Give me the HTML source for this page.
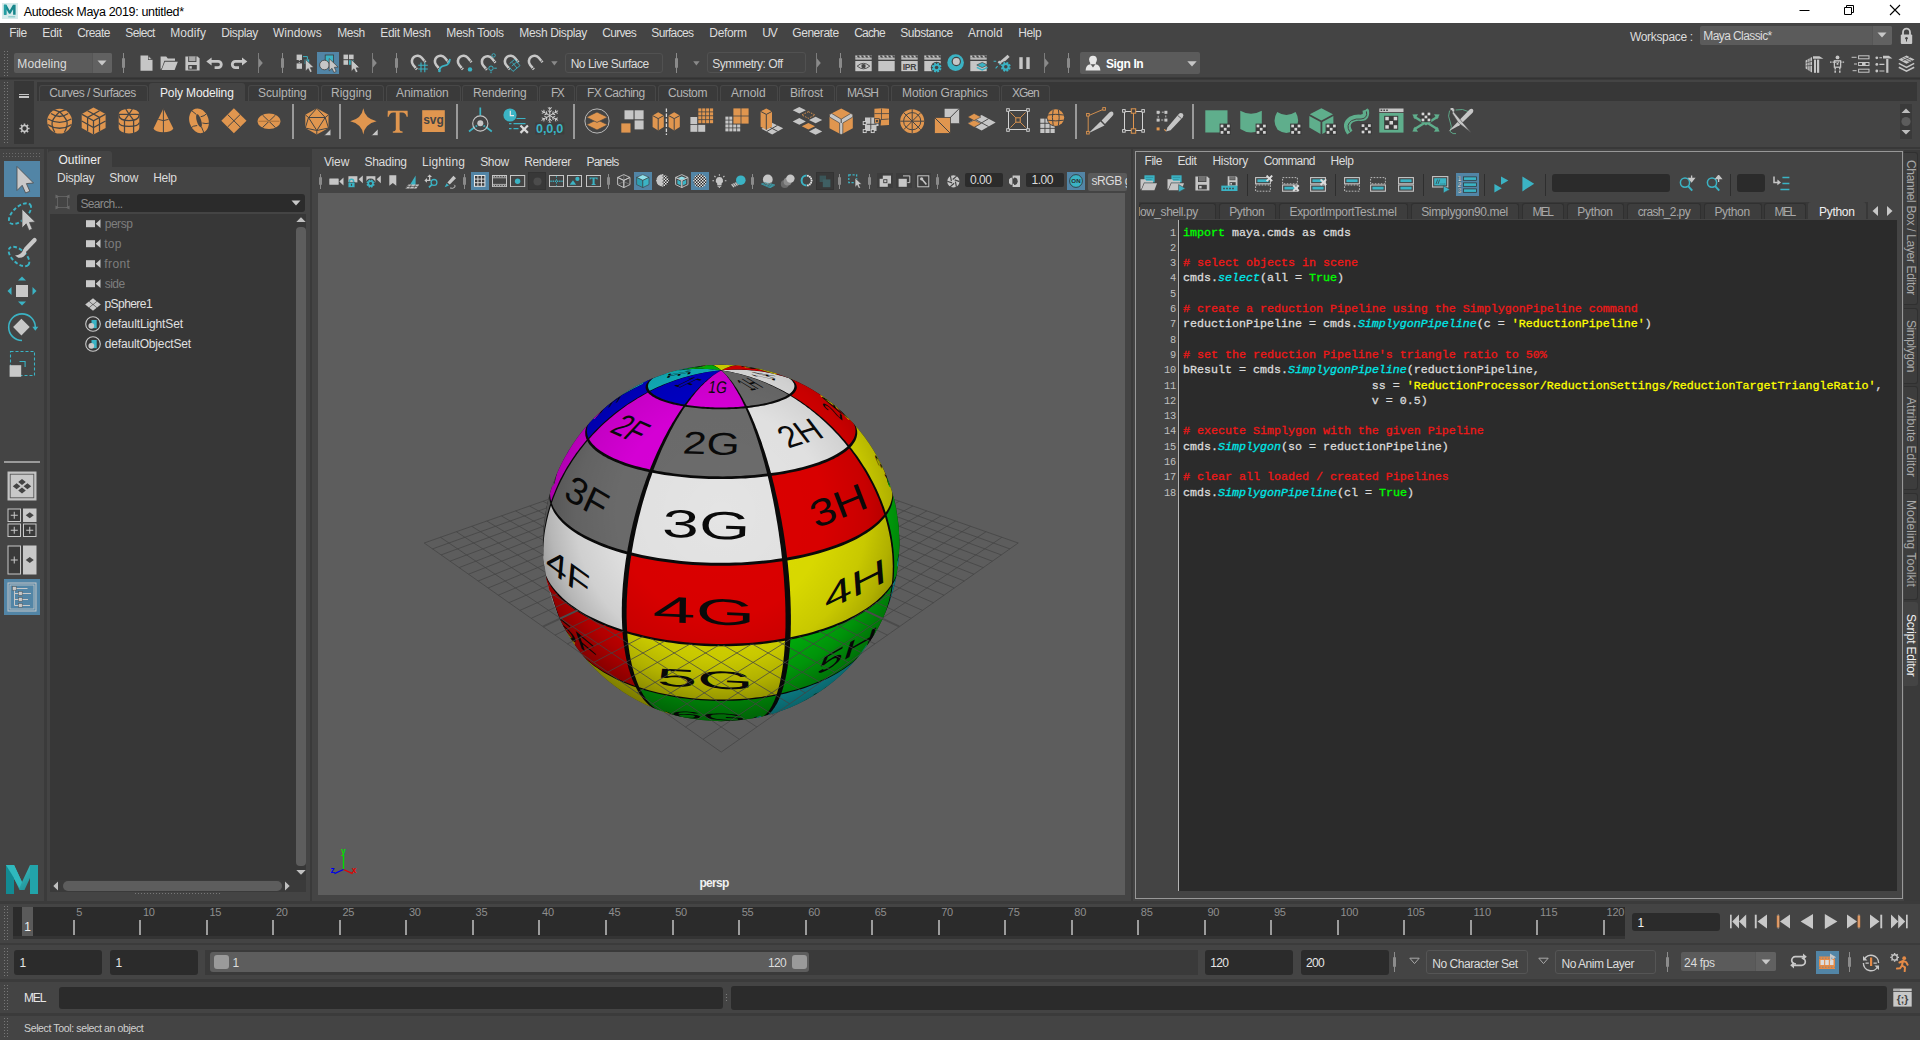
<!DOCTYPE html>
<html><head><meta charset="utf-8"><title>Autodesk Maya 2019: untitled*</title>
<style>
html,body{margin:0;padding:0;}
body{width:1920px;height:1040px;position:relative;overflow:hidden;background:#444444;font-family:"Liberation Sans",sans-serif;font-size:11px;color:#ccc;}
body div,body svg{position:absolute;box-sizing:border-box;}
.t{white-space:pre;}
</style></head><body>
<div style="left:0px;top:0px;width:1920px;height:23px;background:#ffffff;"></div>
<svg style="left:2px;top:3px;" width="16" height="16" viewBox="0 0 16 16"><rect width="16" height="16" fill="#d6ebeb"/><path d="M1.9 11.7V1.7h2.5L7.7 7.4l3.3-5.7h2.6V11.7h-2.5V6.2L8.4 10.8H7L4.4 6.2V11.7z" fill="#17868c"/><path d="M1.9 11.7V1.7h2.5V11.7z" fill="#249ea2"/><rect x="6.2" y="13.2" width="7" height="1.2" fill="#86caca"/></svg>
<div class="t" style="left:23.7px;top:2.6999999999999993px;font-size:12.5px;line-height:18px;color:#000;letter-spacing:-0.330px;">Autodesk Maya 2019: untitled*</div>
<svg style="left:1798px;top:4px;" width="16" height="16" viewBox="0 0 16 16"><path d="M1.5 6.5H11.5" stroke="#000" stroke-width="1" fill="none"/></svg>
<svg style="left:1843px;top:4px;" width="16" height="16" viewBox="0 0 16 16"><path d="M1.5 3.5h7v7h-7zM3.5 3.5v-2h7v7h-2" stroke="#000" stroke-width="1" fill="none"/></svg>
<svg style="left:1889px;top:4px;" width="16" height="16" viewBox="0 0 16 16"><path d="M1 1l10 10M11 1L1 11" stroke="#000" stroke-width="1.1" fill="none"/></svg>
<div class="t" style="left:9.3px;top:24.5px;font-size:12px;line-height:17px;color:#dcdcdc;letter-spacing:-0.484px;">File</div>
<div class="t" style="left:42.3px;top:24.5px;font-size:12px;line-height:17px;color:#dcdcdc;letter-spacing:-0.320px;">Edit</div>
<div class="t" style="left:77.3px;top:24.5px;font-size:12px;line-height:17px;color:#dcdcdc;letter-spacing:-0.603px;">Create</div>
<div class="t" style="left:125.3px;top:24.5px;font-size:12px;line-height:17px;color:#dcdcdc;letter-spacing:-0.659px;">Select</div>
<div class="t" style="left:170.3px;top:24.5px;font-size:12px;line-height:17px;color:#dcdcdc;letter-spacing:0.059px;">Modify</div>
<div class="t" style="left:221.3px;top:24.5px;font-size:12px;line-height:17px;color:#dcdcdc;letter-spacing:-0.378px;">Display</div>
<div class="t" style="left:273px;top:24.5px;font-size:12px;line-height:17px;color:#dcdcdc;letter-spacing:0.003px;">Windows</div>
<div class="t" style="left:337.3px;top:24.5px;font-size:12px;line-height:17px;color:#dcdcdc;letter-spacing:-0.486px;">Mesh</div>
<div class="t" style="left:380.3px;top:24.5px;font-size:12px;line-height:17px;color:#dcdcdc;letter-spacing:-0.329px;">Edit Mesh</div>
<div class="t" style="left:446.3px;top:24.5px;font-size:12px;line-height:17px;color:#dcdcdc;letter-spacing:-0.308px;">Mesh Tools</div>
<div class="t" style="left:519.3px;top:24.5px;font-size:12px;line-height:17px;color:#dcdcdc;letter-spacing:-0.360px;">Mesh Display</div>
<div class="t" style="left:602.3px;top:24.5px;font-size:12px;line-height:17px;color:#dcdcdc;letter-spacing:-0.718px;">Curves</div>
<div class="t" style="left:651.3px;top:24.5px;font-size:12px;line-height:17px;color:#dcdcdc;letter-spacing:-0.670px;">Surfaces</div>
<div class="t" style="left:709.3px;top:24.5px;font-size:12px;line-height:17px;color:#dcdcdc;letter-spacing:-0.324px;">Deform</div>
<div class="t" style="left:762.3px;top:24.5px;font-size:12px;line-height:17px;color:#dcdcdc;letter-spacing:-1.135px;">UV</div>
<div class="t" style="left:792.3px;top:24.5px;font-size:12px;line-height:17px;color:#dcdcdc;letter-spacing:-0.454px;">Generate</div>
<div class="t" style="left:854.3px;top:24.5px;font-size:12px;line-height:17px;color:#dcdcdc;letter-spacing:-0.858px;">Cache</div>
<div class="t" style="left:900.3px;top:24.5px;font-size:12px;line-height:17px;color:#dcdcdc;letter-spacing:-0.479px;">Substance</div>
<div class="t" style="left:968px;top:24.5px;font-size:12px;line-height:17px;color:#dcdcdc;letter-spacing:0.002px;">Arnold</div>
<div class="t" style="left:1018.3px;top:24.5px;font-size:12px;line-height:17px;color:#dcdcdc;letter-spacing:-0.420px;">Help</div>
<div class="t" style="left:1630px;top:28.5px;font-size:12px;line-height:17px;color:#dcdcdc;letter-spacing:-0.343px;">Workspace :</div>
<div style="left:1700px;top:26px;width:192px;height:19px;background:#5b5b5b;border-radius:2px;"></div>
<div style="left:1871.5px;top:26px;width:20.5px;height:19px;background:#616161;border-radius:0 2px 2px 0;border-left:1px solid #565656;"></div>
<div class="t" style="left:1703.3px;top:28.0px;font-size:12px;line-height:17px;color:#dcdcdc;letter-spacing:-0.586px;">Maya Classic*</div>
<svg style="left:1877px;top:32px;" width="10" height="6" viewBox="0 0 10 6"><path d="M0.5 0.5h9L5 5.5z" fill="#c8c8c8"/></svg>
<svg style="left:1900px;top:27px;" width="13" height="18" viewBox="0 0 13 18"><path d="M3 8V5.2a3.5 3.5 0 0 1 7 0V8" stroke="#c8c8c8" stroke-width="1.8" fill="none"/><rect x="0.8" y="7.5" width="11.4" height="9.5" rx="1" fill="#c8c8c8"/><circle cx="6.5" cy="11.2" r="1.3" fill="#444"/><rect x="6" y="11.5" width="1" height="3" fill="#444"/></svg>
<div style="left:2.5px;top:50px;width:5px;height:28px;background-image:radial-gradient(circle,#787878 0.6px,transparent 0.95px);background-size:3px 3px;"></div>
<div style="left:14px;top:53px;width:98px;height:20px;background:#5b5b5b;border-radius:2px;"></div>
<div style="left:92px;top:53px;width:20px;height:20px;background:#616161;border-radius:0 2px 2px 0;border-left:1px solid #565656;"></div>
<div class="t" style="left:17.3px;top:56.099999999999994px;font-size:12px;line-height:17px;color:#dcdcdc;letter-spacing:0.100px;">Modeling</div>
<svg style="left:97px;top:60px;" width="10" height="6" viewBox="0 0 10 6"><path d="M0.5 0.5h9L5 5.5z" fill="#c8c8c8"/></svg>
<div style="left:0px;top:77px;width:1920px;height:3px;background:#3a3a3a;"></div>
<div style="left:0px;top:78px;width:1920px;height:1px;background:#333333;"></div>
<div style="left:2.5px;top:81px;width:5px;height:62px;background-image:radial-gradient(circle,#787878 0.6px,transparent 0.95px);background-size:3px 3px;"></div>
<div style="left:14px;top:81px;width:20px;height:63px;background:#373737;"></div>
<div style="left:37px;top:82px;width:1880px;height:18.5px;background:#373737;"></div>
<div style="left:19px;top:93.7px;width:10.3px;height:1.6px;background:#c4c4c4;"></div>
<div style="left:19px;top:96.3px;width:10.3px;height:1.6px;background:#c4c4c4;"></div>
<svg style="left:19.1px;top:122.8px;" width="11" height="11" viewBox="0 0 11 11"><circle cx="5.5" cy="5.5" r="2.9" stroke="#c4c4c4" stroke-width="1.5" fill="none"/><g stroke="#c4c4c4" stroke-width="1.6"><path d="M5.5 0.4v1.8M5.5 8.8v1.8M0.4 5.5h1.8M8.8 5.5h1.8M1.9 1.9l1.3 1.3M7.8 7.8l1.3 1.3M1.9 9.1l1.3-1.3M7.8 3.2l1.3-1.3"/></g></svg>
<div style="left:39px;top:85px;width:108.5px;height:15.5px;background:#3a3a3a;border:1px solid #474747;border-bottom:none;border-radius:3px 3px 0 0;"></div>
<div class="t" style="left:49.3px;top:84.5px;font-size:12px;line-height:17px;color:#b4b4b4;letter-spacing:-0.528px;">Curves / Surfaces</div>
<div style="left:149px;top:83px;width:96px;height:18px;background:#444444;border-radius:3px 3px 0 0;"></div>
<div class="t" style="left:160px;top:84.5px;font-size:12px;line-height:17px;color:#f0f0f0;letter-spacing:-0.129px;">Poly Modeling</div>
<div style="left:247.5px;top:85px;width:71.5px;height:15.5px;background:#3a3a3a;border:1px solid #474747;border-bottom:none;border-radius:3px 3px 0 0;"></div>
<div class="t" style="left:258px;top:84.5px;font-size:12px;line-height:17px;color:#b4b4b4;letter-spacing:-0.074px;">Sculpting</div>
<div style="left:320.5px;top:85px;width:63.5px;height:15.5px;background:#3a3a3a;border:1px solid #474747;border-bottom:none;border-radius:3px 3px 0 0;"></div>
<div class="t" style="left:331px;top:84.5px;font-size:12px;line-height:17px;color:#b4b4b4;letter-spacing:0.001px;">Rigging</div>
<div style="left:385.5px;top:85px;width:75.0px;height:15.5px;background:#3a3a3a;border:1px solid #474747;border-bottom:none;border-radius:3px 3px 0 0;"></div>
<div class="t" style="left:396px;top:84.5px;font-size:12px;line-height:17px;color:#b4b4b4;letter-spacing:-0.074px;">Animation</div>
<div style="left:462px;top:85px;width:75.5px;height:15.5px;background:#3a3a3a;border:1px solid #474747;border-bottom:none;border-radius:3px 3px 0 0;"></div>
<div class="t" style="left:473px;top:84.5px;font-size:12px;line-height:17px;color:#b4b4b4;letter-spacing:-0.208px;">Rendering</div>
<div style="left:539px;top:85px;width:35.5px;height:15.5px;background:#3a3a3a;border:1px solid #474747;border-bottom:none;border-radius:3px 3px 0 0;"></div>
<div class="t" style="left:551px;top:84.5px;font-size:12px;line-height:17px;color:#b4b4b4;letter-spacing:-1.667px;">FX</div>
<div style="left:576px;top:85px;width:80px;height:15.5px;background:#3a3a3a;border:1px solid #474747;border-bottom:none;border-radius:3px 3px 0 0;"></div>
<div class="t" style="left:587px;top:84.5px;font-size:12px;line-height:17px;color:#b4b4b4;letter-spacing:-0.500px;">FX Caching</div>
<div style="left:657.5px;top:85px;width:60.5px;height:15.5px;background:#3a3a3a;border:1px solid #474747;border-bottom:none;border-radius:3px 3px 0 0;"></div>
<div class="t" style="left:668px;top:84.5px;font-size:12px;line-height:17px;color:#b4b4b4;letter-spacing:-0.391px;">Custom</div>
<div style="left:720px;top:85px;width:57.5px;height:15.5px;background:#3a3a3a;border:1px solid #474747;border-bottom:none;border-radius:3px 3px 0 0;"></div>
<div class="t" style="left:731px;top:84.5px;font-size:12px;line-height:17px;color:#b4b4b4;letter-spacing:0.002px;">Arnold</div>
<div style="left:779px;top:85px;width:55.5px;height:15.5px;background:#3a3a3a;border:1px solid #474747;border-bottom:none;border-radius:3px 3px 0 0;"></div>
<div class="t" style="left:790px;top:84.5px;font-size:12px;line-height:17px;color:#b4b4b4;letter-spacing:-0.144px;">Bifrost</div>
<div style="left:836px;top:85px;width:53px;height:15.5px;background:#3a3a3a;border:1px solid #474747;border-bottom:none;border-radius:3px 3px 0 0;"></div>
<div class="t" style="left:847px;top:84.5px;font-size:12px;line-height:17px;color:#b4b4b4;letter-spacing:-0.918px;">MASH</div>
<div style="left:891px;top:85px;width:108.5px;height:15.5px;background:#3a3a3a;border:1px solid #474747;border-bottom:none;border-radius:3px 3px 0 0;"></div>
<div class="t" style="left:902px;top:84.5px;font-size:12px;line-height:17px;color:#b4b4b4;letter-spacing:-0.111px;">Motion Graphics</div>
<div style="left:1001px;top:85px;width:48.5px;height:15.5px;background:#3a3a3a;border:1px solid #474747;border-bottom:none;border-radius:3px 3px 0 0;"></div>
<div class="t" style="left:1012px;top:84.5px;font-size:12px;line-height:17px;color:#b4b4b4;letter-spacing:-0.997px;">XGen</div>
<div style="left:1900px;top:104px;width:12px;height:35px;background:#3a3a3a;"></div>
<svg style="left:1901px;top:106px;" width="10" height="31" viewBox="0 0 10 31"><path d="M0.5 7L5 2.5L9.5 7z" fill="#bdbdbd"/><circle cx="5" cy="15.5" r="4.6" fill="#5d5d5d"/><path d="M0.5 24L5 28.5L9.5 24z" fill="#bdbdbd"/></svg>
<div style="left:0px;top:146.6px;width:1920px;height:2.4px;background:#383838;"></div>
<div style="left:122.5px;top:53px;width:1px;height:20px;background:#8a8a8a;"></div>
<div style="left:121.5px;top:58px;width:3px;height:10px;background:#8a8a8a;border-radius:1px;"></div>
<svg style="left:139.5px;top:55px;" width="13" height="16" viewBox="0 0 13 16"><path d="M0.5 0.4H8L12.5 4.9V15.8H0.5z" fill="#c6c6c6"/><path d="M8 0.4V4.9H12.5z" fill="#444444"/><path d="M8.6 1.6V4.3H11.3z" fill="#c6c6c6"/></svg>
<svg style="left:160.3px;top:56px;" width="18" height="14.5" viewBox="0 0 18 14.5"><path d="M0.6 13.6V0.6H6.2L7.8 2.4H15V4.8H4.4L1.8 12z" fill="#c6c6c6"/><path d="M4.9 5.8H17.8L14.6 13.9H1.6z" fill="#c6c6c6"/></svg>
<svg style="left:184.5px;top:55.5px;" width="15" height="15" viewBox="0 0 15 15"><path d="M0.4 0.4H12.6L14.6 2.4V14.6H0.4z" fill="#c6c6c6"/><rect x="3.2" y="0.4" width="8.2" height="5.6" fill="#444444"/><rect x="4.1" y="0.4" width="6.4" height="4.7" fill="#a8a8a8"/><rect x="3.2" y="9" width="8.6" height="4.6" fill="#444444"/><rect x="4.4" y="10.2" width="2.4" height="2.4" fill="#c6c6c6"/></svg>
<svg style="left:205.8px;top:57px;" width="18" height="13" viewBox="0 0 18 13"><path d="M5.6 0.4L0.3 4.4L5.6 8.4V5.8H12.2A1.7 1.7 0 0 1 12.2 9.2H8.6V12H12.2A4.5 4.5 0 0 0 12.2 3H5.6z" fill="#c6c6c6"/></svg>
<svg style="left:229.6px;top:57px;" width="18" height="13" viewBox="0 0 18 13"><g transform="translate(17.6,0) scale(-1,1)"><path d="M5.6 0.4L0.3 4.4L5.6 8.4V5.8H12.2A1.7 1.7 0 0 1 12.2 9.2H8.6V12H12.2A4.5 4.5 0 0 0 12.2 3H5.6z" fill="#c6c6c6"/></g></svg>
<div style="left:258.1px;top:53px;width:1px;height:20px;background:#7c7c7c;"></div>
<svg style="left:258.90000000000003px;top:58.0px;" width="5" height="10" viewBox="0 0 5 10"><path d="M0 0.5L3.8 5L0 9.5z" fill="#8a8a8a"/></svg>
<div style="left:281.8px;top:53px;width:1px;height:20px;background:#8a8a8a;"></div>
<div style="left:280.8px;top:58px;width:3px;height:10px;background:#8a8a8a;border-radius:1px;"></div>
<svg style="left:296.3px;top:53.5px;" width="18" height="19" viewBox="0 0 18 19"><rect x="0.6" y="0.6" width="5.4" height="5.4" fill="#c6c6c6"/><rect x="0.6" y="9.4" width="5.4" height="5.4" fill="#c6c6c6"/><path d="M3.3 6v3.4" stroke="#c6c6c6" stroke-width="0.9" stroke-dasharray="1 1"/><path d="M7 2.6h4.4v2.6" fill="none" stroke="#3bb3c4" stroke-width="1"/><rect x="8.6" y="5.4" width="4.6" height="4.6" fill="#3bb3c4"/><path d="M9.4 5.2L9.4 17.2L12.2 14.6L14.0 18.6L16.2 17.6L14.4 13.7L18.0 13.5z" fill="#c6c6c6" stroke="#3d3d3d" stroke-width="0.7" stroke-linejoin="round"/></svg>
<div style="left:317px;top:52px;width:22.2px;height:22px;background:#5285a6;"></div>
<svg style="left:318.5px;top:53.5px;" width="20" height="19" viewBox="0 0 20 19"><rect x="6.2" y="1" width="8.4" height="8.4" fill="#3bb3c4" stroke="#3d3d3d" stroke-width="0.8"/><circle cx="5.4" cy="11" r="4.8" fill="#c6c6c6" stroke="#3d3d3d" stroke-width="0.8"/><path d="M10.2 4.6L10.2 16.9L13.0 14.3L14.9 18.5L17.2 17.4L15.3 13.3L19.1 13.1z" fill="#c6c6c6" stroke="#3d3d3d" stroke-width="0.7" stroke-linejoin="round"/></svg>
<svg style="left:343.2px;top:53.5px;" width="18" height="19" viewBox="0 0 18 19"><rect x="0.5" y="0.6" width="4.6" height="4.6" fill="#c6c6c6"/><rect x="6" y="0.6" width="4.6" height="4.6" fill="#c6c6c6"/><rect x="0.5" y="6.2" width="4.6" height="4.6" fill="#c6c6c6"/><rect x="6" y="6.2" width="4.6" height="4.6" fill="#3bb3c4"/><path d="M8.2 5.4L8.2 17.4L11.0 14.8L12.8 18.8L15.0 17.8L13.2 13.9L16.8 13.7z" fill="#c6c6c6" stroke="#3d3d3d" stroke-width="0.7" stroke-linejoin="round"/></svg>
<div style="left:371.8px;top:53px;width:1px;height:20px;background:#7c7c7c;"></div>
<svg style="left:372.6px;top:58.0px;" width="5" height="10" viewBox="0 0 5 10"><path d="M0 0.5L3.8 5L0 9.5z" fill="#8a8a8a"/></svg>
<div style="left:395.8px;top:53px;width:1px;height:20px;background:#8a8a8a;"></div>
<div style="left:394.8px;top:58px;width:3px;height:10px;background:#8a8a8a;border-radius:1px;"></div>
<svg style="left:410px;top:54px;" width="19" height="19" viewBox="0 0 19 19"><g transform="rotate(-40 8 8)"><path d="M2.4 13V7.2a5.6 5.6 0 0 1 11.2 0V13" fill="none" stroke="#c6c6c6" stroke-width="2.6"/><path d="M1.1 11.4h2.6M12.3 11.4h2.6" stroke="#444444" stroke-width="0.8"/></g><path d="M8.2 11.2h9.6M8.2 15h9.6M11 8.6v9.6M14.8 8.6v9.6" stroke="#3bb3c4" stroke-width="1.1"/></svg>
<svg style="left:433.3px;top:54px;" width="19" height="19" viewBox="0 0 19 19"><g transform="rotate(-40 8 8)"><path d="M2.4 13V7.2a5.6 5.6 0 0 1 11.2 0V13" fill="none" stroke="#c6c6c6" stroke-width="2.6"/><path d="M1.1 11.4h2.6M12.3 11.4h2.6" stroke="#444444" stroke-width="0.8"/></g><path d="M6.4 17.4Q6.6 12.4 11.6 11.6Q16.4 11 17 4.8" fill="none" stroke="#3bb3c4" stroke-width="1.7"/><circle cx="6.4" cy="17" r="1.3" fill="#3bb3c4"/></svg>
<svg style="left:456.3px;top:54px;" width="19" height="19" viewBox="0 0 19 19"><g transform="rotate(-40 8 8)"><path d="M2.4 13V7.2a5.6 5.6 0 0 1 11.2 0V13" fill="none" stroke="#c6c6c6" stroke-width="2.6"/><path d="M1.1 11.4h2.6M12.3 11.4h2.6" stroke="#444444" stroke-width="0.8"/></g><circle cx="14" cy="15.4" r="2.2" fill="#3bb3c4"/></svg>
<svg style="left:479.6px;top:52.5px;" width="19" height="21" viewBox="0 0 19 21"><g transform="translate(0,1.5)"><g transform="rotate(-40 8 8)"><path d="M2.4 13V7.2a5.6 5.6 0 0 1 11.2 0V13" fill="none" stroke="#c6c6c6" stroke-width="2.6"/><path d="M1.1 11.4h2.6M12.3 11.4h2.6" stroke="#444444" stroke-width="0.8"/></g></g><circle cx="13.6" cy="2.4" r="1.7" fill="none" stroke="#3bb3c4" stroke-width="0.9"/><circle cx="11" cy="15.2" r="2.2" fill="none" stroke="#3bb3c4" stroke-width="1"/><path d="M14.2 15.2h2.6M11 18.4v1.8" stroke="#3bb3c4" stroke-width="1"/></svg>
<svg style="left:502.5px;top:54px;" width="19" height="19" viewBox="0 0 19 19"><g transform="rotate(-40 8 8)"><path d="M2.4 13V7.2a5.6 5.6 0 0 1 11.2 0V13" fill="none" stroke="#c6c6c6" stroke-width="2.6"/><path d="M1.1 11.4h2.6M12.3 11.4h2.6" stroke="#444444" stroke-width="0.8"/></g><path d="M6.6 9.6L11.6 5.4L17 11.6L10 17.4L6.6 13.6M9.4 8.6l4.6 5.4M8.8 12l5-4" fill="none" stroke="#3bb3c4" stroke-width="0.9"/></svg>
<svg style="left:526.5px;top:54px;" width="19" height="19" viewBox="0 0 19 19"><g transform="rotate(-40 8 8)"><path d="M2.4 13V7.2a5.6 5.6 0 0 1 11.2 0V13" fill="none" stroke="#c6c6c6" stroke-width="2.6"/><path d="M1.1 11.4h2.6M12.3 11.4h2.6" stroke="#444444" stroke-width="0.8"/></g></svg>
<svg style="left:551px;top:61px;" width="7" height="5" viewBox="0 0 7 5"><path d="M0.2 0.3h6.4L3.4 4.4z" fill="#8a8a8a"/></svg>
<div style="left:565px;top:52.6px;width:98.3px;height:20.8px;background:#444444;border:1px solid #515151;border-radius:3px;"></div>
<div class="t" style="left:570.7px;top:55.900000000000006px;font-size:12px;line-height:17px;color:#dcdcdc;letter-spacing:-0.492px;">No Live Surface</div>
<div style="left:675.5px;top:53px;width:1px;height:20px;background:#8a8a8a;"></div>
<div style="left:674.5px;top:58px;width:3px;height:10px;background:#8a8a8a;border-radius:1px;"></div>
<svg style="left:693px;top:60.5px;" width="7" height="5" viewBox="0 0 7 5"><path d="M0.2 0.3h6.4L3.4 4.4z" fill="#8a8a8a"/></svg>
<div style="left:706.7px;top:52px;width:99px;height:21.3px;background:#444444;border:1px solid #515151;border-radius:3px;"></div>
<div class="t" style="left:712.3px;top:55.900000000000006px;font-size:12px;line-height:17px;color:#dcdcdc;letter-spacing:-0.466px;">Symmetry: Off</div>
<div style="left:816.2px;top:53px;width:1px;height:20px;background:#7c7c7c;"></div>
<svg style="left:817.0px;top:58.0px;" width="5" height="10" viewBox="0 0 5 10"><path d="M0 0.5L3.8 5L0 9.5z" fill="#8a8a8a"/></svg>
<div style="left:839.9px;top:53px;width:1px;height:20px;background:#8a8a8a;"></div>
<div style="left:838.9px;top:58px;width:3px;height:10px;background:#8a8a8a;border-radius:1px;"></div>
<svg style="left:854.5px;top:54.7px;" width="17" height="17" viewBox="0 0 17 17"><rect x="0.3" y="0.4" width="16.4" height="4.2" fill="#c6c6c6"/><path d="M1.6 0.4h2.2l1.4 2.1h-2.2z" fill="#444444"/><path d="M2.2 2.5h2.2l-1.2 2.1h-2.2z" fill="#444444" opacity="0"/><path d="M5.699999999999999 0.4h2.2l1.4 2.1h-2.2z" fill="#444444"/><path d="M6.299999999999999 2.5h2.2l-1.2 2.1h-2.2z" fill="#444444" opacity="0"/><path d="M9.799999999999999 0.4h2.2l1.4 2.1h-2.2z" fill="#444444"/><path d="M10.399999999999999 2.5h2.2l-1.2 2.1h-2.2z" fill="#444444" opacity="0"/><path d="M13.899999999999999 0.4h2.2l1.4 2.1h-2.2z" fill="#444444"/><path d="M14.499999999999998 2.5h2.2l-1.2 2.1h-2.2z" fill="#444444" opacity="0"/><rect x="0.3" y="2.5" width="16.4" height="0.7" fill="#444444" opacity="0.55"/><rect x="0.3" y="6" width="16.4" height="10.2" fill="#c6c6c6"/><path d="M2.2 11.1Q8.5 5.6 14.8 11.1Q8.5 16.6 2.2 11.1z" fill="none" stroke="#444444" stroke-width="0.9"/><circle cx="8.5" cy="11.1" r="2.2" fill="#444444"/></svg>
<svg style="left:877.5px;top:54.7px;" width="17" height="17" viewBox="0 0 17 17"><rect x="0.3" y="0.4" width="16.4" height="4.2" fill="#c6c6c6"/><path d="M1.6 0.4h2.2l1.4 2.1h-2.2z" fill="#444444"/><path d="M2.2 2.5h2.2l-1.2 2.1h-2.2z" fill="#444444" opacity="0"/><path d="M5.699999999999999 0.4h2.2l1.4 2.1h-2.2z" fill="#444444"/><path d="M6.299999999999999 2.5h2.2l-1.2 2.1h-2.2z" fill="#444444" opacity="0"/><path d="M9.799999999999999 0.4h2.2l1.4 2.1h-2.2z" fill="#444444"/><path d="M10.399999999999999 2.5h2.2l-1.2 2.1h-2.2z" fill="#444444" opacity="0"/><path d="M13.899999999999999 0.4h2.2l1.4 2.1h-2.2z" fill="#444444"/><path d="M14.499999999999998 2.5h2.2l-1.2 2.1h-2.2z" fill="#444444" opacity="0"/><rect x="0.3" y="2.5" width="16.4" height="0.7" fill="#444444" opacity="0.55"/><rect x="0.3" y="6" width="16.4" height="10.2" fill="#c6c6c6"/></svg>
<svg style="left:900.6px;top:54.7px;" width="17" height="17" viewBox="0 0 17 17"><rect x="0.3" y="0.4" width="16.4" height="4.2" fill="#c6c6c6"/><path d="M1.6 0.4h2.2l1.4 2.1h-2.2z" fill="#444444"/><path d="M2.2 2.5h2.2l-1.2 2.1h-2.2z" fill="#444444" opacity="0"/><path d="M5.699999999999999 0.4h2.2l1.4 2.1h-2.2z" fill="#444444"/><path d="M6.299999999999999 2.5h2.2l-1.2 2.1h-2.2z" fill="#444444" opacity="0"/><path d="M9.799999999999999 0.4h2.2l1.4 2.1h-2.2z" fill="#444444"/><path d="M10.399999999999999 2.5h2.2l-1.2 2.1h-2.2z" fill="#444444" opacity="0"/><path d="M13.899999999999999 0.4h2.2l1.4 2.1h-2.2z" fill="#444444"/><path d="M14.499999999999998 2.5h2.2l-1.2 2.1h-2.2z" fill="#444444" opacity="0"/><rect x="0.3" y="2.5" width="16.4" height="0.7" fill="#444444" opacity="0.55"/><rect x="0.3" y="6" width="16.4" height="10.2" fill="#c6c6c6"/><text x="8.5" y="14.6" text-anchor="middle" font-family="Liberation Sans" font-size="8.6" fill="#444444" font-weight="700" letter-spacing="-0.2">IPR</text></svg>
<svg style="left:923.7px;top:54.7px;" width="19" height="19" viewBox="0 0 19 19"><rect x="0.3" y="0.4" width="16.4" height="4.2" fill="#c6c6c6"/><path d="M1.6 0.4h2.2l1.4 2.1h-2.2z" fill="#444444"/><path d="M2.2 2.5h2.2l-1.2 2.1h-2.2z" fill="#444444" opacity="0"/><path d="M5.699999999999999 0.4h2.2l1.4 2.1h-2.2z" fill="#444444"/><path d="M6.299999999999999 2.5h2.2l-1.2 2.1h-2.2z" fill="#444444" opacity="0"/><path d="M9.799999999999999 0.4h2.2l1.4 2.1h-2.2z" fill="#444444"/><path d="M10.399999999999999 2.5h2.2l-1.2 2.1h-2.2z" fill="#444444" opacity="0"/><path d="M13.899999999999999 0.4h2.2l1.4 2.1h-2.2z" fill="#444444"/><path d="M14.499999999999998 2.5h2.2l-1.2 2.1h-2.2z" fill="#444444" opacity="0"/><rect x="0.3" y="2.5" width="16.4" height="0.7" fill="#444444" opacity="0.55"/><rect x="0.3" y="6" width="16.4" height="10.2" fill="#c6c6c6"/><circle cx="12.6" cy="12.6" r="5.80" fill="#444"/><path d="M15.09 13.63L17.13 14.48M13.63 15.09L14.48 17.13M11.57 15.09L10.72 17.13M10.11 13.63L8.07 14.48M10.11 11.57L8.07 10.72M11.57 10.11L10.72 8.07M13.63 10.11L14.48 8.07M15.09 11.57L17.13 10.72" stroke="#3bb3c4" stroke-width="2.06"/><circle cx="12.6" cy="12.6" r="3.63" fill="#3bb3c4"/><circle cx="12.6" cy="12.6" r="1.76" fill="#444"/></svg>
<svg style="left:946.5px;top:54.3px;" width="17.4" height="17.4" viewBox="0 0 17.4 17.4"><circle cx="8.6" cy="8.6" r="8.3" fill="#3bb3c4"/><circle cx="9.3" cy="7.5" r="4.7" fill="#444444"/><circle cx="9.3" cy="7.5" r="3.5" fill="#c6c6c6"/></svg>
<svg style="left:969.5px;top:54.7px;" width="19" height="19" viewBox="0 0 19 19"><rect x="0.3" y="0.4" width="16.4" height="4.2" fill="#c6c6c6"/><path d="M1.6 0.4h2.2l1.4 2.1h-2.2z" fill="#444444"/><path d="M2.2 2.5h2.2l-1.2 2.1h-2.2z" fill="#444444" opacity="0"/><path d="M5.699999999999999 0.4h2.2l1.4 2.1h-2.2z" fill="#444444"/><path d="M6.299999999999999 2.5h2.2l-1.2 2.1h-2.2z" fill="#444444" opacity="0"/><path d="M9.799999999999999 0.4h2.2l1.4 2.1h-2.2z" fill="#444444"/><path d="M10.399999999999999 2.5h2.2l-1.2 2.1h-2.2z" fill="#444444" opacity="0"/><path d="M13.899999999999999 0.4h2.2l1.4 2.1h-2.2z" fill="#444444"/><path d="M14.499999999999998 2.5h2.2l-1.2 2.1h-2.2z" fill="#444444" opacity="0"/><rect x="0.3" y="2.5" width="16.4" height="0.7" fill="#444444" opacity="0.55"/><rect x="0.3" y="6" width="16.4" height="10.2" fill="#c6c6c6"/><path d="M12.2 7.4L17.6 10L12.2 12.6L6.8 10z" fill="#3bb3c4" stroke="#444444" stroke-width="0.7"/><path d="M6.8 12.4L12.2 15L17.6 12.4" fill="none" stroke="#3bb3c4" stroke-width="1.5"/><path d="M6.8 12.2L12.2 14.8L17.6 12.2" fill="none" stroke="#444444" stroke-width="0" /></svg>
<svg style="left:992.5px;top:54.3px;" width="19" height="19" viewBox="0 0 19 19"><path d="M6.8 7.4L14.6 0.8L16.6 3L9.4 9.8z" fill="#c6c6c6"/><path d="M5.4 7.4L9.6 11.6" stroke="#c6c6c6" stroke-width="2.2"/><path d="M0.6 7.2h2.6M2.6 14.4l2-2.2M6.2 9.4l1.6 1.6" stroke="#3bb3c4" stroke-width="1.1"/><circle cx="12.8" cy="12.8" r="5.80" fill="#444"/><path d="M15.29 13.83L17.33 14.68M13.83 15.29L14.68 17.33M11.77 15.29L10.92 17.33M10.31 13.83L8.27 14.68M10.31 11.77L8.27 10.92M11.77 10.31L10.92 8.27M13.83 10.31L14.68 8.27M15.29 11.77L17.33 10.92" stroke="#3bb3c4" stroke-width="2.06"/><circle cx="12.8" cy="12.8" r="3.63" fill="#3bb3c4"/><circle cx="12.8" cy="12.8" r="1.76" fill="#444"/></svg>
<svg style="left:1018.6px;top:56.8px;" width="11" height="12.2" viewBox="0 0 11 12.2"><rect x="0.3" y="0.2" width="3.4" height="11.8" fill="#c6c6c6"/><rect x="7.3" y="0.2" width="3.4" height="11.8" fill="#c6c6c6"/></svg>
<div style="left:1043.8px;top:53px;width:1px;height:20px;background:#7c7c7c;"></div>
<svg style="left:1044.6px;top:58.0px;" width="5" height="10" viewBox="0 0 5 10"><path d="M0 0.5L3.8 5L0 9.5z" fill="#8a8a8a"/></svg>
<div style="left:1067.8px;top:53px;width:1px;height:20px;background:#8a8a8a;"></div>
<div style="left:1066.8px;top:58px;width:3px;height:10px;background:#8a8a8a;border-radius:1px;"></div>
<div style="left:1080px;top:52.3px;width:120px;height:21.7px;background:#5b5b5b;border-radius:2px;"></div>
<svg style="left:1085px;top:55px;" width="16" height="16" viewBox="0 0 16 16"><circle cx="8" cy="4.6" r="3.9" fill="#e6e6e6"/><path d="M0.6 15.6Q0.8 9.6 5.6 9.2L8 12.4L10.4 9.2Q15.2 9.6 15.4 15.6z" fill="#e6e6e6"/><path d="M5.2 6.6Q8 9.6 10.8 6.6V9.2H5.2z" fill="#e6e6e6"/></svg>
<div class="t" style="left:1106px;top:55.7px;font-size:12px;line-height:17px;color:#ffffff;letter-spacing:-0.385px;font-weight:700;">Sign In</div>
<svg style="left:1186.5px;top:60.5px;" width="10" height="6" viewBox="0 0 10 6"><path d="M0.3 0.3h9.4l-4.7 5.2z" fill="#c6c6c6"/></svg>
<svg style="left:1804.5px;top:54.5px;" width="19" height="19" viewBox="0 0 19 19"><path d="M0.6 5.4L7 2V17.6L0.6 13.4z" fill="#c6c6c6"/><path d="M0.6 8.2L7 6.2M0.6 11L7 10.4M2.8 4.2V15M5 3V16.4" stroke="#444444" stroke-width="0.7"/><path d="M8 1.2H14.4L18.4 3.8H8z" fill="#c6c6c6"/><rect x="9" y="4.6" width="2" height="13.2" fill="#c6c6c6"/><rect x="12" y="4.6" width="2.2" height="13.2" fill="#c6c6c6"/></svg>
<svg style="left:1828.5px;top:54.5px;" width="17" height="19" viewBox="0 0 17 19"><circle cx="8.5" cy="2.4" r="1.9" fill="#c6c6c6"/><path d="M1 7.2h15" stroke="#c6c6c6" stroke-width="1.3" stroke-dasharray="1.6 0.9"/><rect x="5.4" y="5.8" width="6.2" height="6.4" fill="none" stroke="#c6c6c6" stroke-width="1.3"/><rect x="7.6" y="8" width="1.8" height="1.8" fill="#c6c6c6"/><path d="M6.2 12.4v6M10.8 12.4v6" stroke="#c6c6c6" stroke-width="1.5" stroke-dasharray="2.2 0.9"/></svg>
<svg style="left:1851px;top:55px;" width="19" height="18" viewBox="0 0 19 18"><g fill="none" stroke="#c6c6c6" stroke-width="1"><rect x="7.6" y="0.8" width="10.4" height="3"/><rect x="7.6" y="14.2" width="10.4" height="3"/><rect x="7.6" y="7.5" width="10.4" height="3"/><path d="M0.6 2.3h5M3 9h3M1.6 15.7h4"/></g><rect x="11" y="7.5" width="3.6" height="3" fill="#c6c6c6"/></svg>
<svg style="left:1874.5px;top:54.5px;" width="18" height="19" viewBox="0 0 18 19"><g fill="#c6c6c6"><circle cx="1.8" cy="2.8" r="1.4"/><circle cx="1.8" cy="9.4" r="1.4"/><circle cx="1.8" cy="16" r="1.4"/><path d="M8 0.8H13.8L17.4 3.4H8z"/><rect x="11.2" y="4" width="2.2" height="13.8"/></g><path d="M4.4 2.8h2.6M4.4 9.4h5M4.4 16h5" stroke="#c6c6c6" stroke-width="1.1"/></svg>
<svg style="left:1897.5px;top:55px;" width="17" height="18" viewBox="0 0 17 18"><path d="M8.5 0.5L16.5 4.6L8.5 8.7L0.5 4.6z" fill="#c6c6c6"/><path d="M4.4 3.4L12 7M6.4 2.2L14 5.8M4.6 5.8L12.2 2.2" stroke="#444444" stroke-width="0.7"/><path d="M0.8 8.4L8.5 12.4L16.2 8.4M0.8 12.2L8.5 16.2L16.2 12.2" fill="none" stroke="#c6c6c6" stroke-width="1.6"/></svg>
<div style="left:2px;top:152px;width:38px;height:5px;background-image:radial-gradient(circle,#6a6a6a 0.6px,transparent 0.9px);background-size:3px 3px;"></div>
<div style="left:44px;top:149px;width:3px;height:752px;background:#3b3b3b;"></div>
<div style="left:4px;top:161px;width:36px;height:36px;background:#5285a6;"></div>
<svg style="left:4px;top:161px;" width="36" height="36" viewBox="0 0 36 36"><path d="M13 5.5L13 29.5L18.2 24.3L21.6 32L25.8 30.2L22.4 22.6L29.5 22z" fill="#c9c9c9" stroke="#4a4a4a" stroke-width="0.8" stroke-linejoin="round"/></svg>
<svg style="left:4px;top:199px;" width="36" height="36" viewBox="0 0 36 36"><ellipse cx="16" cy="14.6" rx="13.6" ry="6.8" transform="rotate(-42 16 14.6)" fill="none" stroke="#3bb3c4" stroke-width="1.9" stroke-dasharray="3.6 2.2"/><path d="M18 10L18 29L22.2 24.8L25 31.5L28.3 30L25.5 23.5L31.3 23z" fill="#c8c8c8" stroke="#444" stroke-width="0.7"/></svg>
<svg style="left:4px;top:236px;" width="36" height="36" viewBox="0 0 36 36"><ellipse cx="15" cy="20.5" rx="12.6" ry="6.6" transform="rotate(42 15 20.5)" fill="none" stroke="#3bb3c4" stroke-width="1.9" stroke-dasharray="3.6 2.2"/><path d="M21.8 13.2L30.6 4" stroke="#c8c8c8" stroke-width="4.2" stroke-linecap="round"/><path d="M11 19.5c5.5-0.5 7.5-3.5 8.5-6.5l2.8 2.2c0.2 4-3.5 7.5-8 6.5z" fill="#c8c8c8"/></svg>
<svg style="left:4px;top:273px;" width="36" height="36" viewBox="0 0 36 36"><rect x="12" y="12" width="12" height="12" fill="#c8c8c8"/><path d="M18 3.5l4 4h-8zM18 32.5l4-4h-8zM3.5 18l4-4v8zM32.5 18l-4-4v8z" fill="#3bb3c4"/></svg>
<svg style="left:2px;top:308px;" width="40" height="40" viewBox="0 0 40 40"><path d="M20 32.5A13.3 13.3 0 1 1 33.3 19.2" fill="none" stroke="#3bb3c4" stroke-width="1.6"/><path d="M30.3 18.8h6l-3 4z" fill="#3bb3c4"/><path d="M19.4 10.8l8.3 8.3l-8.3 8.3l-8.3-8.3z" fill="#c8c8c8"/></svg>
<svg style="left:4px;top:346px;" width="36" height="36" viewBox="0 0 36 36"><rect x="6.5" y="5.5" width="24" height="24" fill="none" stroke="#3bb3c4" stroke-width="1.1" stroke-dasharray="3 2"/><rect x="5.6" y="19.2" width="11.6" height="11.6" fill="#c8c8c8"/><path d="M15.5 15.5h5.6v5.6" fill="none" stroke="#3bb3c4" stroke-width="1.1"/></svg>
<div style="left:4px;top:461px;width:36px;height:2px;background:#9a9a9a;"></div>
<svg style="left:7px;top:471px;" width="30" height="30" viewBox="0 0 30 30"><rect x="1" y="1" width="28" height="28" fill="#c8c8c8" stroke="#bdbdbd"/><rect x="3.2" y="3.2" width="23.6" height="23.6" fill="none" stroke="#555" stroke-width="0.9"/><path d="M15 8l3.8 3l-3.8 3l-3.8-3zM9.6 12.2l3.8 3l-3.8 3l-3.8-3zM20.4 12.2l3.8 3l-3.8 3l-3.8-3zM15 16.4l3.8 3l-3.8 3l-3.8-3z" fill="#444"/></svg>
<svg style="left:7px;top:508px;" width="30" height="30" viewBox="0 0 30 30"><rect x="1.0" y="1.0" width="12.5" height="12.5" fill="#3a3a3a" stroke="#c8c8c8" stroke-width="1"/><path d="M7.25 3.75v7M3.75 7.25h7" stroke="#c8c8c8" stroke-width="1"/><rect x="16" y="0.5" width="13.5" height="13.5" fill="#c8c8c8"/><path d="M22.75 4.25l4 3l-4 3l-4-3z" fill="#444"/><rect x="1.0" y="16.0" width="12.5" height="12.5" fill="#3a3a3a" stroke="#c8c8c8" stroke-width="1"/><path d="M7.25 18.75v7M3.75 22.25h7" stroke="#c8c8c8" stroke-width="1"/><rect x="16.5" y="16.0" width="12.5" height="12.5" fill="#3a3a3a" stroke="#c8c8c8" stroke-width="1"/><path d="M22.75 18.75v7M19.25 22.25h7" stroke="#c8c8c8" stroke-width="1"/></svg>
<svg style="left:7px;top:545px;" width="30" height="30" viewBox="0 0 30 30"><rect x="1.0" y="1.0" width="12.5" height="28" fill="#3a3a3a" stroke="#c8c8c8" stroke-width="1"/><path d="M7.25 11.5v7M3.75 15.0h7" stroke="#c8c8c8" stroke-width="1"/><rect x="16" y="0.5" width="13.5" height="29" fill="#c8c8c8"/><path d="M22.75 12.0l4 3l-4 3l-4-3z" fill="#444"/></svg>
<div style="left:4px;top:579px;width:36px;height:36px;background:#5285a6;"></div>
<svg style="left:4px;top:579px;" width="36" height="36" viewBox="0 0 36 36"><rect x="4" y="4" width="28" height="28" fill="none" stroke="#c8c8c8" stroke-width="1"/><rect x="6" y="6" width="24" height="24" fill="none" stroke="#c8c8c8" stroke-width="0.8"/><g stroke="#c8c8c8" stroke-width="1" fill="none"><path d="M10.5 9.5h13M10.5 11v15.5M10.5 14.5h6M10.5 20.5h6M10.5 26.5h6M18 14.5h9M18 20.5h6M18 26.5h8"/></g><g fill="#c8c8c8" stroke="#555" stroke-width="0.5"><rect x="8.6" y="7.6" width="3.6" height="3.6"/><rect x="14.6" y="12.6" width="3.6" height="3.6"/><rect x="14.6" y="18.6" width="3.6" height="3.6"/><rect x="14.6" y="24.6" width="3.6" height="3.6"/></g></svg>
<svg style="left:5px;top:864px;" width="34" height="31" viewBox="0 0 34 31"><defs><linearGradient id="mg" x1="0" y1="0" x2="1" y2="1"><stop offset="0" stop-color="#4fd0cf"/><stop offset="1" stop-color="#0f7f88"/></linearGradient></defs><path d="M1 30V1h8l8 17l8-17h8v29h-8V14l-5.5 12h-5L9 14v16z" fill="url(#mg)"/><path d="M1 1h8l8 17l-2.5 6z" fill="#2fb9bd"/><path d="M25 1h8v29h-8z" fill="#22a4aa"/><path d="M1 30V1l8 13v16z" fill="#138a92"/></svg>
<div style="left:48px;top:149px;width:263px;height:18px;background:#3a3a3a;"></div>
<div style="left:48px;top:151px;width:64px;height:16px;background:#444444;border-radius:3px 3px 0 0;"></div>
<div class="t" style="left:58.4px;top:151.9px;font-size:12px;line-height:17px;color:#eeeeee;letter-spacing:0.098px;">Outliner</div>
<div class="t" style="left:57.1px;top:170.0px;font-size:12px;line-height:17px;color:#dcdcdc;letter-spacing:-0.307px;">Display</div>
<div class="t" style="left:109.2px;top:170.0px;font-size:12px;line-height:17px;color:#dcdcdc;letter-spacing:-0.255px;">Show</div>
<div class="t" style="left:153.2px;top:170.0px;font-size:12px;line-height:17px;color:#dcdcdc;letter-spacing:-0.295px;">Help</div>
<svg style="left:55px;top:194px;" width="15" height="16" viewBox="0 0 15 16"><rect x="2.5" y="2.5" width="10" height="11" fill="none" stroke="#606060" stroke-width="1"/><path d="M0.5 0.5l4 2l-4 2zM14.5 0.5l-4 2l4 2zM0.5 15.5l4-2l-4-2zM14.5 15.5l-4-2l4-2z" fill="#686868"/></svg>
<div style="left:77px;top:194px;width:228px;height:18.3px;background:#2b2b2b;border-radius:3px;"></div>
<div class="t" style="left:80.5px;top:195.5px;font-size:12px;line-height:17px;color:#8a8a8a;letter-spacing:-0.669px;">Search...</div>
<svg style="left:291px;top:200px;" width="10" height="6" viewBox="0 0 10 6"><path d="M0.5 0.5h9L5 5.5z" fill="#c8c8c8"/></svg>
<div style="left:50px;top:214.2px;width:256px;height:676.5px;background:#373737;"></div>
<div style="left:296px;top:214.2px;width:10px;height:665.8px;background:#373737;"></div>
<svg style="left:296px;top:216px;" width="10" height="7" viewBox="0 0 10 7"><path d="M0.3 6L5 1.3L9.7 6z" fill="#c0c0c0"/></svg>
<div style="left:296px;top:227px;width:10px;height:639px;background:#5d5d5d;border-radius:4px;"></div>
<svg style="left:296px;top:869px;" width="10" height="7" viewBox="0 0 10 7"><path d="M0.3 1L5 5.7L9.7 1z" fill="#c0c0c0"/></svg>
<div style="left:50px;top:880px;width:256px;height:12px;background:#3a3a3a;"></div>
<svg style="left:52px;top:881px;" width="7" height="10" viewBox="0 0 7 10"><path d="M6 0.5L1.3 5L6 9.5z" fill="#c0c0c0"/></svg>
<div style="left:62.5px;top:881px;width:219px;height:10px;background:#5d5d5d;border-radius:5px;"></div>
<svg style="left:284px;top:881px;" width="7" height="10" viewBox="0 0 7 10"><path d="M1 0.5L5.7 5L1 9.5z" fill="#c0c0c0"/></svg>
<div style="left:135px;top:893px;width:86px;height:1px;background-image:linear-gradient(90deg,#777 1px,transparent 1px);background-size:3px 1px;"></div>
<svg style="left:85.8px;top:219.10000000000002px;" width="15" height="9.5" viewBox="0 0 15 9.5"><rect x="0" y="1.2" width="9" height="7" fill="#c9c9c9"/><path d="M9.7 4.7L14.5 0.3V9.1z" fill="#c9c9c9"/></svg>
<svg style="left:85.8px;top:239.10000000000002px;" width="15" height="9.5" viewBox="0 0 15 9.5"><rect x="0" y="1.2" width="9" height="7" fill="#c9c9c9"/><path d="M9.7 4.7L14.5 0.3V9.1z" fill="#c9c9c9"/></svg>
<svg style="left:85.8px;top:259.1px;" width="15" height="9.5" viewBox="0 0 15 9.5"><rect x="0" y="1.2" width="9" height="7" fill="#c9c9c9"/><path d="M9.7 4.7L14.5 0.3V9.1z" fill="#c9c9c9"/></svg>
<svg style="left:85.8px;top:279.1px;" width="15" height="9.5" viewBox="0 0 15 9.5"><rect x="0" y="1.2" width="9" height="7" fill="#c9c9c9"/><path d="M9.7 4.7L14.5 0.3V9.1z" fill="#c9c9c9"/></svg>
<div class="t" style="left:104.7px;top:215.8px;font-size:12px;line-height:17px;color:#7e7e7e;letter-spacing:-0.464px;">persp</div>
<div class="t" style="left:104.3px;top:235.8px;font-size:12px;line-height:17px;color:#7e7e7e;letter-spacing:0.206px;">top</div>
<div class="t" style="left:104.3px;top:255.8px;font-size:12px;line-height:17px;color:#7e7e7e;letter-spacing:0.398px;">front</div>
<div class="t" style="left:104.7px;top:275.8px;font-size:12px;line-height:17px;color:#7e7e7e;letter-spacing:-0.504px;">side</div>
<svg style="left:85px;top:297.5px;" width="16" height="13" viewBox="0 0 16 13"><path d="M8 0.3l3.7 3l-3.7 3l-3.7-3zM3.9 3.5l3.7 3l-3.7 3l-3.7-3zM12.1 3.5l3.7 3l-3.7 3l-3.7-3zM8 6.7l3.7 3l-3.7 3l-3.7-3z" fill="#c9c9c9"/></svg>
<div class="t" style="left:104.5px;top:295.8px;font-size:12px;line-height:17px;color:#e0e0e0;letter-spacing:-0.568px;">pSphere1</div>
<svg style="left:85px;top:316px;" width="16" height="16" viewBox="0 0 16 16"><circle cx="8" cy="8" r="7.3" fill="none" stroke="#c9c9c9" stroke-width="1.1"/><path d="M6.5 4h5.2v8.2h-5.2z" fill="#3bb3c4"/><circle cx="6.3" cy="9.8" r="2.9" fill="#c9c9c9"/></svg>
<div class="t" style="left:104.7px;top:315.8px;font-size:12px;line-height:17px;color:#e0e0e0;letter-spacing:-0.118px;">defaultLightSet</div>
<svg style="left:85px;top:336px;" width="16" height="16" viewBox="0 0 16 16"><circle cx="8" cy="8" r="7.3" fill="none" stroke="#c9c9c9" stroke-width="1.1"/><path d="M6.5 4h5.2v8.2h-5.2z" fill="#3bb3c4"/><circle cx="6.3" cy="9.8" r="2.9" fill="#c9c9c9"/></svg>
<div class="t" style="left:104.7px;top:335.8px;font-size:12px;line-height:17px;color:#e0e0e0;letter-spacing:-0.152px;">defaultObjectSet</div>
<div style="left:310.2px;top:149px;width:1.8px;height:752px;background:#3a3a3a;"></div>
<div style="left:313px;top:149px;width:818px;height:752px;background:#444444;"></div>
<div class="t" style="left:323.9px;top:153.9px;font-size:12px;line-height:17px;color:#dcdcdc;letter-spacing:-0.124px;">View</div>
<div class="t" style="left:364.4px;top:153.9px;font-size:12px;line-height:17px;color:#dcdcdc;letter-spacing:-0.234px;">Shading</div>
<div class="t" style="left:422px;top:153.9px;font-size:12px;line-height:17px;color:#dcdcdc;letter-spacing:0.120px;">Lighting</div>
<div class="t" style="left:480.2px;top:153.9px;font-size:12px;line-height:17px;color:#dcdcdc;letter-spacing:-0.330px;">Show</div>
<div class="t" style="left:524.3px;top:153.9px;font-size:12px;line-height:17px;color:#dcdcdc;letter-spacing:-0.429px;">Renderer</div>
<div class="t" style="left:586.4px;top:153.9px;font-size:12px;line-height:17px;color:#dcdcdc;letter-spacing:-0.749px;">Panels</div>
<div style="left:318px;top:193px;width:807px;height:702px;background:#5d5d5d;"></div>
<div class="t" style="left:699.5px;top:874.5px;font-size:12px;line-height:17px;color:#f0f0f0;letter-spacing:-0.736px;font-weight:700;">persp</div>
<div style="left:965.2px;top:173px;width:37.7px;height:14px;background:#2b2b2b;border-radius:2px;"></div>
<div class="t" style="left:970px;top:171.8px;font-size:12px;line-height:17px;color:#dcdcdc;letter-spacing:-0.464px;">0.00</div>
<div style="left:1026.2px;top:173px;width:37.6px;height:14px;background:#2b2b2b;border-radius:2px;"></div>
<div class="t" style="left:1031.5px;top:171.8px;font-size:12px;line-height:17px;color:#dcdcdc;letter-spacing:-0.464px;">1.00</div>
<div style="left:1088.4px;top:172.5px;width:39px;height:18px;background:#5a5a5a;border-radius:2px;"></div>
<div style="left:1088.4px;top:172.5px;width:39px;height:18px;overflow:hidden;"><div class="t" style="left:3px;top:0.5px;font-size:12px;letter-spacing:-0.4px;line-height:17px;color:#dcdcdc;">sRGB gamma</div></div>
<svg style="left:318px;top:193px;" width="807" height="701" viewBox="318 193 807 701"><defs><clipPath id="sc"><circle cx="721.2" cy="543.0" r="178.3"/></clipPath><radialGradient id="sg" cx="721.2" cy="513.0" r="208.7" gradientUnits="userSpaceOnUse"><stop offset="0" stop-color="#000" stop-opacity="0"/><stop offset="0.5" stop-color="#000" stop-opacity="0.02"/><stop offset="0.7" stop-color="#000" stop-opacity="0.09"/><stop offset="0.82" stop-color="#000" stop-opacity="0.2"/><stop offset="0.9" stop-color="#000" stop-opacity="0.32"/><stop offset="1" stop-color="#000" stop-opacity="0.46"/></radialGradient></defs><path d="M424.2 543.0L721.2 752.1M424.2 543.0L721.2 438.7M440.5 537.3L739.4 739.3M432.5 548.9L730.6 442.0M456.3 531.7L756.9 727.0M441.1 554.9L740.1 445.4M471.8 526.3L773.7 715.2M450.0 561.2L749.9 448.8M486.8 521.0L789.8 703.8M459.1 567.6L759.9 452.3M501.4 515.9L805.4 692.9M468.5 574.2L770.1 455.9M515.6 510.9L820.3 682.3M478.1 581.0L780.6 459.6M529.5 506.0L834.7 672.2M488.1 588.0L791.2 463.3M543.1 501.3L848.6 662.4M498.3 595.2L802.1 467.1M556.3 496.6L862.0 653.0M508.9 602.7L813.3 471.1M569.1 492.1L875.0 643.9M519.9 610.4L824.7 475.1M581.7 487.7L887.4 635.1M531.2 618.3L836.4 479.2M606.0 479.2L911.2 618.3M555.0 635.1L860.7 487.7M617.7 475.1L922.5 610.4M567.4 643.9L873.3 492.1M629.1 471.1L933.5 602.7M580.4 653.0L886.1 496.6M640.3 467.1L944.1 595.2M593.8 662.4L899.3 501.3M651.2 463.3L954.3 588.0M607.7 672.2L912.9 506.0M661.8 459.6L964.3 581.0M622.1 682.3L926.8 510.9M672.3 455.9L973.9 574.2M637.0 692.9L941.0 515.9M682.5 452.3L983.3 567.6M652.6 703.8L955.6 521.0M692.5 448.8L992.4 561.2M668.7 715.2L970.6 526.3M702.3 445.4L1001.3 554.9M685.5 727.0L986.1 531.7M711.8 442.0L1009.9 548.9M703.0 739.3L1001.9 537.3M721.2 438.7L1018.2 543.0M721.2 752.1L1018.2 543.0" stroke="#454545" stroke-width="0.9" fill="none" opacity="0.85"/><path d="M594.0 483.4L899.5 626.6M542.9 626.6L848.4 483.4" stroke="#4b4b4b" stroke-width="1.9" fill="none"/><g clip-path="url(#sc)"><circle cx="721.2" cy="543.0" r="179.3" fill="#0a0a0a"/><path d="M722.4 370.5L722.4 370.5L722.4 370.5L722.4 370.5L722.4 370.5L722.4 370.5L722.5 370.4L722.5 370.4L722.5 370.4L722.5 370.4L722.5 370.4L722.5 370.4L722.5 370.4L722.5 370.4L722.5 370.4L722.5 370.3L722.5 370.3L722.5 370.3L722.5 370.3L722.5 370.3L722.5 370.3L722.5 370.3L722.5 370.3L722.5 370.3L722.5 370.3L722.5 370.2L722.4 370.2L725.2 370.0L727.9 369.9L730.6 369.8L733.3 369.7L736.0 369.7L738.6 369.7L741.3 369.8L744.0 369.9L746.6 370.0L749.3 370.2L751.9 370.4L754.5 370.6L757.1 370.9L759.7 371.3L762.2 371.6L764.8 372.1L767.3 372.5L769.8 373.0L772.3 373.5L774.8 374.1L777.2 374.7L779.7 375.4L782.1 376.0L784.5 376.7L786.9 377.5L789.2 378.3L790.0 378.9L790.7 379.4L791.3 380.0L791.9 380.6L792.4 381.2L792.8 381.8L793.2 382.4L793.6 383.0L793.9 383.6L794.1 384.2L794.3 384.8L794.4 385.5L794.4 386.1L794.4 386.7L794.3 387.3L794.1 388.0L793.9 388.6L793.7 389.2L793.3 389.8L792.9 390.4L792.4 391.1L791.9 391.7L791.3 392.3L790.6 392.9L789.9 393.5L789.1 394.1L786.6 392.7L784.1 391.3L781.6 390.0L779.1 388.7L776.5 387.4L774.0 386.2L771.4 385.0L768.9 383.9L766.3 382.8L763.7 381.7L761.2 380.7L758.6 379.7L756.0 378.8L753.4 377.9L750.8 377.1L748.2 376.3L745.6 375.5L743.0 374.8L740.4 374.1L737.8 373.4L735.2 372.9L732.7 372.3L730.1 371.8L727.5 371.3L724.9 370.9z" fill="#e4e4e4"/><path d="M722.4 370.2L722.4 370.2L722.4 370.2L722.4 370.2L722.4 370.2L722.4 370.2L722.3 370.2L722.3 370.2L722.3 370.2L722.3 370.1L722.3 370.1L722.2 370.1L722.2 370.1L722.2 370.1L722.2 370.1L722.1 370.1L722.1 370.1L722.1 370.1L722.1 370.1L722.0 370.1L722.0 370.1L722.0 370.1L721.9 370.0L721.9 370.0L721.9 370.0L721.8 370.0L721.8 370.0L723.1 369.4L724.4 368.8L725.7 368.2L727.0 367.7L728.3 367.2L729.6 366.8L730.9 366.4L732.1 366.1L733.4 365.8L734.6 365.5L735.9 365.3L737.1 365.1L738.3 365.0L739.5 364.9L740.7 364.9L741.8 364.9L743.0 364.9L744.1 365.0L745.3 365.1L746.1 367.6L747.2 367.7L748.3 367.8L749.4 367.9L750.5 368.0L751.6 368.0L752.7 368.0L754.4 368.4L756.2 368.8L757.8 369.2L759.5 369.7L761.1 370.1L762.7 370.5L764.3 371.0L765.9 371.4L767.4 371.9L768.9 372.3L770.3 372.8L771.8 373.2L773.2 373.6L775.3 371.8L776.6 372.2L777.9 372.7L779.2 373.2L780.4 373.6L781.6 374.1L782.7 374.6L783.8 375.1L784.8 375.6L785.8 376.2L786.8 376.7L787.7 377.2L788.5 377.8L786.2 377.0L783.8 376.3L781.5 375.6L779.1 374.9L776.7 374.3L774.2 373.7L771.8 373.2L769.3 372.7L766.8 372.2L764.3 371.7L761.8 371.3L759.3 371.0L756.7 370.7L754.2 370.4L751.6 370.2L749.0 370.0L746.4 369.8L743.8 369.7L741.1 369.6L738.5 369.6L735.8 369.6L733.2 369.6L730.5 369.7L727.8 369.8L725.1 370.0z" fill="#dc0000"/><path d="M721.8 370.0L721.7 370.0L721.7 370.0L721.7 370.0L721.6 370.0L721.6 370.0L721.6 370.0L721.5 370.0L721.5 370.0L721.5 370.0L721.4 370.0L721.4 370.0L721.3 370.0L721.3 370.0L721.3 370.0L721.2 370.0L721.2 370.0L721.2 370.0L721.1 370.0L721.1 370.0L721.0 370.0L721.0 370.0L721.0 370.0L720.9 370.0L720.9 370.0L720.9 370.0L720.8 370.0L720.0 369.3L719.1 368.6L718.3 368.0L717.5 367.5L716.7 366.9L715.9 366.5L715.1 366.0L714.3 365.6L713.5 365.3L712.7 365.0L711.9 364.7L711.1 364.5L710.4 364.3L709.6 364.2L708.9 364.1L708.1 364.0L707.4 364.0L706.7 364.1L706.2 366.5L705.4 366.5L704.7 366.5L704.0 366.4L703.3 366.4L702.6 366.2L701.9 366.1L701.2 365.9L703.1 365.7L705.0 365.4L706.9 365.2L708.8 365.0L710.8 364.9L712.7 364.7L714.7 364.6L716.7 364.5L718.6 364.5L720.6 364.5L722.6 364.5L724.5 364.5L726.5 364.6L728.5 364.7L730.4 364.8L732.4 364.9L734.3 365.1L736.2 365.3L738.2 365.5L740.1 365.7L741.9 366.0L743.8 366.3L745.7 366.6L747.5 366.9L749.3 367.3L751.1 367.7L750.0 367.7L749.0 367.7L747.9 367.7L746.9 367.6L745.8 367.5L744.8 367.4L744.0 364.9L743.0 364.8L741.9 364.8L740.8 364.7L739.7 364.7L738.5 364.8L737.4 364.9L736.3 365.0L735.1 365.2L733.9 365.4L732.8 365.7L731.6 366.0L730.4 366.3L729.2 366.7L728.0 367.2L726.7 367.7L725.5 368.2L724.3 368.8L723.0 369.4z" fill="#dcdc00"/><path d="M720.8 370.0L720.7 370.0L720.7 370.0L720.7 370.0L720.6 370.0L720.6 370.0L720.6 370.0L720.5 370.0L720.5 370.0L720.5 370.0L720.4 370.1L720.4 370.1L720.4 370.1L720.4 370.1L720.3 370.1L720.3 370.1L720.3 370.1L720.2 370.1L720.2 370.1L720.2 370.1L720.2 370.1L720.1 370.1L720.1 370.1L720.1 370.1L720.1 370.2L720.1 370.2L720.0 370.2L717.5 369.9L715.0 369.6L712.5 369.3L710.0 369.1L707.6 369.0L705.1 368.9L702.6 368.8L700.2 368.8L697.8 368.8L695.4 368.8L693.0 368.9L690.6 369.0L688.2 369.2L685.8 369.4L683.5 369.7L681.2 369.9L678.9 370.3L676.6 370.6L674.3 371.0L672.1 371.5L669.9 372.0L667.6 372.5L665.5 373.0L663.3 373.6L661.1 374.3L659.0 374.9L660.1 374.4L661.3 373.9L662.5 373.4L663.7 373.0L665.0 372.5L666.3 372.1L668.4 373.9L669.8 373.5L671.2 373.0L672.6 372.6L674.1 372.2L675.6 371.7L677.1 371.3L678.7 370.8L680.3 370.4L681.9 369.9L683.5 369.5L685.2 369.1L686.9 368.7L688.6 368.2L690.4 367.9L692.2 367.5L694.0 367.1L695.8 366.8L697.6 366.5L699.5 366.2L700.2 366.3L701.0 366.5L701.8 366.5L702.6 366.6L703.3 366.6L704.1 366.6L704.9 366.6L705.4 364.2L706.2 364.1L707.0 364.1L707.8 364.2L708.6 364.3L709.4 364.4L710.3 364.6L711.1 364.8L711.9 365.0L712.8 365.3L713.7 365.7L714.5 366.1L715.4 366.5L716.3 367.0L717.2 367.5L718.1 368.1L719.0 368.7L719.9 369.3z" fill="#00b80c"/><path d="M720.0 370.2L720.0 370.2L720.0 370.2L720.0 370.2L720.0 370.2L720.0 370.2L719.9 370.2L719.9 370.3L719.9 370.3L719.9 370.3L719.9 370.3L719.9 370.3L719.9 370.3L719.9 370.3L719.9 370.3L719.9 370.3L719.9 370.3L719.9 370.4L719.9 370.4L719.9 370.4L719.9 370.4L719.9 370.4L719.9 370.4L719.9 370.4L719.9 370.4L719.9 370.4L720.0 370.4L717.2 370.7L714.5 371.0L711.8 371.4L709.0 371.8L706.3 372.2L703.5 372.7L700.8 373.2L698.1 373.8L695.3 374.4L692.6 375.0L689.9 375.7L687.1 376.4L684.4 377.2L681.7 378.0L679.0 378.9L676.3 379.8L673.6 380.7L670.9 381.7L668.2 382.7L665.5 383.7L662.9 384.8L660.2 385.9L657.6 387.1L655.0 388.3L652.4 389.5L649.8 390.8L649.3 390.2L648.9 389.6L648.6 389.0L648.4 388.3L648.2 387.7L648.1 387.1L648.0 386.5L648.0 385.8L648.1 385.2L648.2 384.6L648.4 384.0L648.6 383.4L648.9 382.8L649.3 382.2L649.7 381.6L650.2 381.0L650.8 380.4L651.3 379.8L652.0 379.2L652.7 378.6L653.5 378.1L654.3 377.5L655.2 377.0L656.1 376.4L657.0 375.9L658.1 375.4L660.2 374.7L662.4 374.1L664.6 373.5L666.8 372.9L669.1 372.3L671.3 371.8L673.6 371.4L675.9 371.0L678.2 370.6L680.6 370.2L682.9 369.9L685.3 369.7L687.7 369.4L690.1 369.3L692.5 369.1L695.0 369.0L697.4 368.9L699.9 368.9L702.4 368.9L704.9 369.0L707.4 369.1L709.9 369.2L712.4 369.4L714.9 369.6L717.5 369.9z" fill="#12b4c0"/><path d="M720.0 370.5L720.0 370.5L720.0 370.5L720.0 370.5L720.0 370.5L720.0 370.5L720.1 370.5L720.1 370.5L720.1 370.5L720.1 370.5L720.1 370.6L720.2 370.6L720.2 370.6L720.2 370.6L720.2 370.6L720.3 370.6L720.3 370.6L720.3 370.6L720.3 370.6L720.4 370.6L720.4 370.6L720.4 370.6L720.5 370.6L720.5 370.6L720.5 370.6L720.6 370.7L720.6 370.7L719.3 371.4L717.9 372.2L716.6 373.0L715.2 373.9L713.8 374.8L712.5 375.7L711.1 376.8L709.7 377.8L708.3 378.9L707.0 380.1L705.6 381.2L704.2 382.5L702.8 383.8L701.4 385.1L700.0 386.5L698.6 387.9L697.2 389.4L695.8 390.9L694.4 392.4L693.0 394.0L691.5 395.7L690.1 397.4L688.7 399.1L687.3 400.9L685.9 402.7L684.5 404.6L682.6 404.2L680.7 403.9L678.8 403.5L676.9 403.1L675.1 402.7L673.4 402.3L671.7 401.8L670.0 401.4L668.4 400.9L666.9 400.4L665.4 399.9L664.0 399.4L662.6 398.9L661.3 398.4L660.0 397.8L658.8 397.3L657.7 396.7L656.6 396.2L655.6 395.6L654.6 395.0L653.7 394.4L652.9 393.8L652.1 393.2L651.4 392.6L650.8 392.0L650.2 391.4L652.8 390.1L655.4 388.8L658.0 387.6L660.6 386.4L663.3 385.3L665.9 384.1L668.6 383.1L671.2 382.0L673.9 381.1L676.6 380.1L679.3 379.2L682.0 378.3L684.7 377.5L687.4 376.7L690.1 376.0L692.8 375.2L695.5 374.6L698.2 374.0L701.0 373.4L703.7 372.8L706.4 372.3L709.1 371.9L711.8 371.5L714.5 371.1L717.3 370.7z" fill="#0000c8"/><path d="M720.6 370.7L720.7 370.7L720.7 370.7L720.7 370.7L720.8 370.7L720.8 370.7L720.8 370.7L720.9 370.7L720.9 370.7L720.9 370.7L721.0 370.7L721.0 370.7L721.1 370.7L721.1 370.7L721.1 370.7L721.2 370.7L721.2 370.7L721.2 370.7L721.3 370.7L721.3 370.7L721.4 370.7L721.4 370.7L721.4 370.7L721.5 370.7L721.5 370.7L721.6 370.7L721.6 370.7L722.4 371.5L723.3 372.3L724.2 373.2L725.0 374.1L725.9 375.1L726.8 376.1L727.6 377.2L728.5 378.3L729.4 379.5L730.3 380.7L731.2 381.9L732.1 383.2L733.0 384.6L733.8 386.0L734.7 387.4L735.6 388.9L736.5 390.4L737.4 392.0L738.3 393.7L739.3 395.3L740.2 397.0L741.1 398.8L742.0 400.6L742.9 402.5L743.8 404.4L744.7 406.3L742.5 406.5L740.2 406.7L738.0 406.9L735.7 407.0L733.5 407.2L731.2 407.3L728.9 407.3L726.5 407.4L724.2 407.4L721.9 407.5L719.6 407.4L717.3 407.4L715.0 407.4L712.7 407.3L710.4 407.2L708.1 407.1L705.8 407.0L703.5 406.8L701.3 406.7L699.1 406.5L696.9 406.2L694.7 406.0L692.6 405.8L690.5 405.5L688.4 405.2L686.4 404.9L687.7 403.0L689.0 401.2L690.4 399.4L691.7 397.6L693.0 395.9L694.4 394.3L695.7 392.6L697.0 391.1L698.4 389.5L699.7 388.1L701.0 386.6L702.4 385.3L703.7 383.9L705.0 382.6L706.4 381.4L707.7 380.2L709.0 379.0L710.3 377.9L711.6 376.8L712.9 375.8L714.2 374.8L715.5 373.9L716.8 373.0L718.1 372.2L719.4 371.4z" fill="#d800d8"/><path d="M721.6 370.7L721.7 370.7L721.7 370.7L721.7 370.7L721.8 370.7L721.8 370.7L721.8 370.7L721.9 370.7L721.9 370.6L721.9 370.6L722.0 370.6L722.0 370.6L722.0 370.6L722.0 370.6L722.1 370.6L722.1 370.6L722.1 370.6L722.2 370.6L722.2 370.6L722.2 370.6L722.2 370.6L722.3 370.6L722.3 370.5L722.3 370.5L722.3 370.5L722.3 370.5L722.4 370.5L724.9 370.9L727.4 371.4L730.0 371.8L732.5 372.4L735.1 373.0L737.6 373.6L740.2 374.2L742.7 374.9L745.3 375.7L747.9 376.5L750.4 377.3L753.0 378.2L755.5 379.1L758.1 380.0L760.7 381.0L763.2 382.1L765.8 383.1L768.3 384.2L770.8 385.4L773.4 386.6L775.9 387.9L778.4 389.1L780.9 390.5L783.4 391.8L785.9 393.2L788.3 394.7L787.4 395.2L786.4 395.8L785.4 396.4L784.3 397.0L783.1 397.5L781.9 398.1L780.6 398.6L779.3 399.1L777.9 399.6L776.4 400.1L774.9 400.6L773.4 401.1L771.7 401.6L770.1 402.0L768.4 402.4L766.6 402.9L764.8 403.3L762.9 403.7L761.0 404.0L759.1 404.4L757.1 404.7L755.1 405.0L753.0 405.3L750.9 405.6L748.8 405.9L746.7 406.1L745.7 404.2L744.7 402.3L743.7 400.4L742.7 398.6L741.8 396.9L740.8 395.2L739.8 393.5L738.8 391.9L737.9 390.3L736.9 388.8L735.9 387.3L734.9 385.9L734.0 384.5L733.0 383.1L732.0 381.8L731.1 380.6L730.1 379.4L729.1 378.2L728.2 377.1L727.2 376.1L726.3 375.1L725.3 374.1L724.4 373.2L723.5 372.3L722.5 371.5z" fill="#6c6c6c"/><path d="M791.4 395.4L792.2 394.8L792.9 394.2L793.6 393.6L794.2 392.9L794.8 392.3L795.3 391.6L795.7 391.0L796.0 390.3L796.3 389.7L796.5 389.0L796.7 388.4L796.8 387.8L796.8 387.1L796.7 386.5L796.6 385.8L796.4 385.2L796.2 384.5L795.9 383.9L795.5 383.3L795.1 382.7L794.6 382.0L794.1 381.4L793.5 380.8L792.8 380.2L792.1 379.6L791.4 379.0L793.7 379.9L796.0 380.8L798.2 381.7L800.5 382.7L802.7 383.7L804.9 384.7L807.0 385.7L809.2 386.8L811.3 388.0L813.3 389.1L815.4 390.3L817.4 391.5L819.4 392.8L821.4 394.0L823.3 395.3L823.8 398.6L825.7 400.0L827.6 401.3L829.4 402.7L831.2 404.0L833.0 405.4L834.8 406.8L836.5 408.2L838.3 409.6L840.0 411.1L841.7 412.5L843.0 413.9L844.2 415.3L845.4 416.6L846.6 417.9L849.5 417.4L850.5 418.6L851.5 419.9L852.4 421.1L853.2 422.4L853.8 423.7L854.4 425.0L854.8 426.3L855.2 427.6L855.4 429.0L855.5 430.3L855.5 431.6L855.4 433.0L855.1 434.3L854.8 435.7L854.3 437.0L853.7 438.4L852.9 439.8L852.1 441.1L851.1 442.5L850.0 443.8L848.8 445.1L846.9 442.9L845.0 440.6L843.0 438.4L841.1 436.2L839.1 434.0L837.0 431.9L835.0 429.7L832.9 427.6L830.8 425.6L828.6 423.5L826.5 421.5L824.3 419.6L822.1 417.6L819.8 415.7L817.6 413.8L815.3 412.0L813.0 410.2L810.6 408.4L808.3 406.6L805.9 404.9L803.6 403.3L801.1 401.6L798.7 400.0L796.3 398.5L793.8 396.9z" fill="#dc0000"/><path d="M790.6 378.5L789.7 377.9L788.8 377.4L787.8 376.8L786.8 376.3L785.7 375.8L784.6 375.2L783.4 374.7L782.2 374.2L780.9 373.7L779.6 373.2L778.3 372.8L776.2 374.6L774.8 374.1L773.3 373.6L771.9 373.2L770.4 372.7L768.8 372.2L767.3 371.7L765.7 371.2L764.1 370.7L762.4 370.2L760.7 369.8L759.0 369.3L757.3 368.9L755.5 368.4L753.7 368.0L754.8 367.9L755.9 367.9L757.1 367.8L758.2 367.7L759.3 367.5L760.5 367.4L761.6 367.2L762.8 367.0L764.0 366.7L765.2 366.5L766.4 366.2L767.6 365.9L768.8 365.5L770.0 365.2L771.3 364.8L772.6 364.4L773.9 364.0L775.2 363.6L776.5 363.1L777.9 362.6L779.3 362.1L780.7 361.6L782.1 361.0L783.6 360.4L785.0 359.8L786.6 359.2L789.8 361.2L792.9 363.2L795.9 365.2L798.7 367.3L801.5 369.5L804.2 371.6L806.8 373.8L809.3 375.9L811.6 378.1L813.9 380.3L816.1 382.5L818.2 384.6L820.2 386.8L822.2 388.9L824.0 391.0L825.8 393.0L827.5 395.0L829.2 397.0L830.8 399.0L832.3 400.9L833.8 402.7L835.2 404.5L836.6 406.2L838.0 407.9L839.3 409.5L840.6 411.1L838.9 409.7L837.1 408.4L835.4 407.0L833.6 405.6L831.8 404.3L830.0 403.0L828.2 401.7L826.4 400.4L824.5 399.1L822.7 397.8L820.8 396.5L820.2 393.2L818.3 392.0L816.3 390.8L814.3 389.6L812.3 388.4L810.2 387.3L808.2 386.2L806.1 385.1L803.9 384.0L801.8 383.0L799.6 382.1L797.4 381.1L795.1 380.2L792.9 379.3z" fill="#dcdc00"/><path d="M698.8 366.0L696.8 366.3L694.9 366.7L693.1 367.0L691.2 367.4L689.4 367.8L687.6 368.3L685.8 368.7L684.1 369.1L682.3 369.6L680.6 370.1L679.0 370.5L677.3 371.0L675.7 371.5L674.2 372.0L672.6 372.5L671.1 373.0L669.6 373.5L668.2 373.9L666.8 374.4L665.4 374.9L663.3 373.1L661.9 373.5L660.7 374.0L659.4 374.5L658.2 375.0L657.1 375.6L655.0 376.3L653.0 377.0L650.9 377.8L648.9 378.7L646.9 379.5L646.0 382.6L644.1 383.5L642.2 384.4L640.3 385.3L638.4 386.3L636.5 387.2L634.6 388.1L632.8 389.1L630.9 390.0L629.1 391.0L627.3 391.9L625.4 392.9L623.6 393.9L621.8 394.9L620.0 395.9L618.2 396.9L616.4 397.9L614.5 398.9L612.7 399.9L611.0 401.0L609.2 402.0L610.7 400.1L612.2 398.2L613.8 396.3L615.5 394.3L617.3 392.2L619.1 390.2L621.0 388.1L622.9 385.9L625.0 383.8L627.1 381.6L629.3 379.5L631.7 377.3L634.1 375.1L636.6 372.9L639.2 370.8L641.9 368.6L644.8 366.5L647.7 364.4L650.7 362.4L653.9 360.4L657.1 358.5L660.4 356.6L663.9 354.8L667.4 353.1L671.1 351.5L674.8 350.0L676.0 351.0L677.1 352.0L678.2 352.9L679.2 353.9L680.3 354.8L681.3 355.6L682.3 356.5L683.3 357.2L684.3 358.0L685.2 358.7L686.2 359.4L687.1 360.1L688.0 360.7L688.9 361.3L689.8 361.9L690.6 362.4L691.5 362.9L692.3 363.4L693.1 363.8L694.0 364.2L694.8 364.6L695.6 364.9L696.4 365.2L697.2 365.5L698.0 365.8z" fill="#12b4c0"/><path d="M656.1 376.0L655.0 376.6L654.0 377.1L653.1 377.7L652.2 378.2L651.3 378.8L650.6 379.4L649.8 380.0L649.1 380.6L648.5 381.2L648.0 381.8L647.5 382.4L647.0 383.0L646.6 383.7L646.3 384.3L646.0 384.9L645.8 385.6L645.7 386.2L645.6 386.9L645.6 387.5L645.7 388.2L645.8 388.8L646.0 389.4L646.3 390.1L646.6 390.7L647.0 391.4L647.4 392.0L644.9 393.4L642.3 394.8L639.8 396.2L637.3 397.7L634.8 399.2L632.4 400.7L629.9 402.3L627.5 403.9L625.1 405.5L622.7 407.2L620.4 408.9L618.0 410.6L615.7 412.3L613.5 414.1L611.2 416.0L609.0 417.8L606.8 419.7L604.7 421.6L602.5 423.6L600.4 425.5L598.4 427.5L596.3 429.5L594.3 431.6L592.3 433.7L590.4 435.8L588.5 437.9L587.9 436.5L587.5 435.2L587.2 433.8L587.0 432.5L586.9 431.1L586.9 429.8L587.1 428.4L587.3 427.1L587.7 425.8L588.2 424.5L588.8 423.2L589.5 421.9L590.3 420.7L591.3 419.4L592.3 418.2L593.4 416.9L596.3 417.4L597.5 416.1L598.7 414.8L599.9 413.4L601.1 411.9L602.4 410.4L603.7 408.8L605.0 407.1L606.4 405.4L607.8 403.7L609.6 402.6L611.4 401.5L613.2 400.4L615.0 399.3L616.8 398.2L618.6 397.2L620.4 396.1L622.2 395.1L624.1 394.0L625.9 393.0L627.7 392.0L629.6 391.0L631.5 390.0L633.3 389.0L635.2 388.0L637.1 387.0L639.0 386.1L640.9 385.1L642.8 384.1L643.7 381.0L645.7 380.1L647.8 379.2L649.8 378.4L651.9 377.6L654.0 376.8z" fill="#0000c8"/><path d="M647.9 392.6L648.5 393.3L649.1 393.9L649.8 394.5L650.6 395.1L651.5 395.8L652.4 396.4L653.4 397.0L654.4 397.6L655.5 398.2L656.7 398.8L657.9 399.3L659.2 399.9L660.6 400.4L662.0 401.0L663.5 401.5L665.0 402.0L666.6 402.5L668.3 403.0L670.0 403.5L671.7 403.9L673.5 404.4L675.4 404.8L677.3 405.2L679.2 405.6L681.2 406.0L683.3 406.3L681.9 408.3L680.5 410.3L679.1 412.3L677.7 414.4L676.4 416.5L675.0 418.7L673.7 420.9L672.3 423.1L671.0 425.4L669.6 427.7L668.3 430.1L667.0 432.5L665.7 434.9L664.4 437.3L663.1 439.8L661.9 442.4L660.6 444.9L659.4 447.5L658.1 450.2L656.9 452.8L655.7 455.5L654.5 458.3L653.3 461.0L652.2 463.8L651.0 466.6L649.9 469.4L646.2 468.6L642.5 467.7L639.0 466.8L635.5 465.9L632.1 464.9L628.9 463.9L625.8 462.9L622.7 461.8L619.8 460.7L617.0 459.6L614.3 458.4L611.8 457.3L609.3 456.1L607.0 454.8L604.8 453.6L602.8 452.3L600.8 451.1L599.0 449.8L597.3 448.5L595.8 447.2L594.4 445.8L593.0 444.5L591.9 443.2L590.8 441.8L589.9 440.5L589.1 439.1L591.0 437.0L592.9 434.8L594.9 432.7L596.9 430.7L599.0 428.6L601.0 426.6L603.1 424.6L605.3 422.6L607.4 420.7L609.6 418.8L611.8 416.9L614.1 415.1L616.3 413.3L618.6 411.5L620.9 409.7L623.3 408.0L625.6 406.3L628.0 404.6L630.5 403.0L632.9 401.4L635.3 399.9L637.8 398.3L640.3 396.9L642.8 395.4L645.4 394.0z" fill="#d800d8"/><path d="M685.2 406.7L687.3 407.0L689.4 407.3L691.6 407.6L693.8 407.8L696.1 408.1L698.3 408.3L700.6 408.5L702.9 408.7L705.3 408.8L707.6 409.0L710.0 409.1L712.4 409.2L714.7 409.2L717.1 409.3L719.5 409.3L721.9 409.3L724.3 409.3L726.7 409.3L729.1 409.2L731.5 409.1L733.9 409.0L736.2 408.9L738.6 408.7L740.9 408.6L743.2 408.4L745.5 408.2L746.4 410.2L747.3 412.3L748.2 414.4L749.0 416.5L749.9 418.7L750.8 421.0L751.7 423.3L752.6 425.6L753.4 428.0L754.3 430.4L755.1 432.8L756.0 435.3L756.8 437.8L757.7 440.4L758.5 443.0L759.3 445.6L760.1 448.3L761.0 450.9L761.8 453.7L762.5 456.4L763.3 459.2L764.1 462.0L764.9 464.9L765.6 467.8L766.4 470.7L767.1 473.6L762.8 474.1L758.5 474.6L754.1 475.0L749.7 475.3L745.2 475.6L740.8 475.9L736.2 476.1L731.7 476.2L727.2 476.3L722.6 476.4L718.0 476.3L713.5 476.3L709.0 476.2L704.4 476.0L699.9 475.8L695.4 475.5L691.0 475.2L686.6 474.8L682.2 474.4L677.9 473.9L673.7 473.4L669.5 472.8L665.3 472.2L661.3 471.6L657.3 470.9L653.4 470.1L654.5 467.3L655.6 464.5L656.7 461.7L657.8 458.9L658.9 456.2L660.1 453.5L661.2 450.8L662.4 448.1L663.6 445.5L664.8 442.9L666.0 440.4L667.2 437.9L668.5 435.4L669.7 432.9L670.9 430.5L672.2 428.2L673.5 425.8L674.7 423.5L676.0 421.3L677.3 419.1L678.6 416.9L679.9 414.8L681.2 412.7L682.5 410.6L683.8 408.6z" fill="#6c6c6c"/><path d="M747.5 407.9L749.8 407.7L752.0 407.4L754.1 407.1L756.2 406.8L758.3 406.5L760.4 406.1L762.4 405.8L764.4 405.4L766.3 405.0L768.2 404.5L770.0 404.1L771.8 403.7L773.5 403.2L775.1 402.7L776.8 402.2L778.3 401.7L779.8 401.2L781.3 400.6L782.6 400.1L784.0 399.5L785.2 399.0L786.4 398.4L787.6 397.8L788.6 397.2L789.6 396.6L790.6 396.0L793.0 397.5L795.4 399.1L797.9 400.7L800.3 402.3L802.6 403.9L805.0 405.6L807.3 407.4L809.7 409.1L812.0 410.9L814.3 412.8L816.5 414.7L818.8 416.6L821.0 418.5L823.2 420.5L825.4 422.5L827.5 424.5L829.6 426.6L831.7 428.6L833.8 430.8L835.9 432.9L837.9 435.1L839.9 437.3L841.8 439.5L843.8 441.8L845.6 444.0L847.5 446.4L846.0 447.7L844.4 449.0L842.7 450.3L840.8 451.6L838.8 452.8L836.7 454.1L834.5 455.3L832.1 456.5L829.6 457.7L827.0 458.9L824.3 460.0L821.5 461.1L818.5 462.2L815.4 463.3L812.3 464.3L809.0 465.3L805.6 466.3L802.1 467.2L798.5 468.1L794.8 468.9L791.0 469.7L787.2 470.5L783.2 471.2L779.2 471.9L775.1 472.5L771.0 473.1L770.2 470.2L769.4 467.3L768.5 464.4L767.7 461.6L766.9 458.8L766.0 456.0L765.2 453.3L764.3 450.5L763.4 447.9L762.5 445.2L761.7 442.6L760.8 440.0L759.8 437.5L758.9 435.0L758.0 432.5L757.1 430.1L756.1 427.7L755.2 425.3L754.3 423.0L753.3 420.7L752.4 418.5L751.4 416.3L750.4 414.1L749.5 412.0L748.5 410.0z" fill="#e4e4e4"/><path d="M850.4 447.2L851.7 445.9L852.8 444.5L853.8 443.1L854.7 441.7L855.4 440.4L856.0 439.0L856.5 437.6L856.8 436.2L857.1 434.8L857.2 433.5L857.2 432.1L857.1 430.7L856.8 429.4L856.5 428.0L856.0 426.7L855.5 425.4L854.8 424.1L854.0 422.8L853.1 421.5L852.1 420.2L851.0 419.0L848.1 419.4L846.9 418.1L845.7 416.7L844.5 415.3L843.3 413.8L845.0 415.3L846.7 416.7L848.3 418.2L850.0 419.7L851.6 421.2L853.3 422.7L854.9 424.3L856.5 425.8L858.1 427.3L859.7 428.9L861.3 430.5L862.8 432.1L864.4 433.7L865.9 435.3L867.5 436.9L869.0 438.6L870.5 440.2L872.0 441.9L873.5 443.6L875.0 445.3L876.5 447.0L878.0 448.8L879.4 450.5L880.9 452.3L882.3 454.1L883.8 455.9L884.0 458.7L884.2 461.5L884.5 464.1L884.8 466.7L885.1 469.2L885.4 471.6L885.8 473.9L886.2 476.1L886.6 478.3L887.2 480.4L887.7 482.5L888.4 484.5L891.3 485.7L891.8 487.7L892.1 489.7L892.3 491.7L892.4 493.8L892.3 495.9L892.0 498.0L891.6 500.0L891.0 502.1L890.3 504.2L889.4 506.3L888.3 508.4L887.1 510.5L885.7 512.6L884.9 510.0L884.0 507.3L883.0 504.7L882.0 502.1L881.0 499.5L879.9 496.9L878.8 494.3L877.7 491.7L876.5 489.1L875.2 486.5L874.0 484.0L872.7 481.4L871.3 478.9L869.9 476.3L868.5 473.8L867.1 471.3L865.6 468.8L864.0 466.4L862.4 463.9L860.8 461.5L859.2 459.0L857.5 456.6L855.8 454.3L854.0 451.9L852.3 449.6z" fill="#dcdc00"/><path d="M606.2 404.7L604.8 406.5L603.4 408.3L602.1 410.0L600.8 411.6L599.6 413.2L598.3 414.7L597.1 416.2L595.9 417.6L594.7 418.9L591.8 418.5L590.7 419.7L589.7 421.0L588.7 422.3L587.9 423.6L587.2 424.9L586.6 426.2L586.1 427.5L585.7 428.9L585.4 430.2L585.2 431.6L585.2 432.9L585.3 434.3L585.4 435.7L585.8 437.1L586.2 438.5L586.8 439.8L584.9 442.0L583.1 444.2L581.3 446.4L579.6 448.6L577.9 450.9L576.2 453.1L574.6 455.4L573.0 457.7L571.5 460.0L569.9 462.4L568.5 464.7L567.0 467.1L565.6 469.5L564.3 471.9L563.0 474.3L561.7 476.7L560.4 479.1L559.2 481.5L558.1 484.0L557.0 486.4L555.9 488.9L554.9 491.4L553.9 493.9L552.9 496.3L552.0 498.8L551.1 501.3L550.6 499.2L550.3 497.2L550.1 495.1L550.0 493.0L550.1 491.0L550.4 488.9L550.8 486.9L551.3 484.9L554.3 483.7L554.9 481.7L555.4 479.6L555.9 477.5L556.4 475.3L556.8 473.0L557.1 470.7L557.5 468.2L557.7 465.7L558.0 463.1L558.3 460.4L558.5 457.7L558.7 454.8L558.9 451.8L559.2 448.7L559.4 445.5L559.7 442.2L560.0 438.8L561.8 437.2L563.6 435.7L565.4 434.2L567.1 432.7L568.9 431.2L570.7 429.8L572.5 428.4L574.3 427.0L576.0 425.6L577.8 424.2L579.6 422.9L581.4 421.6L583.1 420.3L584.9 419.0L586.7 417.7L588.5 416.5L590.2 415.2L592.0 414.0L593.8 412.8L595.5 411.6L597.3 410.4L599.1 409.2L600.9 408.1L602.6 406.9L604.4 405.8z" fill="#d800d8"/><path d="M587.4 441.1L588.2 442.5L589.1 443.9L590.2 445.2L591.4 446.6L592.7 448.0L594.1 449.3L595.7 450.7L597.4 452.0L599.2 453.3L601.2 454.6L603.3 455.9L605.5 457.1L607.8 458.4L610.3 459.6L612.9 460.8L615.6 462.0L618.4 463.1L621.4 464.3L624.4 465.4L627.6 466.4L630.9 467.4L634.3 468.4L637.8 469.4L641.4 470.3L645.1 471.2L648.9 472.0L647.8 474.9L646.7 477.8L645.6 480.7L644.6 483.7L643.6 486.6L642.6 489.6L641.6 492.6L640.6 495.6L639.7 498.7L638.8 501.7L637.9 504.8L637.0 507.8L636.1 510.9L635.3 514.0L634.5 517.1L633.7 520.2L632.9 523.3L632.2 526.4L631.5 529.6L630.8 532.7L630.1 535.8L629.5 538.9L628.9 542.1L628.3 545.2L627.7 548.3L627.2 551.4L622.3 550.1L617.6 548.7L613.0 547.2L608.5 545.7L604.2 544.1L600.1 542.5L596.1 540.8L592.2 539.1L588.6 537.3L585.0 535.5L581.7 533.7L578.5 531.8L575.5 529.9L572.6 527.9L570.0 525.9L567.5 524.0L565.1 521.9L563.0 519.9L561.0 517.8L559.1 515.8L557.5 513.7L556.0 511.6L554.7 509.5L553.5 507.4L552.6 505.3L551.7 503.2L552.6 500.7L553.5 498.2L554.5 495.7L555.5 493.2L556.5 490.7L557.6 488.2L558.7 485.7L559.9 483.3L561.1 480.8L562.3 478.4L563.6 475.9L564.9 473.5L566.2 471.1L567.6 468.7L569.1 466.3L570.6 463.9L572.1 461.5L573.6 459.2L575.2 456.9L576.9 454.6L578.5 452.3L580.2 450.0L582.0 447.7L583.7 445.5L585.5 443.3z" fill="#6c6c6c"/><path d="M652.4 472.8L656.4 473.5L660.4 474.2L664.5 474.9L668.7 475.5L673.0 476.1L677.3 476.6L681.7 477.1L686.1 477.6L690.6 477.9L695.1 478.3L699.6 478.5L704.2 478.8L708.8 478.9L713.4 479.0L718.0 479.1L722.6 479.1L727.2 479.1L731.9 479.0L736.5 478.8L741.0 478.6L745.6 478.4L750.1 478.1L754.6 477.7L759.0 477.3L763.4 476.8L767.8 476.3L768.5 479.3L769.2 482.3L769.9 485.3L770.6 488.4L771.2 491.4L771.9 494.5L772.5 497.6L773.2 500.7L773.8 503.9L774.4 507.0L775.0 510.2L775.5 513.4L776.1 516.5L776.6 519.7L777.2 522.9L777.7 526.1L778.2 529.4L778.7 532.6L779.1 535.8L779.6 539.0L780.0 542.2L780.5 545.5L780.9 548.7L781.3 551.9L781.6 555.1L782.0 558.3L776.3 559.1L770.6 559.9L764.8 560.5L759.0 561.1L753.1 561.6L747.1 562.0L741.2 562.4L735.1 562.6L729.1 562.8L723.1 562.8L717.0 562.8L711.0 562.7L704.9 562.5L698.9 562.2L693.0 561.9L687.0 561.4L681.2 560.9L675.3 560.3L669.6 559.6L663.9 558.8L658.3 558.0L652.8 557.0L647.3 556.0L642.0 555.0L636.8 553.8L631.7 552.6L632.2 549.5L632.8 546.3L633.3 543.2L633.9 540.1L634.5 536.9L635.2 533.8L635.8 530.6L636.5 527.5L637.2 524.4L638.0 521.2L638.7 518.1L639.5 515.0L640.3 511.9L641.1 508.8L641.9 505.7L642.8 502.6L643.7 499.6L644.6 496.5L645.5 493.5L646.4 490.5L647.4 487.5L648.4 484.5L649.3 481.5L650.4 478.6L651.4 475.7z" fill="#e4e4e4"/><path d="M771.7 475.8L775.9 475.2L780.1 474.6L784.1 473.9L788.1 473.1L792.0 472.3L795.9 471.5L799.6 470.7L803.2 469.7L806.8 468.8L810.2 467.8L813.5 466.8L816.8 465.8L819.9 464.7L822.9 463.6L825.7 462.4L828.5 461.3L831.1 460.1L833.7 458.9L836.0 457.6L838.3 456.4L840.4 455.1L842.5 453.8L844.3 452.5L846.1 451.2L847.7 449.8L849.2 448.5L851.0 450.8L852.8 453.2L854.5 455.6L856.2 458.0L857.9 460.4L859.5 462.9L861.1 465.3L862.7 467.8L864.2 470.3L865.7 472.8L867.2 475.4L868.6 477.9L870.0 480.5L871.3 483.0L872.6 485.6L873.9 488.2L875.1 490.8L876.3 493.4L877.4 496.0L878.5 498.6L879.6 501.3L880.6 503.9L881.6 506.6L882.5 509.2L883.4 511.9L884.3 514.5L882.6 516.6L880.7 518.6L878.6 520.7L876.4 522.7L874.0 524.7L871.4 526.7L868.7 528.7L865.8 530.6L862.7 532.5L859.4 534.4L856.0 536.2L852.4 538.0L848.7 539.7L844.8 541.5L840.7 543.1L836.5 544.7L832.2 546.3L827.7 547.8L823.0 549.2L818.3 550.6L813.4 551.9L808.3 553.2L803.2 554.4L797.9 555.5L792.5 556.5L787.1 557.5L786.7 554.3L786.3 551.1L785.9 547.9L785.4 544.7L785.0 541.5L784.5 538.3L784.0 535.1L783.5 531.8L783.0 528.6L782.4 525.4L781.9 522.2L781.3 519.1L780.7 515.9L780.1 512.7L779.5 509.5L778.8 506.4L778.2 503.3L777.5 500.1L776.8 497.0L776.1 493.9L775.4 490.9L774.7 487.8L774.0 484.8L773.2 481.8L772.5 478.8z" fill="#dc0000"/><path d="M886.5 515.0L887.9 512.9L889.1 510.8L890.2 508.7L891.1 506.5L891.8 504.4L892.3 502.3L892.8 500.2L893.0 498.1L893.1 496.0L893.1 493.9L892.8 491.9L892.5 489.8L892.0 487.8L889.1 486.5L888.5 484.5L888.0 482.4L887.5 480.3L887.1 478.1L886.7 475.8L886.4 473.4L886.1 471.0L885.8 468.5L885.6 465.9L885.4 463.2L885.2 460.5L885.1 457.6L886.5 459.4L887.9 461.3L889.3 463.2L890.7 465.1L892.1 467.0L893.4 469.0L894.8 470.9L896.1 472.9L897.5 474.9L898.8 477.0L900.1 479.0L901.4 481.1L902.7 483.2L903.9 485.4L905.2 487.5L906.4 489.7L907.7 491.9L908.9 494.2L910.1 496.5L911.3 498.8L912.4 501.1L913.6 503.5L914.7 505.8L915.8 508.3L916.9 510.7L917.9 513.2L916.1 516.4L914.3 519.5L912.6 522.4L910.9 525.3L909.4 528.1L908.0 530.8L906.6 533.5L905.4 536.1L904.2 538.6L903.1 541.2L902.1 543.6L901.2 546.1L900.4 548.5L899.6 551.0L899.0 553.4L898.4 555.9L897.9 558.3L897.5 560.8L899.6 563.6L899.2 566.1L898.6 568.7L897.9 571.3L897.0 573.9L895.9 576.5L894.7 579.0L893.3 581.6L893.5 579.2L893.8 576.7L893.9 574.3L894.1 571.8L894.1 569.3L894.2 566.8L894.2 564.3L894.2 561.8L894.1 559.3L894.0 556.7L893.8 554.2L893.6 551.6L893.4 549.0L893.1 546.4L892.8 543.8L892.4 541.2L892.0 538.6L891.6 536.0L891.1 533.4L890.6 530.8L890.0 528.2L889.4 525.5L888.7 522.9L888.0 520.3L887.3 517.6z" fill="#00b80c"/><path d="M558.3 440.2L558.1 443.7L557.9 447.1L557.7 450.3L557.5 453.4L557.4 456.4L557.2 459.4L557.0 462.2L556.9 464.9L556.6 467.5L556.4 470.1L556.1 472.5L555.8 474.9L555.5 477.2L555.1 479.4L554.6 481.6L554.1 483.7L553.5 485.8L550.6 487.0L550.1 489.0L549.7 491.1L549.4 493.1L549.3 495.2L549.3 497.3L549.5 499.4L549.9 501.5L550.4 503.6L549.6 506.1L548.9 508.6L548.2 511.1L547.5 513.6L546.9 516.1L546.3 518.6L545.8 521.2L545.3 523.7L544.8 526.2L544.4 528.7L544.1 531.2L543.7 533.6L543.5 536.1L543.2 538.6L543.0 541.1L542.9 543.6L542.7 546.0L542.7 548.5L542.6 550.9L542.7 553.3L542.7 555.8L542.8 558.2L542.9 560.6L543.1 563.0L543.3 565.4L543.6 567.7L543.1 565.2L545.1 562.3L544.8 559.8L544.3 557.4L543.8 554.9L543.2 552.5L542.5 550.1L541.7 547.6L540.9 545.2L539.9 542.7L538.9 540.2L537.8 537.7L536.6 535.1L535.3 532.5L533.9 529.8L532.4 527.0L530.8 524.2L529.2 521.3L527.5 518.3L525.6 515.2L523.7 511.9L521.7 508.6L519.6 505.1L517.4 501.4L515.2 497.5L512.8 493.5L514.5 490.9L516.1 488.4L517.8 485.9L519.5 483.5L521.2 481.1L522.9 478.7L524.6 476.4L526.3 474.2L528.1 472.0L529.8 469.8L531.6 467.7L533.3 465.6L535.1 463.6L536.9 461.6L538.7 459.6L540.4 457.7L542.2 455.8L544.0 453.9L545.8 452.1L547.6 450.3L549.4 448.5L551.2 446.8L553.0 445.1L554.8 443.5L556.6 441.8z" fill="#6c6c6c"/><path d="M551.0 505.6L551.8 507.7L552.8 509.8L553.9 511.9L555.2 514.0L556.7 516.1L558.4 518.2L560.2 520.3L562.2 522.4L564.4 524.4L566.7 526.5L569.2 528.5L571.9 530.5L574.8 532.5L577.8 534.4L581.0 536.3L584.4 538.2L587.9 540.0L591.6 541.8L595.5 543.5L599.5 545.2L603.7 546.9L608.0 548.5L612.4 550.0L617.0 551.5L621.8 552.9L626.7 554.3L626.2 557.4L625.7 560.5L625.3 563.6L624.9 566.6L624.5 569.7L624.1 572.8L623.8 575.8L623.5 578.8L623.2 581.8L622.9 584.8L622.7 587.8L622.5 590.8L622.3 593.7L622.2 596.6L622.0 599.5L621.9 602.4L621.9 605.3L621.8 608.1L621.8 610.9L621.8 613.7L621.8 616.4L621.9 619.1L622.0 621.8L622.1 624.5L622.2 627.1L622.4 629.7L617.3 628.0L612.3 626.3L607.5 624.5L602.9 622.6L598.4 620.6L594.1 618.6L589.9 616.5L585.9 614.4L582.0 612.2L578.4 609.9L574.9 607.6L571.6 605.3L568.5 602.9L565.5 600.5L562.7 598.1L560.2 595.6L557.8 593.1L555.5 590.6L553.5 588.1L551.6 585.5L549.9 583.0L548.4 580.4L547.1 577.8L545.9 575.2L545.0 572.7L544.1 570.1L543.9 567.7L543.7 565.3L543.5 562.9L543.4 560.5L543.3 558.1L543.2 555.6L543.2 553.2L543.3 550.7L543.3 548.3L543.5 545.8L543.6 543.3L543.8 540.8L544.0 538.3L544.3 535.8L544.6 533.3L545.0 530.8L545.4 528.3L545.9 525.8L546.4 523.2L546.9 520.7L547.5 518.2L548.1 515.7L548.8 513.1L549.5 510.6L550.2 508.1z" fill="#e4e4e4"/><path d="M631.3 555.5L636.4 556.7L641.6 557.9L647.0 558.9L652.4 560.0L658.0 560.9L663.6 561.8L669.3 562.5L675.1 563.3L680.9 563.9L686.9 564.4L692.8 564.9L698.8 565.2L704.9 565.5L710.9 565.7L717.0 565.8L723.1 565.8L729.2 565.7L735.2 565.6L741.3 565.3L747.3 565.0L753.3 564.6L759.2 564.1L765.1 563.5L770.9 562.8L776.6 562.1L782.3 561.2L782.6 564.4L782.9 567.6L783.2 570.8L783.5 574.0L783.8 577.1L784.0 580.2L784.2 583.4L784.4 586.5L784.6 589.5L784.8 592.6L784.9 595.7L785.1 598.7L785.2 601.7L785.3 604.7L785.4 607.6L785.4 610.6L785.5 613.5L785.5 616.3L785.5 619.2L785.5 622.0L785.5 624.8L785.5 627.6L785.4 630.3L785.3 633.0L785.2 635.7L785.1 638.3L779.2 639.3L773.2 640.2L767.1 641.1L761.0 641.8L754.8 642.4L748.5 642.9L742.2 643.3L735.9 643.6L729.5 643.8L723.2 643.9L716.8 643.9L710.4 643.8L704.1 643.5L697.8 643.2L691.5 642.7L685.3 642.2L679.1 641.5L672.9 640.8L666.9 639.9L660.9 638.9L655.0 637.9L649.2 636.7L643.5 635.5L638.0 634.1L632.5 632.7L627.1 631.2L627.0 628.6L626.9 625.9L626.8 623.3L626.7 620.6L626.6 617.8L626.6 615.1L626.6 612.3L626.6 609.5L626.7 606.6L626.7 603.8L626.8 600.9L626.9 598.0L627.1 595.1L627.3 592.1L627.4 589.1L627.7 586.2L627.9 583.2L628.2 580.1L628.5 577.1L628.8 574.0L629.1 571.0L629.5 567.9L629.9 564.8L630.3 561.7L630.8 558.6z" fill="#dc0000"/><path d="M787.4 560.4L792.9 559.4L798.3 558.4L803.6 557.2L808.8 556.0L813.8 554.8L818.7 553.4L823.5 552.0L828.2 550.6L832.7 549.1L837.1 547.5L841.3 545.9L845.4 544.2L849.3 542.5L853.1 540.7L856.7 538.9L860.1 537.0L863.4 535.1L866.5 533.2L869.4 531.2L872.2 529.3L874.7 527.3L877.1 525.2L879.4 523.2L881.4 521.1L883.3 519.0L885.1 516.9L885.8 519.6L886.6 522.2L887.3 524.9L887.9 527.5L888.5 530.2L889.1 532.8L889.6 535.5L890.1 538.1L890.6 540.8L891.0 543.4L891.3 546.0L891.7 548.6L891.9 551.2L892.2 553.8L892.4 556.4L892.5 559.0L892.6 561.5L892.7 564.1L892.8 566.6L892.7 569.1L892.7 571.6L892.6 574.1L892.5 576.6L892.3 579.1L892.1 581.5L891.8 584.0L890.1 586.5L888.2 589.1L886.0 591.6L883.7 594.1L881.3 596.6L878.6 599.0L875.8 601.5L872.8 603.8L869.6 606.2L866.2 608.5L862.6 610.8L858.9 613.0L855.0 615.2L850.9 617.3L846.7 619.4L842.3 621.4L837.8 623.3L833.0 625.2L828.2 627.0L823.2 628.7L818.0 630.3L812.8 631.9L807.4 633.4L801.9 634.8L796.2 636.1L790.5 637.3L790.6 634.6L790.7 632.0L790.8 629.3L790.8 626.6L790.9 623.8L790.9 621.0L790.9 618.2L790.9 615.4L790.8 612.5L790.8 609.6L790.7 606.7L790.6 603.7L790.5 600.7L790.4 597.7L790.2 594.7L790.1 591.7L789.9 588.6L789.7 585.5L789.5 582.5L789.2 579.3L789.0 576.2L788.7 573.1L788.4 569.9L788.1 566.8L787.8 563.6z" fill="#dcdc00"/><path d="M893.0 583.8L894.4 581.2L895.7 578.6L896.7 576.0L897.6 573.5L898.4 570.9L898.9 568.3L896.9 565.4L897.3 562.9L897.8 560.4L898.3 558.0L899.0 555.5L899.7 553.1L900.5 550.7L901.4 548.2L902.3 545.8L903.4 543.3L904.5 540.8L905.8 538.3L907.1 535.7L908.5 533.0L910.0 530.3L911.6 527.5L913.3 524.7L915.1 521.7L916.9 518.7L918.9 515.5L919.9 518.0L920.9 520.6L921.9 523.2L922.8 525.8L923.7 528.5L924.6 531.2L925.5 533.9L926.3 536.7L927.1 539.5L927.9 542.4L928.6 545.2L929.3 548.1L930.0 551.1L930.6 554.0L931.1 557.0L931.7 560.1L932.2 563.1L932.6 566.2L933.0 569.4L933.4 572.5L933.7 575.7L934.0 579.0L934.2 582.2L934.3 585.5L934.4 588.8L934.4 592.2L930.5 593.7L926.8 595.2L923.3 596.7L919.9 598.2L916.7 599.7L913.6 601.2L910.7 602.7L907.9 604.3L905.2 605.8L902.6 607.4L900.1 608.9L897.7 610.5L895.4 612.2L893.2 613.8L891.1 615.5L889.0 617.3L887.1 619.1L885.1 620.9L883.3 622.8L881.4 624.7L879.6 626.7L877.9 628.8L876.2 630.9L874.5 633.1L872.8 635.3L871.1 637.6L872.2 635.8L873.3 633.9L874.3 632.1L875.4 630.2L878.5 629.5L879.6 627.6L880.6 625.6L881.5 623.6L882.5 621.6L883.4 619.6L884.2 617.5L885.1 615.4L885.9 613.3L886.6 611.2L887.4 609.0L888.1 606.8L888.7 604.6L889.4 602.4L890.0 600.1L890.5 597.9L891.0 595.6L891.5 593.2L891.9 590.9L892.3 588.6L892.7 586.2z" fill="#12b4c0"/><path d="M511.4 495.9L513.8 499.9L516.2 503.8L518.5 507.4L520.6 510.9L522.7 514.2L524.7 517.5L526.6 520.6L528.5 523.5L530.2 526.4L531.8 529.3L533.3 532.0L534.8 534.7L536.1 537.3L537.4 539.8L538.6 542.4L539.7 544.8L540.7 547.3L541.6 549.7L542.4 552.2L543.2 554.6L543.8 557.0L544.4 559.5L544.9 562.0L545.3 564.4L543.3 567.3L543.8 569.9L544.1 572.2L544.5 574.5L544.9 576.9L545.3 579.2L545.8 581.4L548.7 583.2L549.2 585.4L549.7 587.6L550.3 589.8L550.8 592.0L551.4 594.2L552.0 596.3L552.6 598.5L553.3 600.7L553.9 602.8L554.6 605.0L555.3 607.1L556.0 609.2L556.7 611.3L557.4 613.4L558.1 615.5L558.9 617.6L559.7 619.7L560.5 621.8L561.3 623.9L562.1 625.9L560.3 624.0L558.4 622.1L556.5 620.2L554.6 618.4L552.6 616.6L550.5 614.9L548.3 613.2L546.1 611.5L543.8 609.9L541.4 608.3L538.8 606.8L536.2 605.2L533.5 603.7L530.6 602.2L527.6 600.7L524.5 599.2L521.2 597.7L517.8 596.2L514.2 594.6L510.4 593.1L506.4 591.6L502.2 590.0L497.8 588.4L493.2 586.8L488.3 585.1L483.1 583.3L483.4 579.3L483.8 575.3L484.3 571.4L484.9 567.5L485.6 563.7L486.3 559.9L487.1 556.2L487.9 552.5L488.8 548.9L489.8 545.4L490.8 541.9L491.9 538.4L493.0 535.0L494.2 531.7L495.5 528.4L496.7 525.2L498.0 522.0L499.4 518.9L500.8 515.8L502.2 512.8L503.7 509.9L505.2 507.0L506.7 504.1L508.2 501.3L509.8 498.6z" fill="#e4e4e4"/><path d="M544.4 572.2L545.2 574.8L546.2 577.4L547.4 580.0L548.7 582.6L550.2 585.2L551.9 587.7L553.7 590.3L555.8 592.8L558.0 595.4L560.4 597.9L563.0 600.3L565.8 602.8L568.7 605.2L571.8 607.6L575.1 609.9L578.6 612.2L582.3 614.5L586.1 616.7L590.1 618.8L594.3 620.9L598.6 622.9L603.1 624.9L607.7 626.8L612.5 628.6L617.5 630.4L622.5 632.1L622.7 634.6L623.0 637.1L623.2 639.6L623.5 642.0L623.8 644.4L624.1 646.8L624.5 649.1L624.9 651.4L625.3 653.7L625.7 655.9L626.1 658.1L626.6 660.2L627.1 662.3L627.6 664.4L628.1 666.4L628.6 668.4L629.2 670.3L629.8 672.2L630.4 674.1L631.0 675.9L631.7 677.7L632.3 679.4L633.0 681.1L633.7 682.7L634.4 684.3L635.2 685.9L630.7 684.3L626.3 682.6L622.1 680.8L618.0 679.0L614.0 677.1L610.2 675.1L606.5 673.1L602.9 671.0L599.5 668.8L596.2 666.7L593.1 664.4L590.1 662.1L587.3 659.8L584.6 657.4L582.1 655.0L579.8 652.6L577.5 650.2L575.5 647.7L573.6 645.2L573.8 641.3L572.2 638.9L570.5 636.5L568.8 634.2L567.1 632.0L565.4 629.9L563.7 627.8L562.8 625.8L562.0 623.7L561.2 621.7L560.3 619.6L559.5 617.6L558.7 615.5L558.0 613.4L557.2 611.3L556.5 609.2L555.7 607.1L555.0 605.0L554.3 602.9L553.6 600.8L552.9 598.6L552.3 596.5L551.6 594.3L551.0 592.1L548.1 590.6L547.5 588.4L546.9 586.1L546.4 583.8L545.9 581.5L545.5 579.2L545.1 576.9L544.7 574.6z" fill="#dc0000"/><path d="M627.3 633.5L632.6 635.0L638.1 636.5L643.7 637.8L649.3 639.1L655.1 640.2L661.0 641.3L667.0 642.3L673.0 643.1L679.1 643.9L685.3 644.6L691.5 645.1L697.8 645.6L704.1 645.9L710.5 646.2L716.8 646.3L723.2 646.3L729.5 646.2L735.9 646.0L742.2 645.7L748.5 645.3L754.7 644.8L760.9 644.2L767.0 643.5L773.1 642.6L779.1 641.7L785.0 640.7L784.9 643.2L784.7 645.8L784.6 648.2L784.4 650.7L784.2 653.1L784.0 655.5L783.7 657.8L783.5 660.1L783.2 662.4L783.0 664.6L782.7 666.8L782.4 668.9L782.1 671.0L781.7 673.0L781.4 675.1L781.0 677.0L780.6 678.9L780.3 680.8L779.9 682.6L779.5 684.4L779.0 686.2L778.6 687.9L778.1 689.5L777.7 691.1L777.2 692.7L776.7 694.2L771.6 695.2L766.4 696.1L761.1 696.9L755.7 697.6L750.3 698.2L744.9 698.7L739.4 699.0L733.9 699.3L728.4 699.5L722.9 699.6L717.4 699.6L711.9 699.5L706.4 699.2L700.9 698.9L695.4 698.5L690.0 697.9L684.6 697.3L679.3 696.6L674.0 695.7L668.8 694.8L663.7 693.8L658.7 692.7L653.7 691.5L648.8 690.2L644.0 688.8L639.3 687.3L638.6 685.8L638.0 684.2L637.3 682.5L636.6 680.8L636.0 679.1L635.4 677.3L634.8 675.5L634.2 673.7L633.7 671.8L633.1 669.8L632.6 667.9L632.1 665.8L631.6 663.8L631.2 661.7L630.7 659.5L630.3 657.4L629.9 655.1L629.5 652.9L629.2 650.6L628.8 648.3L628.5 645.9L628.2 643.5L628.0 641.1L627.7 638.6L627.5 636.1z" fill="#dcdc00"/><path d="M790.4 639.6L796.1 638.4L801.7 637.1L807.2 635.7L812.6 634.2L817.9 632.7L823.0 631.0L828.0 629.3L832.9 627.5L837.6 625.6L842.1 623.7L846.5 621.7L850.7 619.6L854.8 617.5L858.7 615.3L862.4 613.1L865.9 610.8L869.3 608.5L872.5 606.1L875.5 603.7L878.4 601.3L881.0 598.8L883.5 596.3L885.8 593.8L887.9 591.3L889.8 588.7L891.6 586.2L891.3 588.6L890.9 590.9L890.5 593.3L890.1 595.6L889.6 597.9L889.1 600.2L888.5 602.5L887.9 604.8L887.3 607.0L886.6 609.2L886.0 611.4L885.2 613.6L884.5 615.7L883.7 617.8L882.8 619.9L882.0 622.0L881.1 624.0L880.1 626.0L879.2 628.0L878.2 629.9L877.1 631.9L876.1 633.8L875.0 635.6L871.8 636.2L870.7 638.0L869.6 639.8L869.9 643.6L868.1 646.1L866.1 648.6L864.0 651.1L861.8 653.5L859.3 656.0L856.8 658.3L854.0 660.7L851.1 663.0L848.1 665.3L844.9 667.5L841.6 669.7L838.1 671.8L834.5 673.9L830.8 675.9L826.9 677.8L822.8 679.7L818.7 681.5L814.4 683.2L810.0 684.9L805.5 686.5L800.9 688.0L796.2 689.4L791.3 690.8L786.4 692.0L781.4 693.2L781.9 691.7L782.4 690.1L782.9 688.5L783.4 686.8L783.9 685.1L784.3 683.4L784.8 681.6L785.2 679.8L785.6 677.9L786.0 676.0L786.4 674.0L786.8 672.0L787.1 670.0L787.5 667.9L787.8 665.7L788.1 663.6L788.4 661.3L788.7 659.1L789.0 656.8L789.2 654.5L789.5 652.1L789.7 649.7L789.9 647.2L790.0 644.7L790.2 642.2z" fill="#00b80c"/><path d="M564.5 629.7L566.3 631.7L568.0 633.8L569.8 636.0L571.5 638.2L573.2 640.5L574.9 642.9L574.7 646.8L576.6 649.3L578.6 651.7L580.8 654.2L583.2 656.6L585.7 659.0L588.3 661.3L591.1 663.6L594.1 665.9L597.2 668.1L600.4 670.3L603.8 672.5L607.4 674.5L611.1 676.6L614.9 678.5L618.8 680.4L622.9 682.2L627.1 684.0L631.4 685.7L635.8 687.3L637.0 689.6L638.3 691.7L639.5 693.8L640.9 695.8L642.2 697.6L643.6 699.4L645.0 701.0L646.4 702.6L647.9 704.0L649.4 705.4L650.9 706.6L652.4 707.8L654.0 708.8L655.6 709.7L657.2 710.6L658.8 711.3L661.3 709.7L662.9 710.3L664.5 711.0L666.0 711.7L667.6 712.5L669.1 713.3L670.6 714.2L672.0 715.2L673.5 716.2L675.0 717.3L672.4 716.8L669.8 716.3L667.3 715.8L664.7 715.3L662.3 714.8L659.8 714.4L657.4 713.9L655.0 713.4L652.6 712.9L650.3 712.5L648.0 712.0L645.7 711.6L643.4 711.2L641.2 710.8L639.0 710.5L636.8 710.2L634.6 709.9L632.5 709.6L630.3 709.4L628.2 709.2L626.1 709.1L624.0 709.0L621.9 708.9L619.9 708.9L617.8 709.0L615.7 709.1L613.0 706.1L610.3 703.1L607.8 700.1L605.2 697.1L602.8 694.1L600.4 691.1L598.1 688.1L595.9 685.0L593.7 682.0L591.6 678.9L589.6 675.9L587.6 672.8L585.6 669.8L583.7 666.7L581.9 663.7L580.1 660.6L578.3 657.5L576.6 654.5L575.0 651.4L573.4 648.3L571.8 645.2L570.3 642.1L568.8 639.0L567.3 635.9L565.9 632.8z" fill="#dcdc00"/><path d="M640.0 688.7L644.6 690.2L649.4 691.5L654.2 692.8L659.2 694.0L664.2 695.1L669.3 696.1L674.4 697.1L679.6 697.9L684.9 698.6L690.3 699.3L695.6 699.8L701.0 700.2L706.5 700.6L711.9 700.8L717.4 700.9L722.9 700.9L728.4 700.8L733.8 700.7L739.3 700.4L744.7 700.0L750.1 699.5L755.4 698.9L760.7 698.2L766.0 697.4L771.2 696.5L776.3 695.5L775.5 697.7L774.7 699.8L773.9 701.8L773.0 703.6L772.1 705.4L771.2 707.0L770.3 708.6L769.4 710.0L768.4 711.3L767.5 712.5L766.5 713.6L765.5 714.6L764.4 715.5L763.4 716.3L762.4 717.0L761.3 717.6L760.2 718.1L759.1 718.4L758.1 718.7L756.5 716.6L755.4 717.0L754.4 717.4L753.4 717.9L752.4 718.5L751.5 719.1L750.5 719.8L747.7 720.2L744.9 720.5L742.1 720.7L739.3 721.0L736.4 721.2L733.6 721.3L730.7 721.5L727.8 721.6L725.0 721.7L722.1 721.7L719.2 721.7L716.3 721.6L713.5 721.6L710.6 721.4L707.7 721.3L704.9 721.1L702.0 720.9L699.2 720.6L696.4 720.3L693.6 720.0L690.8 719.7L688.1 719.3L685.4 718.9L682.7 718.5L680.0 718.1L677.4 717.7L676.0 716.7L674.6 715.7L673.2 714.8L671.7 714.0L670.3 713.2L668.8 712.5L667.3 711.9L665.8 711.3L663.5 713.0L661.9 712.4L660.4 711.7L658.8 710.9L657.3 710.0L655.8 708.9L654.3 707.8L652.9 706.6L651.5 705.3L650.1 703.9L648.7 702.3L647.4 700.7L646.1 699.0L644.8 697.1L643.5 695.2L642.3 693.1L641.1 691.0z" fill="#00b80c"/><path d="M780.9 694.5L785.9 693.4L790.8 692.1L795.6 690.8L800.2 689.4L804.8 687.9L809.3 686.3L813.7 684.6L817.9 682.9L822.0 681.1L826.0 679.2L829.9 677.3L833.6 675.3L837.2 673.3L840.7 671.1L844.0 669.0L847.1 666.8L850.2 664.5L853.0 662.2L855.7 659.9L858.3 657.5L860.7 655.1L863.0 652.7L865.1 650.2L867.0 647.7L866.8 643.9L868.6 641.4L866.8 644.2L865.0 646.9L863.2 649.6L861.4 652.3L859.6 654.9L857.8 657.5L855.9 660.2L854.1 662.8L852.2 665.4L850.3 668.0L848.3 670.5L846.4 673.1L844.4 675.7L842.4 678.3L840.4 680.8L838.3 683.4L836.2 686.0L834.1 688.5L831.9 691.1L829.7 693.7L827.5 696.2L825.2 698.8L822.8 701.4L820.4 704.0L818.0 706.5L815.5 709.1L813.4 709.3L811.3 709.5L809.1 709.7L806.9 710.0L804.8 710.3L802.6 710.6L800.3 711.0L798.1 711.4L795.8 711.8L793.5 712.2L791.2 712.6L788.9 713.1L786.5 713.6L784.1 714.1L781.6 714.5L779.2 715.0L776.7 715.5L774.2 716.0L771.6 716.5L769.0 717.0L766.4 717.4L763.8 717.9L761.2 718.3L758.5 718.7L755.8 719.1L753.0 719.5L754.1 718.7L755.1 718.0L756.2 717.4L757.3 716.9L758.4 716.4L759.5 716.0L760.6 715.7L762.3 717.7L763.5 717.3L764.7 716.8L765.8 716.2L767.0 715.5L768.1 714.7L769.2 713.8L770.3 712.8L771.3 711.7L772.4 710.5L773.4 709.1L774.4 707.7L775.4 706.1L776.4 704.5L777.4 702.7L778.3 700.8L779.2 698.8L780.1 696.8z" fill="#12b4c0"/><text transform="matrix(0.0107 -0.0834 0.7504 0.1640 759.3 374.9)" x="-27.5" y="21" font-family="Liberation Sans" font-size="45" fill="#0a0a0a">1A</text><text transform="matrix(-0.1958 -0.0598 0.5382 0.0152 749.3 367.3)" x="-27.5" y="21" font-family="Liberation Sans" font-size="45" fill="#0a0a0a">1B</text><text transform="matrix(-0.2857 -0.0060 0.0540 -0.0497 724.1 363.9)" x="-28.8" y="21" font-family="Liberation Sans" font-size="45" fill="#0a0a0a">1C</text><text transform="matrix(-0.2251 0.0506 -0.4554 -0.0059 697.3 366.2)" x="-28.8" y="21" font-family="Liberation Sans" font-size="45" fill="#0a0a0a">1D</text><text transform="matrix(-0.0360 0.0823 -0.7404 0.1304 683.4 373.2)" x="-27.5" y="21" font-family="Liberation Sans" font-size="45" fill="#0a0a0a">1E</text><text transform="matrix(0.1918 0.0669 -0.6015 0.2942 691.4 381.1)" x="-26.3" y="21" font-family="Liberation Sans" font-size="45" fill="#0a0a0a">1F</text><text transform="matrix(0.3111 0.0071 -0.0640 0.3799 718.1 385.1)" x="-30.0" y="21" font-family="Liberation Sans" font-size="45" fill="#0a0a0a">1G</text><text transform="matrix(0.2291 -0.0577 0.5188 0.3210 746.7 382.4)" x="-28.8" y="21" font-family="Liberation Sans" font-size="45" fill="#0a0a0a">1H</text><text transform="matrix(-0.0353 -0.2634 0.6088 0.4233 828.4 404.8)" x="-27.5" y="21" font-family="Liberation Sans" font-size="45" fill="#0a0a0a">2A</text><text transform="matrix(-0.1628 0.2537 -0.5863 0.3865 616.0 399.6)" x="-27.5" y="21" font-family="Liberation Sans" font-size="45" fill="#0a0a0a">2E</text><text transform="matrix(0.5208 0.2318 -0.5359 0.5807 633.4 425.5)" x="-26.3" y="21" font-family="Liberation Sans" font-size="45" fill="#0a0a0a">2F</text><text transform="matrix(0.9462 0.0262 -0.0607 0.6984 711.7 439.6)" x="-30.0" y="21" font-family="Liberation Sans" font-size="45" fill="#0a0a0a">2G</text><text transform="matrix(0.6486 -0.2039 0.4712 0.6162 797.3 429.8)" x="-28.8" y="21" font-family="Liberation Sans" font-size="45" fill="#0a0a0a">2H</text><text transform="matrix(-0.1191 -0.4549 0.3580 0.5872 877.3 456.3)" x="-27.5" y="21" font-family="Liberation Sans" font-size="45" fill="#0a0a0a">3A</text><text transform="matrix(-0.1749 0.4486 -0.3531 0.5762 565.9 453.6)" x="-41.5" y="21" font-family="Liberation Sans" font-size="45" fill="#0a0a0a">3E</text><text transform="matrix(0.7332 0.4290 -0.3377 0.7470 588.8 493.2)" x="-26.3" y="21" font-family="Liberation Sans" font-size="45" fill="#0a0a0a">3F</text><text transform="matrix(1.4616 0.0510 -0.0401 0.8749 706.5 520.0)" x="-30.0" y="21" font-family="Liberation Sans" font-size="45" fill="#0a0a0a">3G</text><text transform="matrix(0.9451 -0.3829 0.3014 0.7849 836.8 501.3)" x="-28.8" y="21" font-family="Liberation Sans" font-size="45" fill="#0a0a0a">3H</text><text transform="matrix(-0.0148 -0.6324 0.0687 0.6501 899.9 527.0)" x="-13.5" y="21" font-family="Liberation Sans" font-size="45" fill="#0a0a0a">4A</text><text transform="matrix(0.8186 0.5973 -0.0649 0.7358 568.4 568.8)" x="-26.3" y="21" font-family="Liberation Sans" font-size="45" fill="#0a0a0a">4F</text><text transform="matrix(1.7054 0.0726 -0.0079 0.8160 704.1 606.6)" x="-30.0" y="21" font-family="Liberation Sans" font-size="45" fill="#0a0a0a">4G</text><text transform="matrix(1.0727 -0.5368 0.0583 0.7597 855.1 580.2)" x="-28.8" y="21" font-family="Liberation Sans" font-size="45" fill="#0a0a0a">4H</text><text transform="matrix(0.7902 0.6556 0.1956 0.5684 575.3 635.1)" x="-26.3" y="21" font-family="Liberation Sans" font-size="45" fill="#0a0a0a">5F</text><text transform="matrix(1.6215 0.0791 0.0236 0.5547 704.9 676.3)" x="-30.0" y="21" font-family="Liberation Sans" font-size="45" fill="#0a0a0a">5G</text><text transform="matrix(1.0296 -0.5877 -0.1753 0.5652 848.8 647.6)" x="-28.8" y="21" font-family="Liberation Sans" font-size="45" fill="#0a0a0a">5H</text><text transform="matrix(0.7880 0.5262 0.3525 0.2981 615.1 687.5)" x="-40.3" y="21" font-family="Liberation Sans" font-size="45" fill="#0a0a0a">6F</text><text transform="matrix(1.2720 0.0664 0.0445 0.2169 708.4 715.0)" x="-30.0" y="21" font-family="Liberation Sans" font-size="45" fill="#0a0a0a">6G</text><text transform="matrix(0.8403 -0.5047 -0.3381 0.2894 822.4 690.6)" x="-28.8" y="21" font-family="Liberation Sans" font-size="45" fill="#0a0a0a">6H</text><circle cx="721.2" cy="543.0" r="179.3" fill="url(#sg)"/><clipPath id="eqc"><path d="M535.2 533.8L537.6 538.8L539.7 543.6L541.5 548.3L543.0 553.0L544.2 557.6L545.1 562.4L543.4 567.5L544.7 572.5L546.5 577.4L549.0 582.3L552.2 587.3L556.0 592.1L560.5 596.9L565.6 601.6L571.4 606.2L577.8 610.6L584.9 614.9L592.6 619.0L600.9 622.9L609.8 626.5L619.3 629.9L629.2 632.9L639.6 635.7L650.5 638.2L661.7 640.3L673.2 642.0L685.0 643.4L696.9 644.3L709.0 644.9L721.2 645.1L733.4 644.9L745.5 644.3L757.4 643.4L769.2 642.0L780.7 640.3L791.9 638.2L802.8 635.7L813.2 632.9L823.1 629.9L832.6 626.5L841.5 622.9L849.8 619.0L857.5 614.9L864.6 610.6L871.0 606.2L876.8 601.6L881.9 596.9L886.4 592.1L890.2 587.3L893.4 582.3L895.9 577.4L897.7 572.5L899.0 567.5L897.3 562.4L898.2 557.6L899.4 553.0L900.9 548.3L902.7 543.6L904.8 538.8L907.2 533.8L1121.2 943.0L321.20000000000005 943.0z"/></clipPath><g clip-path="url(#eqc)"><path d="M424.2 543.0L721.2 752.1M424.2 543.0L721.2 438.7M440.5 537.3L739.4 739.3M432.5 548.9L730.6 442.0M456.3 531.7L756.9 727.0M441.1 554.9L740.1 445.4M471.8 526.3L773.7 715.2M450.0 561.2L749.9 448.8M486.8 521.0L789.8 703.8M459.1 567.6L759.9 452.3M501.4 515.9L805.4 692.9M468.5 574.2L770.1 455.9M515.6 510.9L820.3 682.3M478.1 581.0L780.6 459.6M529.5 506.0L834.7 672.2M488.1 588.0L791.2 463.3M543.1 501.3L848.6 662.4M498.3 595.2L802.1 467.1M556.3 496.6L862.0 653.0M508.9 602.7L813.3 471.1M569.1 492.1L875.0 643.9M519.9 610.4L824.7 475.1M581.7 487.7L887.4 635.1M531.2 618.3L836.4 479.2M606.0 479.2L911.2 618.3M555.0 635.1L860.7 487.7M617.7 475.1L922.5 610.4M567.4 643.9L873.3 492.1M629.1 471.1L933.5 602.7M580.4 653.0L886.1 496.6M640.3 467.1L944.1 595.2M593.8 662.4L899.3 501.3M651.2 463.3L954.3 588.0M607.7 672.2L912.9 506.0M661.8 459.6L964.3 581.0M622.1 682.3L926.8 510.9M672.3 455.9L973.9 574.2M637.0 692.9L941.0 515.9M682.5 452.3L983.3 567.6M652.6 703.8L955.6 521.0M692.5 448.8L992.4 561.2M668.7 715.2L970.6 526.3M702.3 445.4L1001.3 554.9M685.5 727.0L986.1 531.7M711.8 442.0L1009.9 548.9M703.0 739.3L1001.9 537.3M721.2 438.7L1018.2 543.0M721.2 752.1L1018.2 543.0" stroke="#454545" stroke-width="0.9" fill="none" opacity="0.85"/><path d="M594.0 483.4L899.5 626.6M542.9 626.6L848.4 483.4" stroke="#4b4b4b" stroke-width="1.9" fill="none"/></g></g></svg>
<svg style="left:326px;top:844px;" width="34" height="34" viewBox="0 0 34 34"><path d="M17.5 25.5V11" stroke="#00e000" stroke-width="1.4"/><path d="M17.5 25.5L26.6 29.6" stroke="#e80000" stroke-width="1.2"/><path d="M17.5 25.5L8.4 29.6" stroke="#0000f0" stroke-width="1.2"/><text x="15.1" y="10.3" font-family="Liberation Sans" font-size="8.5" font-weight="700" fill="#00e000">y</text><text x="25.8" y="29.2" font-family="Liberation Sans" font-size="8.5" font-weight="700" fill="#e80000">x</text><text x="4.4" y="29.2" font-family="Liberation Sans" font-size="8.5" font-weight="700" fill="#0000f0">z</text></svg>
<div style="left:1131.2px;top:149px;width:1.8px;height:752px;background:#3a3a3a;"></div>
<div style="left:1135px;top:150.5px;width:768px;height:748.5px;background:transparent;border:1.2px solid #989898;"></div>
<div class="t" style="left:1144.6px;top:152.8px;font-size:12px;line-height:17px;color:#dcdcdc;letter-spacing:-0.534px;">File</div>
<div class="t" style="left:1177.5px;top:152.8px;font-size:12px;line-height:17px;color:#dcdcdc;letter-spacing:-0.420px;">Edit</div>
<div class="t" style="left:1212.4px;top:152.8px;font-size:12px;line-height:17px;color:#dcdcdc;letter-spacing:-0.248px;">History</div>
<div class="t" style="left:1263.7px;top:152.8px;font-size:12px;line-height:17px;color:#dcdcdc;letter-spacing:-0.608px;">Command</div>
<div class="t" style="left:1330.4px;top:152.8px;font-size:12px;line-height:17px;color:#dcdcdc;letter-spacing:-0.395px;">Help</div>
<div style="left:1552px;top:174px;width:118px;height:18px;background:#2b2b2b;border-radius:3px;"></div>
<div style="left:1737px;top:174px;width:28px;height:18px;background:#2b2b2b;border-radius:3px;"></div>
<div style="left:1139px;top:201.5px;width:729px;height:17.8px;background:#383838;"></div>
<div style="left:1139px;top:203.2px;width:77.20000000000005px;height:16px;background:#3d3d3d;border:1px solid #303030;border-bottom:none;border-radius:3px 3px 0 0;"></div>
<div style="left:1139px;top:203px;width:77.20000000000005px;height:18px;overflow:hidden;"><div class="t" style="left:-3.5px;top:2.4px;font-size:12px;letter-spacing:-0.45px;line-height:15px;color:#a8a8a8;">llow_shell.py</div></div>
<div style="left:1219px;top:203.2px;width:57px;height:16px;background:#3d3d3d;border:1px solid #303030;border-bottom:none;border-radius:3px 3px 0 0;"></div>
<div class="t" style="left:1229.2px;top:203.6px;font-size:12px;line-height:17px;color:#a8a8a8;letter-spacing:-0.360px;">Python</div>
<div style="left:1278.5px;top:203.2px;width:129.9000000000001px;height:16px;background:#3d3d3d;border:1px solid #303030;border-bottom:none;border-radius:3px 3px 0 0;"></div>
<div class="t" style="left:1289.5px;top:203.6px;font-size:12px;line-height:17px;color:#a8a8a8;letter-spacing:-0.319px;">ExportImportTest.mel</div>
<div style="left:1410.6px;top:203.2px;width:108.60000000000014px;height:16px;background:#3d3d3d;border:1px solid #303030;border-bottom:none;border-radius:3px 3px 0 0;"></div>
<div class="t" style="left:1421.2px;top:203.6px;font-size:12px;line-height:17px;color:#a8a8a8;letter-spacing:-0.363px;">Simplygon90.mel</div>
<div style="left:1522px;top:203.2px;width:42px;height:16px;background:#3d3d3d;border:1px solid #303030;border-bottom:none;border-radius:3px 3px 0 0;"></div>
<div class="t" style="left:1532.5px;top:203.6px;font-size:12px;line-height:17px;color:#a8a8a8;letter-spacing:-1.625px;">MEL</div>
<div style="left:1566.6px;top:203.2px;width:57.90000000000009px;height:16px;background:#3d3d3d;border:1px solid #303030;border-bottom:none;border-radius:3px 3px 0 0;"></div>
<div class="t" style="left:1577.3px;top:203.6px;font-size:12px;line-height:17px;color:#a8a8a8;letter-spacing:-0.327px;">Python</div>
<div style="left:1627px;top:203.2px;width:74.20000000000005px;height:16px;background:#3d3d3d;border:1px solid #303030;border-bottom:none;border-radius:3px 3px 0 0;"></div>
<div class="t" style="left:1637.7px;top:203.6px;font-size:12px;line-height:17px;color:#a8a8a8;letter-spacing:-0.640px;">crash_2.py</div>
<div style="left:1703.7px;top:203.2px;width:57.899999999999864px;height:16px;background:#3d3d3d;border:1px solid #303030;border-bottom:none;border-radius:3px 3px 0 0;"></div>
<div class="t" style="left:1714.4px;top:203.6px;font-size:12px;line-height:17px;color:#a8a8a8;letter-spacing:-0.327px;">Python</div>
<div style="left:1763.6px;top:203.2px;width:42.700000000000045px;height:16px;background:#3d3d3d;border:1px solid #303030;border-bottom:none;border-radius:3px 3px 0 0;"></div>
<div class="t" style="left:1774.4px;top:203.6px;font-size:12px;line-height:17px;color:#a8a8a8;letter-spacing:-1.458px;">MEL</div>
<div style="left:1807.9px;top:202px;width:58.299999999999955px;height:18px;background:#444444;border-radius:3px 3px 0 0;"></div>
<div class="t" style="left:1819px;top:203.6px;font-size:12px;line-height:17px;color:#f0f0f0;letter-spacing:-0.293px;">Python</div>
<svg style="left:1871px;top:205px;" width="8" height="12" viewBox="0 0 8 12"><path d="M7 1L1.5 6L7 11z" fill="#c8c8c8"/></svg>
<svg style="left:1886px;top:205px;" width="8" height="12" viewBox="0 0 8 12"><path d="M1 1L6.5 6L1 11z" fill="#c8c8c8"/></svg>
<div style="left:1179px;top:220px;width:718px;height:670.5px;background:#2b2b2b;"></div>
<div style="left:1177.9px;top:220px;width:1.3px;height:671px;background:#b4b4b4;"></div>
<div class="t" style="left:1140px;width:36.3px;text-align:right;top:225.50px;font-family:'Liberation Mono',monospace;font-size:10.3px;line-height:15px;color:#c0c0c0;">1</div>
<div class="t" style="left:1183px;top:225.50px;font-family:'Liberation Mono',monospace;font-size:11.667px;line-height:15px;-webkit-text-stroke:0.3px;"><span style="color:#00ff00;">import</span><span style="color:#dadada;"> maya.cmds as cmds</span></div>
<div class="t" style="left:1140px;width:36.3px;text-align:right;top:240.81px;font-family:'Liberation Mono',monospace;font-size:10.3px;line-height:15px;color:#c0c0c0;">2</div>
<div class="t" style="left:1140px;width:36.3px;text-align:right;top:256.11px;font-family:'Liberation Mono',monospace;font-size:10.3px;line-height:15px;color:#c0c0c0;">3</div>
<div class="t" style="left:1183px;top:256.11px;font-family:'Liberation Mono',monospace;font-size:11.667px;line-height:15px;-webkit-text-stroke:0.3px;"><span style="color:#f01818;"># select objects in scene</span></div>
<div class="t" style="left:1140px;width:36.3px;text-align:right;top:271.42px;font-family:'Liberation Mono',monospace;font-size:10.3px;line-height:15px;color:#c0c0c0;">4</div>
<div class="t" style="left:1183px;top:271.42px;font-family:'Liberation Mono',monospace;font-size:11.667px;line-height:15px;-webkit-text-stroke:0.3px;"><span style="color:#dadada;">cmds.</span><span style="color:#00e6e6;font-style:italic;">select</span><span style="color:#dadada;">(all = </span><span style="color:#00ff00;">True</span><span style="color:#dadada;">)</span></div>
<div class="t" style="left:1140px;width:36.3px;text-align:right;top:286.72px;font-family:'Liberation Mono',monospace;font-size:10.3px;line-height:15px;color:#c0c0c0;">5</div>
<div class="t" style="left:1140px;width:36.3px;text-align:right;top:302.03px;font-family:'Liberation Mono',monospace;font-size:10.3px;line-height:15px;color:#c0c0c0;">6</div>
<div class="t" style="left:1183px;top:302.03px;font-family:'Liberation Mono',monospace;font-size:11.667px;line-height:15px;-webkit-text-stroke:0.3px;"><span style="color:#f01818;"># create a reduction Pipeline using the SimplygonPipeline command</span></div>
<div class="t" style="left:1140px;width:36.3px;text-align:right;top:317.34px;font-family:'Liberation Mono',monospace;font-size:10.3px;line-height:15px;color:#c0c0c0;">7</div>
<div class="t" style="left:1183px;top:317.34px;font-family:'Liberation Mono',monospace;font-size:11.667px;line-height:15px;-webkit-text-stroke:0.3px;"><span style="color:#dadada;">reductionPipeline = cmds.</span><span style="color:#00e6e6;font-style:italic;">SimplygonPipeline</span><span style="color:#dadada;">(c = </span><span style="color:#ffff00;">'ReductionPipeline'</span><span style="color:#dadada;">)</span></div>
<div class="t" style="left:1140px;width:36.3px;text-align:right;top:332.64px;font-family:'Liberation Mono',monospace;font-size:10.3px;line-height:15px;color:#c0c0c0;">8</div>
<div class="t" style="left:1140px;width:36.3px;text-align:right;top:347.95px;font-family:'Liberation Mono',monospace;font-size:10.3px;line-height:15px;color:#c0c0c0;">9</div>
<div class="t" style="left:1183px;top:347.95px;font-family:'Liberation Mono',monospace;font-size:11.667px;line-height:15px;-webkit-text-stroke:0.3px;"><span style="color:#f01818;"># set the reduction Pipeline's triangle ratio to 50%</span></div>
<div class="t" style="left:1140px;width:36.3px;text-align:right;top:363.25px;font-family:'Liberation Mono',monospace;font-size:10.3px;line-height:15px;color:#c0c0c0;">10</div>
<div class="t" style="left:1183px;top:363.25px;font-family:'Liberation Mono',monospace;font-size:11.667px;line-height:15px;-webkit-text-stroke:0.3px;"><span style="color:#dadada;">bResult = cmds.</span><span style="color:#00e6e6;font-style:italic;">SimplygonPipeline</span><span style="color:#dadada;">(reductionPipeline,</span></div>
<div class="t" style="left:1140px;width:36.3px;text-align:right;top:378.56px;font-family:'Liberation Mono',monospace;font-size:10.3px;line-height:15px;color:#c0c0c0;">11</div>
<div class="t" style="left:1183px;top:378.56px;font-family:'Liberation Mono',monospace;font-size:11.667px;line-height:15px;-webkit-text-stroke:0.3px;"><span style="color:#dadada;">                           ss = </span><span style="color:#ffff00;">'ReductionProcessor/ReductionSettings/ReductionTargetTriangleRatio'</span><span style="color:#dadada;">,</span></div>
<div class="t" style="left:1140px;width:36.3px;text-align:right;top:393.87px;font-family:'Liberation Mono',monospace;font-size:10.3px;line-height:15px;color:#c0c0c0;">12</div>
<div class="t" style="left:1183px;top:393.87px;font-family:'Liberation Mono',monospace;font-size:11.667px;line-height:15px;-webkit-text-stroke:0.3px;"><span style="color:#dadada;">                           v = 0.5)</span></div>
<div class="t" style="left:1140px;width:36.3px;text-align:right;top:409.17px;font-family:'Liberation Mono',monospace;font-size:10.3px;line-height:15px;color:#c0c0c0;">13</div>
<div class="t" style="left:1140px;width:36.3px;text-align:right;top:424.48px;font-family:'Liberation Mono',monospace;font-size:10.3px;line-height:15px;color:#c0c0c0;">14</div>
<div class="t" style="left:1183px;top:424.48px;font-family:'Liberation Mono',monospace;font-size:11.667px;line-height:15px;-webkit-text-stroke:0.3px;"><span style="color:#f01818;"># execute Simplygon with the given Pipeline</span></div>
<div class="t" style="left:1140px;width:36.3px;text-align:right;top:439.78px;font-family:'Liberation Mono',monospace;font-size:10.3px;line-height:15px;color:#c0c0c0;">15</div>
<div class="t" style="left:1183px;top:439.78px;font-family:'Liberation Mono',monospace;font-size:11.667px;line-height:15px;-webkit-text-stroke:0.3px;"><span style="color:#dadada;">cmds.</span><span style="color:#00e6e6;font-style:italic;">Simplygon</span><span style="color:#dadada;">(so = reductionPipeline)</span></div>
<div class="t" style="left:1140px;width:36.3px;text-align:right;top:455.09px;font-family:'Liberation Mono',monospace;font-size:10.3px;line-height:15px;color:#c0c0c0;">16</div>
<div class="t" style="left:1140px;width:36.3px;text-align:right;top:470.40px;font-family:'Liberation Mono',monospace;font-size:10.3px;line-height:15px;color:#c0c0c0;">17</div>
<div class="t" style="left:1183px;top:470.40px;font-family:'Liberation Mono',monospace;font-size:11.667px;line-height:15px;-webkit-text-stroke:0.3px;"><span style="color:#f01818;"># clear all loaded / created Pipelines</span></div>
<div class="t" style="left:1140px;width:36.3px;text-align:right;top:485.70px;font-family:'Liberation Mono',monospace;font-size:10.3px;line-height:15px;color:#c0c0c0;">18</div>
<div class="t" style="left:1183px;top:485.70px;font-family:'Liberation Mono',monospace;font-size:11.667px;line-height:15px;-webkit-text-stroke:0.3px;"><span style="color:#dadada;">cmds.</span><span style="color:#00e6e6;font-style:italic;">SimplygonPipeline</span><span style="color:#dadada;">(cl = </span><span style="color:#00ff00;">True</span><span style="color:#dadada;">)</span></div>
<div style="left:1903.6px;top:150px;width:16.4px;height:751px;background:#3a3a3a;"></div>
<div style="left:1903.6px;top:152px;width:14.8px;height:153px;background:#3d3d3d;border:1px solid #303030;border-left:none;border-radius:0 3px 3px 0;"></div>
<div class="t" style="left:1909.6px;top:160px;width:0;height:0;"><div class="t" style="left:0;top:0;transform-origin:0 0;transform:rotate(90deg) translate(0,-8.5px);font-size:12px;line-height:17px;color:#a8a8a8;letter-spacing:-0.324px;">Channel Box / Layer Editor</div></div>
<div style="left:1903.6px;top:308.3px;width:14.8px;height:75.39999999999998px;background:#3d3d3d;border:1px solid #303030;border-left:none;border-radius:0 3px 3px 0;"></div>
<div class="t" style="left:1909.6px;top:320px;width:0;height:0;"><div class="t" style="left:0;top:0;transform-origin:0 0;transform:rotate(90deg) translate(0,-8.5px);font-size:12px;line-height:17px;color:#a8a8a8;letter-spacing:-0.448px;">Simplygon</div></div>
<div style="left:1903.6px;top:386.4px;width:14.8px;height:103.60000000000002px;background:#3d3d3d;border:1px solid #303030;border-left:none;border-radius:0 3px 3px 0;"></div>
<div class="t" style="left:1909.6px;top:397px;width:0;height:0;"><div class="t" style="left:0;top:0;transform-origin:0 0;transform:rotate(90deg) translate(0,-8.5px);font-size:12px;line-height:17px;color:#a8a8a8;letter-spacing:0.039px;">Attribute Editor</div></div>
<div style="left:1903.6px;top:493px;width:14.8px;height:107px;background:#3d3d3d;border:1px solid #303030;border-left:none;border-radius:0 3px 3px 0;"></div>
<div class="t" style="left:1909.6px;top:500px;width:0;height:0;"><div class="t" style="left:0;top:0;transform-origin:0 0;transform:rotate(90deg) translate(0,-8.5px);font-size:12px;line-height:17px;color:#a8a8a8;letter-spacing:0.073px;">Modeling Toolkit</div></div>
<div style="left:1903.6px;top:602.2px;width:14.8px;height:83.5px;background:#444444;border-radius:0 3px 3px 0;"></div>
<div class="t" style="left:1909.6px;top:613.6px;width:0;height:0;"><div class="t" style="left:0;top:0;transform-origin:0 0;transform:rotate(90deg) translate(0,-8.5px);font-size:12px;line-height:17px;color:#f0f0f0;letter-spacing:-0.212px;">Script Editor</div></div>
<div style="left:319.9px;top:173.5px;width:1px;height:15px;background:#8a8a8a;"></div>
<div style="left:318.9px;top:177px;width:3px;height:8px;background:#8a8a8a;border-radius:1px;"></div>
<svg style="left:328.5px;top:176.5px;" width="15" height="9" viewBox="0 0 15 9"><rect x="0.3" y="1.4" width="9.4" height="6.3" rx="0.5" fill="#c6c6c6"/><path d="M10.3 4.5L14.5 0.4V8.6z" fill="#c6c6c6"/></svg>
<svg style="left:347.5px;top:174.5px;" width="16" height="13" viewBox="0 0 16 13"><rect x="0.4" y="1.2" width="9" height="6.2" fill="#c6c6c6"/><path d="M10.6 4.3L14.8 0.4V8.2z" fill="#c6c6c6"/><path d="M1.4 8V6.3a2.1 2.1 0 0 1 4.2 0V8" fill="none" stroke="#3bb3c4" stroke-width="1.6"/><path d="M1.4 8V6.3a2.1 2.1 0 0 1 4.2 0V8" fill="none" stroke="#444444" stroke-width="0"/><rect x="0.1" y="7.2" width="6.8" height="5.2" fill="#3bb3c4" stroke="#444444" stroke-width="0.5"/><rect x="2.9" y="8.8" width="1.2" height="2" fill="#444444"/></svg>
<svg style="left:366.3px;top:174.5px;" width="16" height="14" viewBox="0 0 16 14"><rect x="0.4" y="1.2" width="9" height="6.2" fill="#c6c6c6"/><path d="M10.6 4.3L14.8 0.4V8.2z" fill="#c6c6c6"/><circle cx="4.6" cy="8.6" r="5.00" fill="#444"/><path d="M6.68 9.46L8.39 10.17M5.46 10.68L6.17 12.39M3.74 10.68L3.03 12.39M2.52 9.46L0.81 10.17M2.52 7.74L0.81 7.03M3.74 6.52L3.03 4.81M5.46 6.52L6.17 4.81M6.68 7.74L8.39 7.03" stroke="#3bb3c4" stroke-width="1.72"/><circle cx="4.6" cy="8.6" r="3.03" fill="#3bb3c4"/><circle cx="4.6" cy="8.6" r="1.48" fill="#444"/></svg>
<svg style="left:389.2px;top:175px;" width="8" height="11.5" viewBox="0 0 8 11.5"><path d="M0.3 0.3H7.3V10.8L3.8 8L0.3 10.8z" fill="#c6c6c6"/></svg>
<svg style="left:404.8px;top:174.5px;" width="15" height="14" viewBox="0 0 15 14"><path d="M5.2 9.4L10.6 0.6V10.6z" fill="#3bb3c4"/><path d="M3.2 9.6H14.2L11.4 13.4H0.4z" fill="#c6c6c6"/><path d="M3.6 9.6L0.8 13.4M2 11.4H12.8M6.4 9.6L4.6 13.4M10.6 9.6L8.8 13.4" stroke="#444444" stroke-width="0.7"/></svg>
<svg style="left:423.8px;top:174px;" width="15" height="14" viewBox="0 0 15 14"><path d="M5.6 0.4L8 3H6.3V6.6H5V3H3.2zM0.4 6.4L3 4V5.7H6.6V7H3V8.8z" fill="#c6c6c6"/><circle cx="10" cy="8.4" r="2.9" fill="none" stroke="#3bb3c4" stroke-width="1.3"/><path d="M7.8 10.6L5 13.4" stroke="#3bb3c4" stroke-width="1.7"/></svg>
<svg style="left:443.5px;top:174.5px;" width="13" height="14" viewBox="0 0 13 14"><path d="M3.4 7.4L9.4 0.8L12 3.2L5.8 9.6z" fill="#c6c6c6"/><path d="M2.6 8.2L5 10.4L0.6 12.2z" fill="#3bb3c4"/><path d="M6 13Q9 14 10.8 12.2Q11.6 10.6 10.2 9.8" fill="none" stroke="#c6c6c6" stroke-width="0.9"/></svg>
<div style="left:463.9px;top:173.5px;width:1px;height:15px;background:#8a8a8a;"></div>
<div style="left:462.9px;top:177px;width:3px;height:8px;background:#8a8a8a;border-radius:1px;"></div>
<div style="left:471px;top:172px;width:18.1px;height:18px;background:#5285a6;"></div>
<svg style="left:474.4px;top:175px;" width="11.4" height="11.8" viewBox="0 0 11.4 11.8"><rect x="0.5" y="0.5" width="10.4" height="10.8" fill="#3d3d3d" stroke="#e6e6e6" stroke-width="1"/><path d="M3.9 0.5V11.3M7.4 0.5V11.3M0.5 4.1H10.9M0.5 7.7H10.9" stroke="#e6e6e6" stroke-width="0.9"/></svg>
<svg style="left:491.6px;top:174.8px;" width="15" height="12.4" viewBox="0 0 15 12.4"><rect x="0.5" y="0.5" width="14" height="11.2" fill="none" stroke="#c6c6c6" stroke-width="1"/><path d="M1 2.8H14M1 9.4H14" stroke="#c6c6c6" stroke-width="0.8"/><path d="M1.6 1.7H14M1.6 10.6H14" stroke="#c6c6c6" stroke-width="0.9" stroke-dasharray="1.4 1.2"/></svg>
<svg style="left:510.3px;top:174.8px;" width="15.4" height="12.4" viewBox="0 0 15.4 12.4"><rect x="0.5" y="0.5" width="14.2" height="11.2" fill="none" stroke="#c6c6c6" stroke-width="1"/><circle cx="7.6" cy="6.2" r="2.7" fill="#3bb3c4"/></svg>
<div style="left:528px;top:172px;width:17.7px;height:18px;background:#383838;border:1px solid #333;"></div>
<svg style="left:531.5px;top:175.5px;" width="11" height="11" viewBox="0 0 11 11"><circle cx="5.5" cy="5.5" r="4" fill="#4c4c4c"/></svg>
<svg style="left:548.6px;top:174.8px;" width="15" height="12.4" viewBox="0 0 15 12.4"><rect x="0.5" y="0.5" width="14" height="11.2" fill="none" stroke="#c6c6c6" stroke-width="1"/><path d="M1.4 6.2H13.6" stroke="#3bb3c4" stroke-width="1.6" stroke-dasharray="1.3 0.9"/><path d="M7.5 1.2V11.2" stroke="#3bb3c4" stroke-width="1" stroke-dasharray="1.4 1.6"/></svg>
<svg style="left:567.4px;top:174.8px;" width="15" height="12.4" viewBox="0 0 15 12.4"><rect x="0.5" y="0.5" width="14" height="11.2" fill="none" stroke="#c6c6c6" stroke-width="1"/><path d="M2.6 9.8L6 5.2L9.2 9.8z" fill="#3bb3c4"/><circle cx="10.4" cy="3.9" r="2.1" fill="#3bb3c4"/></svg>
<svg style="left:586.1px;top:174.8px;" width="15.4" height="12.4" viewBox="0 0 15.4 12.4"><rect x="0.5" y="0.5" width="14.2" height="11.2" fill="none" stroke="#c6c6c6" stroke-width="1"/><path d="M3.6 2.6H11.6V4.6H10.8Q10.6 3.6 9.6 3.6H8.6V8.6Q8.6 9.2 9.6 9.3V10H5.6V9.3Q6.6 9.2 6.6 8.6V3.6H5.6Q4.6 3.6 4.4 4.6H3.6z" fill="#3bb3c4"/></svg>
<div style="left:607.9px;top:173.5px;width:1px;height:15px;background:#8a8a8a;"></div>
<div style="left:606.9px;top:177px;width:3px;height:8px;background:#8a8a8a;border-radius:1px;"></div>
<svg style="left:617.4px;top:173.8px;" width="14" height="14.4" viewBox="0 0 14 14.4"><path d="M6.8 0.6L13 3.4L6.8 6.4L0.6 3.4z" fill="none" stroke="#c6c6c6" stroke-width="0.9" stroke-linejoin="round"/><path d="M0.6 3.4L6.8 6.4V13.6L0.6 10.6z" fill="none" stroke="#c6c6c6" stroke-width="0.9" stroke-linejoin="round"/><path d="M13 3.4L6.8 6.4V13.6L13 10.6z" fill="none" stroke="#c6c6c6" stroke-width="0.9" stroke-linejoin="round"/><path d="M6.8 0.6V7.6L0.6 10.6M6.8 7.6L13 10.6" fill="none" stroke="#c6c6c6" stroke-width="0.5" opacity="0.7"/></svg>
<div style="left:634.1px;top:172px;width:18px;height:18px;background:#5285a6;"></div>
<svg style="left:636.3px;top:173.8px;" width="14" height="14.4" viewBox="0 0 14 14.4"><path d="M6.8 0.6L13 3.4L6.8 6.4L0.6 3.4z" fill="#8fe0ea" stroke="#3d3d3d" stroke-width="0.6" stroke-linejoin="round"/><path d="M0.6 3.4L6.8 6.4V13.6L0.6 10.6z" fill="#2f9fb0" stroke="#3d3d3d" stroke-width="0.6" stroke-linejoin="round"/><path d="M13 3.4L6.8 6.4V13.6L13 10.6z" fill="#3bb3c4" stroke="#3d3d3d" stroke-width="0.6" stroke-linejoin="round"/></svg>
<svg style="left:655.5px;top:174.4px;" width="13.4" height="13" viewBox="0 0 13.4 13"><defs><pattern id="ck1" width="3" height="3" patternUnits="userSpaceOnUse"><rect width="3" height="3" fill="#2a2a2a"/><rect width="1.5" height="1.5" fill="#e6e6e6"/><rect x="1.5" y="1.5" width="1.5" height="1.5" fill="#e6e6e6"/></pattern></defs><circle cx="6.6" cy="6.4" r="6.2" fill="url(#ck1)"/><path d="M6.6 0.20000000000000018A6.2 6.2 0 0 0 6.6 12.600000000000001z" fill="#c6c6c6"/></svg>
<svg style="left:674.5px;top:173.8px;" width="14" height="14.4" viewBox="0 0 14 14.4"><path d="M6.8 0.6L13 3.4L6.8 6.4L0.6 3.4z" fill="none" stroke="#c6c6c6" stroke-width="0.9" stroke-linejoin="round"/><path d="M0.6 3.4L6.8 6.4V13.6L0.6 10.6z" fill="none" stroke="#c6c6c6" stroke-width="0.9" stroke-linejoin="round"/><path d="M13 3.4L6.8 6.4V13.6L13 10.6z" fill="none" stroke="#c6c6c6" stroke-width="0.9" stroke-linejoin="round"/><path d="M6.8 2.4L10.6 4.1L6.8 5.9L3 4.1z" fill="#8fe0ea"/><path d="M2.4 5.8L5.8 7.4V11.4L2.4 9.8z" fill="#3bb3c4"/><path d="M11.2 5.8L7.8 7.4V11.4L11.2 9.8z" fill="#3bb3c4"/></svg>
<div style="left:690.8px;top:172px;width:18.3px;height:18px;background:#5285a6;"></div>
<svg style="left:693px;top:174.2px;" width="14" height="14" viewBox="0 0 14 14"><defs><pattern id="ck2" width="3" height="3" patternUnits="userSpaceOnUse"><rect width="3" height="3" fill="#2a2a2a"/><rect width="1.5" height="1.5" fill="#e6e6e6"/><rect x="1.5" y="1.5" width="1.5" height="1.5" fill="#e6e6e6"/></pattern></defs><circle cx="7" cy="6.8" r="6.7" fill="url(#ck2)"/></svg>
<svg style="left:712px;top:174px;" width="15" height="14.4" viewBox="0 0 15 14.4"><path d="M7.4 3a3.6 3.6 0 0 1 2.2 6.5V11.2H5.2V9.5A3.6 3.6 0 0 1 7.4 3z" fill="#c6c6c6"/><rect x="5.6" y="11.8" width="3.6" height="1" fill="#c6c6c6"/><circle cx="7.4" cy="13.6" r="0.7" fill="#c6c6c6"/><path d="M7.4 0.2v1.6M2.4 2l1.1 1.1M12.4 2l-1.1 1.1M0.4 6.8h1.6M12.8 6.8h1.6" stroke="#c6c6c6" stroke-width="1.1"/></svg>
<svg style="left:730px;top:174.6px;" width="16" height="13" viewBox="0 0 16 13"><path d="M1 9.6L7.6 6.4L9.6 9.4L3.4 12.4z" fill="#c6c6c6"/><path d="M2.6 8.8L5 12M4.4 8L6.8 11.2M6.2 7.2L8.4 10.2" stroke="#444444" stroke-width="0.7"/><circle cx="10.8" cy="5.2" r="4.8" fill="#3bb3c4"/></svg>
<div style="left:751.6px;top:173.5px;width:1px;height:15px;background:#8a8a8a;"></div>
<div style="left:750.6px;top:177px;width:3px;height:8px;background:#8a8a8a;border-radius:1px;"></div>
<svg style="left:761.2px;top:173.8px;" width="14.4" height="14.4" viewBox="0 0 14.4 14.4"><circle cx="6.8" cy="5.4" r="4.9" fill="#c6c6c6"/><path d="M0.4 10L4.4 8.6L13.8 11L9 13.8z" fill="none" stroke="#3bb3c4" stroke-width="0.7"/><path d="M2.2 10.2L10.6 12.8M4 9.4L12.4 12M5 12L7.6 8.8M7.6 13L10.4 9.6M9.6 13.4L12 10.4" stroke="#3bb3c4" stroke-width="0.6"/><path d="M3.4 8.6Q6.8 11.6 10.2 8.8" stroke="#777" stroke-width="1" fill="none"/></svg>
<svg style="left:779.6px;top:173.6px;" width="15" height="14.4" viewBox="0 0 15 14.4"><circle cx="4.8" cy="10" r="4" fill="#6a6a6a"/><circle cx="7.6" cy="7.4" r="4" fill="#8c8c8c"/><circle cx="10.4" cy="4.6" r="4.2" fill="#c6c6c6"/></svg>
<svg style="left:799.5px;top:174.4px;" width="13.4" height="13.4" viewBox="0 0 13.4 13.4"><path d="M6.6 1.6A5 5 0 0 0 6.6 11.6" fill="none" stroke="#3bb3c4" stroke-width="2"/><rect x="7.0" y="0.9" width="1.8" height="1.8" fill="#e0e0e0"/><rect x="8.9" y="1.9" width="1.8" height="1.8" fill="#e0e0e0"/><rect x="10.2" y="3.6" width="1.8" height="1.8" fill="#e0e0e0"/><rect x="10.7" y="5.7" width="1.8" height="1.8" fill="#e0e0e0"/><rect x="10.2" y="7.8" width="1.8" height="1.8" fill="#e0e0e0"/><rect x="8.9" y="9.5" width="1.8" height="1.8" fill="#e0e0e0"/><rect x="7.0" y="10.5" width="1.8" height="1.8" fill="#e0e0e0"/></svg>
<div style="left:816.2px;top:172px;width:17.6px;height:18px;background:#383838;border:1px solid #333;"></div>
<svg style="left:819px;top:174.6px;" width="12" height="13" viewBox="0 0 12 13"><rect x="0.6" y="0.6" width="6.4" height="6.4" fill="#3a5558"/><rect x="3.8" y="4.4" width="7.6" height="7.8" fill="#3f5f63"/></svg>
<div style="left:838.8px;top:173.5px;width:1px;height:15px;background:#8a8a8a;"></div>
<div style="left:837.8px;top:177px;width:3px;height:8px;background:#8a8a8a;border-radius:1px;"></div>
<svg style="left:848.2px;top:174px;" width="14" height="14" viewBox="0 0 14 14"><rect x="0.8" y="0.8" width="7.8" height="7.8" fill="none" stroke="#3bb3c4" stroke-width="1.3" stroke-dasharray="2.2 1.5"/><path d="M7.0 3.8L7.0 13.4L9.2 11.3L10.7 14.6L12.5 13.8L11.0 10.6L14.0 10.5z" fill="#c6c6c6" stroke="#3d3d3d" stroke-width="0.7" stroke-linejoin="round"/></svg>
<div style="left:868.9px;top:173.5px;width:1px;height:15px;background:#8a8a8a;"></div>
<div style="left:867.9px;top:177px;width:3px;height:8px;background:#8a8a8a;border-radius:1px;"></div>
<div style="left:877px;top:173.3px;width:15.7px;height:15.2px;background:#3d3d3d;"></div>
<div style="left:896px;top:173.3px;width:15.7px;height:15.2px;background:#3d3d3d;"></div>
<div style="left:915px;top:173.3px;width:15.7px;height:15.2px;background:#3d3d3d;"></div>
<svg style="left:878.6px;top:174.6px;" width="13" height="13" viewBox="0 0 13 13"><rect x="3.8" y="0.6" width="8.2" height="8" fill="#c6c6c6"/><rect x="0.6" y="3.8" width="8.2" height="8" fill="#c6c6c6"/><rect x="4.7" y="4.7" width="3.2" height="3" fill="none" stroke="#3d3d3d" stroke-width="0.9"/></svg>
<svg style="left:897.6px;top:174.6px;" width="13" height="13" viewBox="0 0 13 13"><path d="M5 0.9H11.8V7.6H9.4" fill="none" stroke="#c6c6c6" stroke-width="1"/><rect x="0.6" y="3.8" width="8.2" height="8" fill="#c6c6c6"/></svg>
<svg style="left:916.6px;top:174.6px;" width="13" height="13" viewBox="0 0 13 13"><rect x="0.8" y="0.8" width="11" height="11" fill="none" stroke="#c6c6c6" stroke-width="1"/><path d="M4.4 3.4L9.4 9.6" stroke="#c6c6c6" stroke-width="1.6"/><circle cx="4.6" cy="3.8" r="1.6" fill="#c6c6c6"/></svg>
<div style="left:936.9px;top:173.5px;width:1px;height:15px;background:#8a8a8a;"></div>
<div style="left:935.9px;top:177px;width:3px;height:8px;background:#8a8a8a;border-radius:1px;"></div>
<svg style="left:947.4px;top:174.5px;" width="13" height="13" viewBox="0 0 13 13"><circle cx="6.4" cy="6.4" r="6.1" fill="#c6c6c6"/><path d="M8.4 6.7L9.4 11.9M7.1 8.3L3.2 11.7M5.1 7.9L0.2 6.2M4.4 6.1L3.4 0.9M5.7 4.5L9.6 1.1M7.7 4.9L12.6 6.6" stroke="#444444" stroke-width="1.2"/></svg>
<svg style="left:1009.2px;top:174.8px;" width="11.4" height="12.6" viewBox="0 0 11.4 12.6"><path d="M3.6 0.4H11V12H3.6V9.6A3.6 3.6 0 0 0 3.6 2.8z" fill="#c6c6c6"/><path d="M3.4 2.6A3.7 3.7 0 0 0 3.4 10z" fill="#c6c6c6"/><path d="M5 2.6a3.7 3.7 0 0 1 0 7.4z" fill="#444444"/></svg>
<div style="left:1067px;top:172px;width:18px;height:18px;background:#5285a6;"></div>
<svg style="left:1069px;top:174px;" width="14" height="14" viewBox="0 0 14 14"><circle cx="7" cy="7" r="6.4" fill="#3bb3c4" stroke="#2d2d2d" stroke-width="0.8"/><text x="7" y="9.3" text-anchor="middle" font-family="Liberation Sans" font-size="6.2" font-weight="700" fill="#2d2d2d">ON</text></svg>
<svg style="left:1140.2px;top:175.3px;" width="18" height="16" viewBox="0 0 18 16"><rect x="4.4" y="0.3" width="10.2" height="7" fill="#3bb3c4"/><path d="M5.8 2.4H13.2M5.8 4.6H11.6" stroke="#2f8f9d" stroke-width="0.8"/><path d="M0.5 14.6V4.2H5L6.4 5.8H13V7.4H4L1.6 13.6z" fill="#c6c6c6"/><path d="M4.4 8.2H17L14.4 15.2H1.4z" fill="#c6c6c6"/></svg>
<svg style="left:1167px;top:175.3px;" width="19" height="18" viewBox="0 0 19 18"><rect x="4.4" y="0.3" width="10.2" height="7" fill="#3bb3c4"/><path d="M5.8 2.4H13.2M5.8 4.6H11.6" stroke="#2f8f9d" stroke-width="0.8"/><path d="M0.5 14.6V4.2H5L6.4 5.8H13V7.4H4L1.6 13.6z" fill="#c6c6c6"/><path d="M4.4 8.2H17L14.4 15.2H1.4z" fill="#c6c6c6"/><path d="M11.6 9.6L18.4 13.4L11.6 17.2z" fill="#3bb3c4" stroke="#444444" stroke-width="0.6"/></svg>
<svg style="left:1195.2px;top:176.4px;" width="15" height="15" viewBox="0 0 15 15"><path d="M0.4 0.4H12.4L14.4 2.4V14.4H0.4z" fill="#c6c6c6"/><rect x="3" y="0.4" width="8.4" height="5.6" fill="#444444"/><rect x="3.8" y="0.4" width="6.8" height="4.8" fill="#c6c6c6" opacity="0.35"/><rect x="3" y="8.8" width="8.8" height="4.6" fill="#444444"/><rect x="4.2" y="10" width="2.4" height="2.4" fill="#c6c6c6"/></svg>
<svg style="left:1221.4px;top:176px;" width="17" height="16" viewBox="0 0 17 16"><g transform="translate(6.4,0) scale(0.7)"><path d="M0.4 0.4H12.4L14.4 2.4V14.4H0.4z" fill="#c6c6c6"/><rect x="3" y="0.4" width="8.4" height="5.6" fill="#444444"/><rect x="3.8" y="0.4" width="6.8" height="4.8" fill="#c6c6c6" opacity="0.35"/><rect x="3" y="8.8" width="8.8" height="4.6" fill="#444444"/><rect x="4.2" y="10" width="2.4" height="2.4" fill="#c6c6c6"/></g><rect x="0.3" y="9.6" width="16.2" height="5.4" fill="#3bb3c4"/><path d="M2.2 12.4h1.6M5.2 12.4h1.6M8.2 12.4h1.6M11.2 12.4h1.6" stroke="#444444" stroke-width="1.5"/></svg>
<div style="left:1246.9px;top:174px;width:1.2px;height:22px;background:#2e2e2e;"></div>
<svg style="left:1255.3px;top:175px;" width="19" height="17" viewBox="0 0 19 17"><g transform="translate(0,2)"><rect x="0.6" y="0.6" width="14.8" height="6.2" fill="none" stroke="#c6c6c6" stroke-width="1.1"/><rect x="2.4" y="2.3" width="11.2" height="2.8000000000000007" fill="#3bb3c4"/><rect x="0.6" y="8.0" width="14.8" height="6.2" fill="none" stroke="#c6c6c6" stroke-width="0.9" stroke-dasharray="1.7 1.3"/></g><path d="M11.6 0.6l5.6 5.6M17.2 0.6l-5.6 5.6" stroke="#dcdcdc" stroke-width="1.9"/></svg>
<svg style="left:1282.4px;top:175px;" width="19" height="18" viewBox="0 0 19 18"><g transform="translate(0,2)"><rect x="0.6" y="0.6" width="14.8" height="6.2" fill="none" stroke="#c6c6c6" stroke-width="0.9" stroke-dasharray="1.7 1.3"/><rect x="0.6" y="8.0" width="14.8" height="6.2" fill="none" stroke="#c6c6c6" stroke-width="1.1"/><rect x="2.4" y="9.7" width="11.2" height="2.8000000000000007" fill="#3bb3c4"/></g><path d="M11.2 10.4l5.6 5.6M16.799999999999997 10.4l-5.6 5.6" stroke="#dcdcdc" stroke-width="1.9"/></svg>
<svg style="left:1309.5px;top:175px;" width="19" height="17" viewBox="0 0 19 17"><g transform="translate(0,2)"><rect x="0.6" y="0.6" width="14.8" height="6.2" fill="none" stroke="#c6c6c6" stroke-width="1.1"/><rect x="2.4" y="2.3" width="11.2" height="2.8000000000000007" fill="#3bb3c4"/><rect x="0.6" y="8.0" width="14.8" height="6.2" fill="none" stroke="#c6c6c6" stroke-width="1.1"/><rect x="2.4" y="9.7" width="11.2" height="2.8000000000000007" fill="#3bb3c4"/></g><path d="M10.6 4.4l5.6 5.6M16.2 4.4l-5.6 5.6" stroke="#dcdcdc" stroke-width="1.9"/></svg>
<div style="left:1335.0px;top:174px;width:1.2px;height:22px;background:#2e2e2e;"></div>
<svg style="left:1343.6px;top:176.6px;" width="17" height="15" viewBox="0 0 17 15"><rect x="0.6" y="0.6" width="14.8" height="6.2" fill="none" stroke="#c6c6c6" stroke-width="1.1"/><rect x="2.4" y="2.3" width="11.2" height="2.8000000000000007" fill="#3bb3c4"/><rect x="0.6" y="8.0" width="14.8" height="6.2" fill="none" stroke="#c6c6c6" stroke-width="0.9" stroke-dasharray="1.7 1.3"/></svg>
<svg style="left:1370.2px;top:176.6px;" width="17" height="15" viewBox="0 0 17 15"><rect x="0.6" y="0.6" width="14.8" height="6.2" fill="none" stroke="#c6c6c6" stroke-width="0.9" stroke-dasharray="1.7 1.3"/><rect x="0.6" y="8.0" width="14.8" height="6.2" fill="none" stroke="#c6c6c6" stroke-width="1.1"/><rect x="2.4" y="9.7" width="11.2" height="2.8000000000000007" fill="#3bb3c4"/></svg>
<svg style="left:1397.5px;top:176.6px;" width="17" height="15" viewBox="0 0 17 15"><rect x="0.6" y="0.6" width="14.8" height="6.2" fill="none" stroke="#c6c6c6" stroke-width="1.1"/><rect x="2.4" y="2.3" width="11.2" height="2.8000000000000007" fill="#3bb3c4"/><rect x="0.6" y="8.0" width="14.8" height="6.2" fill="none" stroke="#c6c6c6" stroke-width="1.1"/><rect x="2.4" y="9.7" width="11.2" height="2.8000000000000007" fill="#3bb3c4"/></svg>
<div style="left:1423.0px;top:174px;width:1.2px;height:22px;background:#2e2e2e;"></div>
<svg style="left:1431.6px;top:176px;" width="19" height="18" viewBox="0 0 19 18"><rect x="0.6" y="0.6" width="15.2" height="10.4" fill="none" stroke="#c6c6c6" stroke-width="1.1"/><rect x="2.2" y="2.2" width="12" height="7.2" fill="#3bb3c4"/><path d="M4 8L5.6 3.6M6 8L7.6 3.6M8.6 8h0.8M10.6 8h0.8M12.4 8h0.8" stroke="#333" stroke-width="0.7"/><path d="M11.4 9.8L18 13.4L11.4 17z" fill="#3bb3c4" stroke="#444444" stroke-width="0.6"/></svg>
<div style="left:1455.6px;top:173px;width:23.4px;height:22.7px;background:#5285a6;"></div>
<svg style="left:1457px;top:174.8px;" width="21" height="20" viewBox="0 0 21 20"><rect x="6.6" y="1.9000000000000001" width="12.8" height="3.4" fill="#3bb3c4" stroke="#2d2d2d" stroke-width="0.7"/><text x="2.6" y="5.800000000000001" text-anchor="middle" font-family="Liberation Sans" font-size="6.4" font-weight="700" fill="#f0f0f0" stroke="#2d2d2d" stroke-width="0.25">1</text><rect x="6.6" y="7.8999999999999995" width="12.8" height="3.4" fill="#3bb3c4" stroke="#2d2d2d" stroke-width="0.7"/><text x="2.6" y="11.8" text-anchor="middle" font-family="Liberation Sans" font-size="6.4" font-weight="700" fill="#f0f0f0" stroke="#2d2d2d" stroke-width="0.25">2</text><rect x="6.6" y="13.9" width="12.8" height="3.4" fill="#3bb3c4" stroke="#2d2d2d" stroke-width="0.7"/><text x="2.6" y="17.8" text-anchor="middle" font-family="Liberation Sans" font-size="6.4" font-weight="700" fill="#f0f0f0" stroke="#2d2d2d" stroke-width="0.25">3</text></svg>
<div style="left:1484.2px;top:174px;width:1.2px;height:22px;background:#2e2e2e;"></div>
<svg style="left:1494px;top:175.6px;" width="15" height="18" viewBox="0 0 15 18"><path d="M7 0.4L14.4 4.6L7 8.8z" fill="#3bb3c4"/><path d="M0.4 8L7.8 12.2L0.4 16.4z" fill="#3bb3c4"/></svg>
<svg style="left:1522px;top:176px;" width="13" height="16" viewBox="0 0 13 16"><path d="M0.4 0.4L12.2 7.8L0.4 15.4z" fill="#3bb3c4"/></svg>
<div style="left:1545.2px;top:174px;width:1.2px;height:22px;background:#2e2e2e;"></div>
<svg style="left:1678.6px;top:175px;" width="17" height="17" viewBox="0 0 17 17"><circle cx="6" cy="7.6" r="4.6" fill="none" stroke="#3bb3c4" stroke-width="1.5"/><path d="M9.2 11.2L13.2 15.6" stroke="#3bb3c4" stroke-width="2"/><path d="M12.6 0.4V4.4M10 3.4h5.2L12.6 6.6z" fill="#c6c6c6" stroke="#c6c6c6" stroke-width="1.3"/></svg>
<svg style="left:1705.8px;top:175px;" width="17" height="17" viewBox="0 0 17 17"><circle cx="6" cy="7.6" r="4.6" fill="none" stroke="#3bb3c4" stroke-width="1.5"/><path d="M9.2 11.2L13.2 15.6" stroke="#3bb3c4" stroke-width="2"/><path d="M12.6 7V3M10 3.6h5.2L12.6 0.4z" fill="#c6c6c6" stroke="#c6c6c6" stroke-width="1.3"/></svg>
<div style="left:1729.8px;top:174px;width:1.2px;height:22px;background:#2e2e2e;"></div>
<svg style="left:1772.6px;top:176px;" width="17" height="15" viewBox="0 0 17 15"><path d="M1 0.4V6.4H5" fill="none" stroke="#c6c6c6" stroke-width="1.5"/><path d="M4.4 3.6L8 6.4L4.4 9.2z" fill="#c6c6c6"/><path d="M9.4 1.4H16.4M9.4 7.4H16.4M7.4 13.4H16.4" stroke="#3bb3c4" stroke-width="1.5"/></svg>
<div style="left:0px;top:901px;width:1920px;height:2.5px;background:#3b3b3b;"></div>
<div style="left:0px;top:942.5px;width:1920px;height:2.5px;background:#3b3b3b;"></div>
<div style="left:0px;top:979px;width:1920px;height:2.5px;background:#3b3b3b;"></div>
<div style="left:0px;top:1013px;width:1920px;height:2.5px;background:#3b3b3b;"></div>
<div style="left:2.5px;top:905px;width:5px;height:36px;background-image:radial-gradient(circle,#787878 0.6px,transparent 0.95px);background-size:3px 3px;"></div>
<div style="left:2.5px;top:947px;width:5px;height:30px;background-image:radial-gradient(circle,#787878 0.6px,transparent 0.95px);background-size:3px 3px;"></div>
<div style="left:2.5px;top:984px;width:5px;height:27px;background-image:radial-gradient(circle,#787878 0.6px,transparent 0.95px);background-size:3px 3px;"></div>
<div style="left:2.5px;top:1017px;width:5px;height:22px;background-image:radial-gradient(circle,#787878 0.6px,transparent 0.95px);background-size:3px 3px;"></div>
<div style="left:13px;top:907px;width:1612px;height:32px;background:#2b2b2b;"></div>
<div style="left:22px;top:907px;width:11px;height:32px;background:#5a5a5a;"></div>
<div style="left:13px;top:935.8px;width:1612px;height:3.2px;background:#343434;"></div>
<div class="t" style="left:24.3px;top:919.0px;font-size:12px;line-height:17px;color:#f0f0f0;">1</div>
<div style="left:73px;top:920px;width:2px;height:15px;background:#9c9c9c;"></div>
<div class="t" style="left:76.35px;top:905.0px;font-size:11px;line-height:15px;color:#8e8e8e;">5</div>
<div style="left:139px;top:920px;width:2px;height:15px;background:#9c9c9c;"></div>
<div class="t" style="left:142.88px;top:905.0px;font-size:11px;line-height:15px;color:#8e8e8e;letter-spacing:-0.268px;">10</div>
<div style="left:206px;top:920px;width:2px;height:15px;background:#9c9c9c;"></div>
<div class="t" style="left:209.42px;top:905.0px;font-size:11px;line-height:15px;color:#8e8e8e;letter-spacing:-0.268px;">15</div>
<div style="left:272px;top:920px;width:2px;height:15px;background:#9c9c9c;"></div>
<div class="t" style="left:275.95px;top:905.0px;font-size:11px;line-height:15px;color:#8e8e8e;letter-spacing:-0.268px;">20</div>
<div style="left:339px;top:920px;width:2px;height:15px;background:#9c9c9c;"></div>
<div class="t" style="left:342.48px;top:905.0px;font-size:11px;line-height:15px;color:#8e8e8e;letter-spacing:-0.268px;">25</div>
<div style="left:405px;top:920px;width:2px;height:15px;background:#9c9c9c;"></div>
<div class="t" style="left:409.01px;top:905.0px;font-size:11px;line-height:15px;color:#8e8e8e;letter-spacing:-0.268px;">30</div>
<div style="left:472px;top:920px;width:2px;height:15px;background:#9c9c9c;"></div>
<div class="t" style="left:475.55px;top:905.0px;font-size:11px;line-height:15px;color:#8e8e8e;letter-spacing:-0.268px;">35</div>
<div style="left:538px;top:920px;width:2px;height:15px;background:#9c9c9c;"></div>
<div class="t" style="left:542.08px;top:905.0px;font-size:11px;line-height:15px;color:#8e8e8e;letter-spacing:-0.268px;">40</div>
<div style="left:605px;top:920px;width:2px;height:15px;background:#9c9c9c;"></div>
<div class="t" style="left:608.61px;top:905.0px;font-size:11px;line-height:15px;color:#8e8e8e;letter-spacing:-0.268px;">45</div>
<div style="left:672px;top:920px;width:2px;height:15px;background:#9c9c9c;"></div>
<div class="t" style="left:675.14px;top:905.0px;font-size:11px;line-height:15px;color:#8e8e8e;letter-spacing:-0.268px;">50</div>
<div style="left:738px;top:920px;width:2px;height:15px;background:#9c9c9c;"></div>
<div class="t" style="left:741.68px;top:905.0px;font-size:11px;line-height:15px;color:#8e8e8e;letter-spacing:-0.268px;">55</div>
<div style="left:805px;top:920px;width:2px;height:15px;background:#9c9c9c;"></div>
<div class="t" style="left:808.21px;top:905.0px;font-size:11px;line-height:15px;color:#8e8e8e;letter-spacing:-0.268px;">60</div>
<div style="left:871px;top:920px;width:2px;height:15px;background:#9c9c9c;"></div>
<div class="t" style="left:874.74px;top:905.0px;font-size:11px;line-height:15px;color:#8e8e8e;letter-spacing:-0.268px;">65</div>
<div style="left:938px;top:920px;width:2px;height:15px;background:#9c9c9c;"></div>
<div class="t" style="left:941.27px;top:905.0px;font-size:11px;line-height:15px;color:#8e8e8e;letter-spacing:-0.268px;">70</div>
<div style="left:1004px;top:920px;width:2px;height:15px;background:#9c9c9c;"></div>
<div class="t" style="left:1007.81px;top:905.0px;font-size:11px;line-height:15px;color:#8e8e8e;letter-spacing:-0.268px;">75</div>
<div style="left:1071px;top:920px;width:2px;height:15px;background:#9c9c9c;"></div>
<div class="t" style="left:1074.34px;top:905.0px;font-size:11px;line-height:15px;color:#8e8e8e;letter-spacing:-0.268px;">80</div>
<div style="left:1137px;top:920px;width:2px;height:15px;background:#9c9c9c;"></div>
<div class="t" style="left:1140.87px;top:905.0px;font-size:11px;line-height:15px;color:#8e8e8e;letter-spacing:-0.268px;">85</div>
<div style="left:1204px;top:920px;width:2px;height:15px;background:#9c9c9c;"></div>
<div class="t" style="left:1207.4px;top:905.0px;font-size:11px;line-height:15px;color:#8e8e8e;letter-spacing:-0.268px;">90</div>
<div style="left:1270px;top:920px;width:2px;height:15px;background:#9c9c9c;"></div>
<div class="t" style="left:1273.94px;top:905.0px;font-size:11px;line-height:15px;color:#8e8e8e;letter-spacing:-0.268px;">95</div>
<div style="left:1337px;top:920px;width:2px;height:15px;background:#9c9c9c;"></div>
<div class="t" style="left:1340.47px;top:905.0px;font-size:11px;line-height:15px;color:#8e8e8e;letter-spacing:-0.268px;">100</div>
<div style="left:1403px;top:920px;width:2px;height:15px;background:#9c9c9c;"></div>
<div class="t" style="left:1407.0px;top:905.0px;font-size:11px;line-height:15px;color:#8e8e8e;letter-spacing:-0.268px;">105</div>
<div style="left:1470px;top:920px;width:2px;height:15px;background:#9c9c9c;"></div>
<div class="t" style="left:1473.53px;top:905.0px;font-size:11px;line-height:15px;color:#8e8e8e;letter-spacing:0.004px;">110</div>
<div style="left:1536px;top:920px;width:2px;height:15px;background:#9c9c9c;"></div>
<div class="t" style="left:1540.07px;top:905.0px;font-size:11px;line-height:15px;color:#8e8e8e;letter-spacing:0.004px;">115</div>
<div style="left:1603px;top:920px;width:2px;height:15px;background:#9c9c9c;"></div>
<div class="t" style="left:1606.6px;top:905.0px;font-size:11px;line-height:15px;color:#8e8e8e;letter-spacing:-0.268px;">120</div>
<div style="left:1632px;top:913px;width:88px;height:17.6px;background:#2b2b2b;border-radius:3px;"></div>
<div class="t" style="left:1637.5px;top:915.1px;font-size:12px;line-height:17px;color:#f0f0f0;">1</div>
<svg style="left:1729px;top:913.5px;" width="19" height="15" viewBox="0 0 19 15"><rect x="1" y="0.7000000000000002" width="1.7" height="13.6" fill="#c8c8c8"/><path d="M3.2 7.5L10 0.5V14.5z" fill="#c8c8c8"/><path d="M10 7.5L17.2 0.5V14.5z" fill="#c8c8c8"/></svg>
<svg style="left:1754px;top:913.5px;" width="14" height="15" viewBox="0 0 14 15"><rect x="0.8" y="0.7000000000000002" width="1.9" height="13.6" fill="#c8c8c8"/><path d="M3.5 7.5L13 0.5V14.5z" fill="#c8c8c8"/></svg>
<svg style="left:1775px;top:913.5px;" width="16" height="15" viewBox="0 0 16 15"><rect x="1.8" y="1.5" width="2.6" height="12" fill="#e58b47"/><rect x="2.8" y="0" width="0.7" height="15" fill="#c8c8c8" opacity="0.7"/><path d="M5 7.5L15 0.5V14.5z" fill="#c8c8c8"/></svg>
<svg style="left:1800px;top:913.5px;" width="14" height="15" viewBox="0 0 14 15"><path d="M0.6 7.5L13 0.09999999999999964V14.9z" fill="#c8c8c8"/></svg>
<svg style="left:1824px;top:913.5px;" width="14" height="15" viewBox="0 0 14 15"><path d="M13.4 7.5L0.8 0.09999999999999964V14.9z" fill="#c8c8c8"/></svg>
<svg style="left:1846px;top:913.5px;" width="16" height="15" viewBox="0 0 16 15"><path d="M11 7.5L1 0.5V14.5z" fill="#c8c8c8"/><rect x="11.6" y="1.5" width="2.6" height="12" fill="#e58b47"/><rect x="12.6" y="0" width="0.7" height="15" fill="#c8c8c8" opacity="0.7"/></svg>
<svg style="left:1869px;top:913.5px;" width="14" height="15" viewBox="0 0 14 15"><path d="M10.5 7.5L1 0.5V14.5z" fill="#c8c8c8"/><rect x="11.3" y="0.7000000000000002" width="1.9" height="13.6" fill="#c8c8c8"/></svg>
<svg style="left:1890px;top:913.5px;" width="19" height="15" viewBox="0 0 19 15"><path d="M8.2 7.5L1 0.5V14.5z" fill="#c8c8c8"/><path d="M15.2 7.5L8.2 0.5V14.5z" fill="#c8c8c8"/><rect x="16" y="0.7000000000000002" width="1.7" height="13.6" fill="#c8c8c8"/></svg>
<div style="left:14px;top:950px;width:88px;height:24.5px;background:#2b2b2b;border-radius:3px;"></div>
<div class="t" style="left:19.5px;top:955.3px;font-size:12px;line-height:17px;color:#e6e6e6;">1</div>
<div style="left:110px;top:950px;width:88px;height:24.5px;background:#2b2b2b;border-radius:3px;"></div>
<div class="t" style="left:115.5px;top:955.3px;font-size:12px;line-height:17px;color:#e6e6e6;">1</div>
<div style="left:205px;top:950px;width:993px;height:24.5px;background:#3a3a3a;"></div>
<div style="left:210px;top:952.3px;width:598.5px;height:19.8px;background:#5d5d5d;border-radius:3px;"></div>
<div style="left:214px;top:955px;width:15px;height:14px;background:#9a9a9a;border-radius:3px;"></div>
<div class="t" style="left:232.5px;top:955.3px;font-size:12px;line-height:17px;color:#dcdcdc;">1</div>
<div class="t" style="left:768px;top:955.3px;font-size:12px;line-height:17px;color:#dcdcdc;letter-spacing:-0.674px;">120</div>
<div style="left:791.5px;top:955px;width:15px;height:14px;background:#9a9a9a;border-radius:3px;"></div>
<div style="left:1205px;top:950px;width:88px;height:24.5px;background:#2b2b2b;border-radius:3px;"></div>
<div class="t" style="left:1210.3px;top:955.3px;font-size:12px;line-height:17px;color:#e6e6e6;letter-spacing:-0.674px;">120</div>
<div style="left:1300.7px;top:950px;width:88px;height:24.5px;background:#2b2b2b;border-radius:3px;"></div>
<div class="t" style="left:1306px;top:955.3px;font-size:12px;line-height:17px;color:#e6e6e6;letter-spacing:-0.674px;">200</div>
<div style="left:1394.3px;top:952px;width:0.9px;height:20px;background:#8c8c8c;"></div>
<div style="left:1393.3px;top:957px;width:2.9px;height:10px;background:#8c8c8c;border-radius:1px;"></div>
<svg style="left:1409px;top:957px;" width="11" height="8" viewBox="0 0 11 8"><path d="M0.8 1.2h9.4L5.5 6.6z" fill="none" stroke="#a8a8a8" stroke-width="1"/></svg>
<div style="left:1426px;top:950.3px;width:102px;height:23.7px;background:#444444;border:1px solid #555;border-radius:3px;"></div>
<div class="t" style="left:1432.3px;top:955.5px;font-size:12px;line-height:17px;color:#dcdcdc;letter-spacing:-0.457px;">No Character Set</div>
<svg style="left:1538px;top:957px;" width="11" height="8" viewBox="0 0 11 8"><path d="M0.8 1.2h9.4L5.5 6.6z" fill="none" stroke="#a8a8a8" stroke-width="1"/></svg>
<div style="left:1555.3px;top:950.3px;width:101px;height:23.7px;background:#444444;border:1px solid #555;border-radius:3px;"></div>
<div class="t" style="left:1561.5px;top:955.5px;font-size:12px;line-height:17px;color:#dcdcdc;letter-spacing:-0.477px;">No Anim Layer</div>
<div style="left:1666.85px;top:952px;width:0.9px;height:20px;background:#8c8c8c;"></div>
<div style="left:1665.85px;top:957px;width:2.9px;height:10px;background:#8c8c8c;border-radius:1px;"></div>
<div style="left:1681px;top:951.8px;width:95px;height:19.5px;background:#5b5b5b;border-radius:2px;"></div>
<div style="left:1755.4px;top:951.8px;width:20.6px;height:19.5px;background:#616161;border-radius:0 2px 2px 0;border-left:1px solid #565656;"></div>
<div class="t" style="left:1684.1px;top:955.1px;font-size:12px;line-height:17px;color:#dcdcdc;letter-spacing:-0.348px;">24 fps</div>
<svg style="left:1761px;top:959px;" width="10" height="6" viewBox="0 0 10 6"><path d="M0.5 0.5h9L5 5.5z" fill="#c8c8c8"/></svg>
<svg style="left:1789px;top:953px;" width="19" height="16" viewBox="0 0 19 16"><g fill="none" stroke="#c8c8c8" stroke-width="1.7"><path d="M15.5 3.7H6.3a3.6 3.6 0 0 0 0 7.2h0.6"/><path d="M3.5 12.3h9.2a3.6 3.6 0 0 0 0-7.2"/></g><path d="M14 0.5l3.8 3.2L14 6.9z" fill="#c8c8c8"/><path d="M5 9.1l-3.8 3.2L5 15.5z" fill="#c8c8c8"/></svg>
<div style="left:1816px;top:951px;width:23px;height:23px;background:#5285a6;"></div>
<svg style="left:1818px;top:953px;" width="20" height="19" viewBox="0 0 20 19"><rect x="1" y="3.5" width="16" height="12.5" fill="#e58b47"/><rect x="2.5" y="7" width="3.6" height="5" fill="#ddd"/><rect x="7.2" y="7" width="3.6" height="5" fill="#ddd"/><rect x="11.9" y="7" width="3.6" height="5" fill="#ddd"/><path d="M12 0.5l6 3.7l-6 3.7z" fill="#c8c8c8"/><path d="M1 5.2h16M1 14.2h16" stroke="#5285a6" stroke-width="0.7" stroke-dasharray="1.5 1.5"/></svg>
<div style="left:1848.8999999999999px;top:952px;width:0.9px;height:20px;background:#8c8c8c;"></div>
<div style="left:1847.8999999999999px;top:957px;width:2.9px;height:10px;background:#8c8c8c;border-radius:1px;"></div>
<svg style="left:1862px;top:953.5px;" width="18" height="18" viewBox="0 0 18 18"><g fill="none" stroke="#c8c8c8" stroke-width="1.4"><path d="M2.2 5.5A7.6 7.6 0 0 1 16.6 9"/><path d="M15.8 12.5A7.6 7.6 0 0 1 1.4 9"/></g><path d="M1 2v4.5h4.5zM17 16v-4.5h-4.5z" fill="#c8c8c8"/><rect x="8" y="3.5" width="2.2" height="8.5" fill="#e58b47"/><path d="M3.5 9.2h3.3M11.5 9.2h3.3" stroke="#c8c8c8" stroke-width="1.2"/></svg>
<svg style="left:1890px;top:953px;" width="19" height="19" viewBox="0 0 19 19"><circle cx="4.6" cy="4.4" r="2.7" fill="none" stroke="#c8c8c8" stroke-width="1.4"/><g stroke="#c8c8c8" stroke-width="1.4"><path d="M4.6 0v1.3M4.6 7.5v1.3M0.2 4.4h1.3M7.7 4.4H9M1.5 1.3l0.9 0.9M6.8 6.6l0.9 0.9M1.5 7.5l0.9-0.9M6.8 2.2l0.9-0.9"/></g><circle cx="14.2" cy="5.2" r="1.9" fill="#e58b47"/><path d="M9.5 9.5l3.6-1.6l3 1.2l1.5 2.6M12.8 8.3l-0.8 4.2l3 1.8l-0.3 4M12 12.5l-2 2.8l-3 0.3" fill="none" stroke="#e58b47" stroke-width="2" stroke-linejoin="round" stroke-linecap="round"/></svg>
<div class="t" style="left:24px;top:989.5px;font-size:12px;line-height:17px;color:#e6e6e6;letter-spacing:-1.125px;">MEL</div>
<div style="left:59px;top:987px;width:664px;height:21.7px;background:#2b2b2b;border-radius:3px;"></div>
<svg style="left:725px;top:993px;" width="3" height="10" viewBox="0 0 3 10"><circle cx="1.5" cy="1.5" r="0.6" fill="#888"/><circle cx="1.5" cy="4.5" r="0.6" fill="#888"/><circle cx="1.5" cy="7.5" r="0.6" fill="#888"/></svg>
<div style="left:730.7px;top:986.3px;width:1156.5px;height:23.5px;background:#2b2b2b;border-radius:3px;"></div>
<svg style="left:1892.5px;top:988px;" width="19" height="19" viewBox="0 0 19 19"><rect x="0.3" y="0.6" width="18.4" height="2.6" fill="#c8c8c8"/><rect x="0.3" y="4" width="18.4" height="14.6" fill="#c8c8c8"/><path d="M1.5 2h1M3.5 2h1M5.5 2h1" stroke="#444" stroke-width="0.8"/><text x="9.5" y="15.3" font-family="Liberation Sans" font-size="10.5" font-weight="700" text-anchor="middle" fill="#444">{;}</text></svg>
<div class="t" style="left:24px;top:1020.9000000000001px;font-size:10.6px;line-height:15px;color:#d0d0d0;letter-spacing:-0.404px;">Select Tool: select an object</div>
<svg style="left:46.5px;top:108px;" width="26" height="26" viewBox="0 0 26 26"><circle cx="12.6" cy="13.2" r="12.4" fill="#e0964f"/><g stroke="#444444" stroke-width="1.25" fill="none"><path d="M4 5.5Q12.6 11.5 21.2 5.5"/><path d="M0.9 11Q12.6 17.6 24.3 11"/><path d="M0.6 16.5Q12.6 24 24.6 16.5"/><path d="M6.3 1.6L12.6 3.8Q18 9 19.9 13.2Q21 18.5 17.3 24.5"/><path d="M18.9 1.6L12.6 3.8Q7.2 9 5.3 13.2Q4.2 18.5 7.9 24.5"/></g></svg>
<svg style="left:81px;top:107px;" width="25.5" height="28" viewBox="0 0 25.5 28"><path d="M12.5 0.5L24.6 7.1V21L12.5 27.4L0.7 21V7.1z" fill="#e0964f"/><g stroke="#444444" stroke-width="1.25" fill="none"><path d="M0.7 7.1L12.5 13.7L24.6 7.1M12.5 13.7V27.4"/><path d="M6.6 3.8L18.5 10.4V24.2M18.5 3.8L6.6 10.4V24.2"/><path d="M0.7 14L12.5 20.6L24.6 14"/></g></svg>
<svg style="left:118px;top:108px;" width="22" height="26" viewBox="0 0 22 26"><path d="M0.7 6A10.3 5.3 0 0 1 21.3 6V20A10.3 5.4 0 0 1 0.7 20z" fill="#e0964f"/><g stroke="#444444" stroke-width="1.25" fill="none"><path d="M0.7 6.4H21.3"/><path d="M0.7 6.4Q1 12.7 11 12.7Q21 12.7 21.3 6.4"/><path d="M11 6.2L7.8 1M11 6.2L14.4 1M11 6.2L6.5 12.1V25M11 6.2L15.6 12.1V25"/><path d="M0.7 14.6Q1.5 18.3 11 18.3Q20.5 18.3 21.3 14.6"/></g></svg>
<svg style="left:153px;top:108px;" width="21" height="26" viewBox="0 0 21 26"><path d="M10.4 0.5L20.3 20.4a10 4.6 0 0 1 -19.8 0z" fill="#e0964f"/><g stroke="#444444" stroke-width="1" fill="none"><path d="M10.4 0.5V25"/><path d="M5.3 11.4Q10.4 13.8 15.5 11.4"/></g></svg>
<svg style="left:187px;top:107px;" width="24" height="28" viewBox="0 0 24 28"><ellipse cx="12" cy="13.8" rx="9.6" ry="12.6" transform="rotate(-17 12 13.8)" fill="#e0964f"/><ellipse cx="12" cy="13.8" rx="2.2" ry="6.8" transform="rotate(-17 12 13.8)" fill="#444444"/><g stroke="#444444" stroke-width="1" fill="none"><path d="M9.4 7.5L4.5 3.5M14.5 20L17 26M13.6 9.8Q17 9.5 20.5 6M10.2 18.5Q6 18.5 3 21.5M15.3 16Q19 17.2 22.6 16"/></g></svg>
<svg style="left:221px;top:108px;" width="26" height="26" viewBox="0 0 26 26"><path d="M12.9 0.3L25.5 12.8L12.9 25.3L0.3 12.8z" fill="#e0964f"/><g stroke="#444444" stroke-width="1" fill="none"><path d="M6.6 6.5L19.2 19M19.2 6.5L6.6 19"/></g></svg>
<svg style="left:257px;top:112.5px;" width="24" height="17" viewBox="0 0 24 17"><ellipse cx="12" cy="8.3" rx="11.4" ry="7.7" fill="#e0964f"/><g stroke="#444444" stroke-width="1" fill="none"><path d="M5.5 2L18.5 14.6M18.5 2L5.5 14.6"/><path d="M1.5 8.3H22.5" stroke="#b5793f" stroke-width="1.3"/></g></svg>
<div style="left:292px;top:104px;width:2px;height:35px;background:#9a9a9a;"></div>
<svg style="left:304.5px;top:107.5px;" width="27" height="28" viewBox="0 0 27 28"><path d="M11.8 0.3L23.5 6.8V20L11.8 26.4L0.3 20V6.8z" fill="#e0964f"/><g stroke="#444444" stroke-width="1" fill="none" stroke-width="0.9"><path d="M11.8 0.3L3.5 9.5H20.2zM3.5 9.5L11.8 22.5L20.2 9.5M0.3 6.8L3.5 9.5L0.3 20L11.8 22.5L23.5 20L20.2 9.5L23.5 6.8M11.8 22.5V26.4"/></g><path d="M19.2 27.5h6.6v-6.6z" fill="#c6c6c6" stroke="#444444" stroke-width="0.6"/></svg>
<div style="left:339px;top:104px;width:2px;height:35px;background:#9a9a9a;"></div>
<svg style="left:349.5px;top:107.5px;" width="29" height="28" viewBox="0 0 29 28"><path d="M13.3 0.3Q14.8 10.5 26.6 13.3Q14.8 16 13.3 26.4Q11.8 16 0.2 13.3Q11.8 10.5 13.3 0.3z" fill="#e0964f"/><path d="M21.4 27.5h6.6v-6.6z" fill="#c6c6c6" stroke="#444444" stroke-width="0.6"/></svg>
<svg style="left:387px;top:109.5px;" width="22" height="24" viewBox="0 0 22 24"><path d="M0.8 0.8H20.6L20.8 6.8H19.6Q19 2.6 15 2.4H12.6V19.6Q12.7 21.4 15.6 21.5V22.7H5.8V21.5Q8.7 21.4 8.8 19.6V2.4H6.4Q2.4 2.6 1.8 6.8H0.6z" fill="#e0964f"/></svg>
<svg style="left:421.5px;top:110px;" width="23" height="22" viewBox="0 0 23 22"><rect x="0.2" y="0.2" width="22.6" height="21.8" fill="#e0964f"/><text x="11.5" y="14.2" text-anchor="middle" font-family="Liberation Sans" font-weight="700" font-size="12" fill="#444444">svg</text></svg>
<div style="left:456px;top:104px;width:2px;height:35px;background:#9a9a9a;"></div>
<svg style="left:467.5px;top:106.5px;" width="25" height="26" viewBox="0 0 25 26"><path d="M12.3 0.5V8.5M1 24.5L6.8 20M23.8 24.5L18 20" stroke="#3bb3c4" stroke-width="1.7" fill="none"/><circle cx="12.3" cy="16.5" r="7.6" fill="none" stroke="#c6c6c6" stroke-width="1.1"/><circle cx="12.3" cy="16.3" r="3" fill="#c6c6c6"/><path d="M7.6 18.5l1.5 1.2M17 18.5l-1.5 1.2" stroke="#3bb3c4" stroke-width="1.6"/></svg>
<svg style="left:502.5px;top:108px;" width="27" height="26" viewBox="0 0 27 26"><circle cx="7" cy="7" r="6.6" fill="#3bb3c4"/><path d="M7.3 2.8V7.6H11" stroke="#e8e8e8" stroke-width="1.2" fill="none"/><path d="M13.5 10.5H22.5M6 15.6H8.5M10.5 15.6H22.5M6 20.6H8.5M10.5 20.6H15.5" stroke="#3bb3c4" stroke-width="1.1"/><path d="M17.5 17.5l7.4 7.4M24.9 17.5l-7.4 7.4" stroke="#d8d8d8" stroke-width="2.2"/></svg>
<svg style="left:535px;top:106.5px;" width="30" height="28" viewBox="0 0 30 28"><path d="M14.8 8.6L14.8 18.2M14.8 12.0L16.8 13.7M14.8 12.0L12.8 13.7M14.8 15.0L16.8 16.7M14.8 15.0L12.8 16.7M14.8 8.6L6.5 13.4M11.9 10.3L11.4 12.9M11.9 10.3L9.4 9.4M9.3 11.8L8.8 14.4M9.3 11.8L6.8 10.9M14.8 8.6L6.5 3.8M11.9 6.9L9.4 7.8M11.9 6.9L11.4 4.3M9.3 5.4L6.8 6.3M9.3 5.4L8.8 2.8M14.8 8.6L14.8 -1.0M14.8 5.2L12.8 3.5M14.8 5.2L16.8 3.5M14.8 2.2L12.8 0.5M14.8 2.2L16.8 0.5M14.8 8.6L23.1 3.8M17.7 6.9L18.2 4.3M17.7 6.9L20.2 7.8M20.3 5.4L20.8 2.8M20.3 5.4L22.8 6.3M14.8 8.6L23.1 13.4M17.7 10.3L20.2 9.4M17.7 10.3L18.2 12.9M20.3 11.8L22.8 10.9M20.3 11.8L20.8 14.4" stroke="#d2d2d2" stroke-width="1" fill="none"/><rect x="0.3" y="15.6" width="29" height="11.8" fill="#3d3d3d"/><text x="14.6" y="26" text-anchor="middle" font-family="Liberation Sans" font-weight="700" font-size="12.6" fill="#3bb3c4" letter-spacing="-0.2">0,0,0</text></svg>
<div style="left:573px;top:104px;width:2px;height:35px;background:#9a9a9a;"></div>
<svg style="left:584px;top:108px;" width="26" height="26" viewBox="0 0 26 26"><circle cx="13" cy="13" r="12.1" fill="none" stroke="#c6c6c6" stroke-width="0.9"/><path d="M13 11.6L23.6 16.8L13 22L2.4 16.8z" fill="#e0964f" stroke="#444444" stroke-width="0.7"/><path d="M13 4L23.6 9.2L13 14.4L2.4 9.2z" fill="#e0964f" stroke="#444444" stroke-width="0.7"/></svg>
<svg style="left:620.5px;top:109.5px;" width="23" height="23" viewBox="0 0 23 23"><rect x="3.5" y="0.3" width="9" height="9" fill="#c6c6c6"/><rect x="13.6" y="0.3" width="9" height="9" fill="#c6c6c6"/><rect x="13.6" y="10.4" width="9" height="9" fill="#c6c6c6"/><rect x="0.3" y="13.4" width="9.2" height="9.2" fill="#e0964f"/></svg>
<svg style="left:652px;top:107.5px;" width="29" height="28" viewBox="0 0 29 28"><path d="M0.6 7.6L6.199999999999999 4.2L11.799999999999999 7.6V19L6.199999999999999 22.4L0.6 19z" fill="#e0964f"/><path d="M0.6 7.6L6.199999999999999 10.6L11.799999999999999 7.6M6.199999999999999 10.6V22.4" stroke="#444444" stroke-width="1" fill="none" stroke-width="0.9"/><path d="M16.6 7.6L22.200000000000003 4.2L27.8 7.6V19L22.200000000000003 22.4L16.6 19z" fill="#e0964f"/><path d="M16.6 7.6L22.200000000000003 10.6L27.8 7.6M22.200000000000003 10.6V22.4" stroke="#444444" stroke-width="1" fill="none" stroke-width="0.9"/><path d="M14.4 0.5V27" stroke="#d8d8d8" stroke-width="1.3" stroke-dasharray="3.4 1.6"/></svg>
<svg style="left:689.8px;top:108.3px;" width="25" height="25" viewBox="0 0 25 25"><rect x="0.4" y="9" width="7" height="7" fill="#c6c6c6"/><rect x="0.4" y="16.8" width="7" height="7" fill="#c6c6c6"/><rect x="8.2" y="16.8" width="7" height="7" fill="#c6c6c6"/><rect x="7.5" y="-0.3" width="16.6" height="16.6" fill="#444444"/><rect x="8.3" y="0.4" width="3.1" height="3.1" fill="#e0964f"/><rect x="8.3" y="4.3" width="3.1" height="3.1" fill="#e0964f"/><rect x="8.3" y="8.2" width="3.1" height="3.1" fill="#e0964f"/><rect x="8.3" y="12.1" width="3.1" height="3.1" fill="#e0964f"/><rect x="12.2" y="0.4" width="3.1" height="3.1" fill="#e0964f"/><rect x="12.2" y="4.3" width="3.1" height="3.1" fill="#e0964f"/><rect x="12.2" y="8.2" width="3.1" height="3.1" fill="#e0964f"/><rect x="12.2" y="12.1" width="3.1" height="3.1" fill="#e0964f"/><rect x="16.1" y="0.4" width="3.1" height="3.1" fill="#e0964f"/><rect x="16.1" y="4.3" width="3.1" height="3.1" fill="#e0964f"/><rect x="16.1" y="8.2" width="3.1" height="3.1" fill="#e0964f"/><rect x="16.1" y="12.1" width="3.1" height="3.1" fill="#e0964f"/><rect x="20.0" y="0.4" width="3.1" height="3.1" fill="#e0964f"/><rect x="20.0" y="4.3" width="3.1" height="3.1" fill="#e0964f"/><rect x="20.0" y="8.2" width="3.1" height="3.1" fill="#e0964f"/><rect x="20.0" y="12.1" width="3.1" height="3.1" fill="#e0964f"/></svg>
<svg style="left:724.5px;top:108.3px;" width="25" height="25" viewBox="0 0 25 25"><rect x="0.4" y="8.6" width="3.1" height="3.1" fill="#c6c6c6"/><rect x="0.4" y="12.5" width="3.1" height="3.1" fill="#c6c6c6"/><rect x="0.4" y="16.4" width="3.1" height="3.1" fill="#c6c6c6"/><rect x="0.4" y="20.3" width="3.1" height="3.1" fill="#c6c6c6"/><rect x="4.3" y="8.6" width="3.1" height="3.1" fill="#c6c6c6"/><rect x="4.3" y="12.5" width="3.1" height="3.1" fill="#c6c6c6"/><rect x="4.3" y="16.4" width="3.1" height="3.1" fill="#c6c6c6"/><rect x="4.3" y="20.3" width="3.1" height="3.1" fill="#c6c6c6"/><rect x="8.2" y="8.6" width="3.1" height="3.1" fill="#c6c6c6"/><rect x="8.2" y="12.5" width="3.1" height="3.1" fill="#c6c6c6"/><rect x="8.2" y="16.4" width="3.1" height="3.1" fill="#c6c6c6"/><rect x="8.2" y="20.3" width="3.1" height="3.1" fill="#c6c6c6"/><rect x="12.1" y="8.6" width="3.1" height="3.1" fill="#c6c6c6"/><rect x="12.1" y="12.5" width="3.1" height="3.1" fill="#c6c6c6"/><rect x="12.1" y="16.4" width="3.1" height="3.1" fill="#c6c6c6"/><rect x="12.1" y="20.3" width="3.1" height="3.1" fill="#c6c6c6"/><rect x="7.6" y="-0.2" width="16.6" height="16.4" fill="#444444"/><rect x="8.4" y="0.4" width="7.2" height="7.2" fill="#e0964f"/><rect x="16.4" y="0.4" width="7.2" height="7.2" fill="#e0964f"/><rect x="8.4" y="8.4" width="7.2" height="7.2" fill="#e0964f"/><rect x="16.4" y="8.4" width="7.2" height="7.2" fill="#e0964f"/></svg>
<svg style="left:760px;top:107.5px;" width="24" height="28" viewBox="0 0 24 28"><path d="M11.5 14.5L23.2 20.3L12.2 26.6L1.5 20.8z" fill="#c6c6c6"/><path d="M6.5 17.5L17.8 23.4M17.5 17.3L6.6 23.6" stroke="#444444" stroke-width="1" fill="none" stroke-width="0.9"/><path d="M0.6 3.4L6.3 0.4L12 3.4V18.8L6.3 21.8L0.6 18.8z" fill="#e0964f"/><path d="M0.6 3.4L6.3 6.4L12 3.4M6.3 6.4V21.8" stroke="#444444" stroke-width="1" fill="none" stroke-width="0.9"/></svg>
<svg style="left:791.5px;top:106px;" width="31" height="30" viewBox="0 0 31 30"><path d="M7.3 0.9000000000000004L13.899999999999999 4.2L7.3 7.5L0.7000000000000002 4.2z" fill="#c6c6c6" /><path d="M16.4 5.7L23.0 9L16.4 12.3L9.799999999999999 9z" fill="none" stroke="#e0964f" stroke-width="0.9" stroke-dasharray="1.6 1.2"/><path d="M7.3 12.100000000000001L13.899999999999999 15.4L7.3 18.7L0.7000000000000002 15.4z" fill="#c6c6c6" /><path d="M23.6 10.7L30.200000000000003 14L23.6 17.3L17.0 14z" fill="#c6c6c6" /><path d="M16.4 16.9L23.0 20.2L16.4 23.5L9.799999999999999 20.2z" fill="#e0964f" /><path d="M23.6 22.099999999999998L30.200000000000003 25.4L23.6 28.7L17.0 25.4z" fill="#c6c6c6" /></svg>
<svg style="left:829px;top:107.5px;" width="25" height="28" viewBox="0 0 25 28"><path d="M12.2 0.4L23.8 6.6V20.2L12.2 26.6L0.5 20.2V6.6z" fill="#e0964f"/><path d="M0.5 6.6L2.6 5.4L12.2 11.2L21.8 5.4L23.8 6.6V9L13.8 15V25.8L12.2 26.6L10.6 25.8V15L0.5 9z" fill="#c6c6c6" stroke="#444444" stroke-width="0.7"/><path d="M12.2 11.2V15" stroke="#444444" stroke-width="1" fill="none" stroke-width="0.7"/></svg>
<svg style="left:862px;top:108px;" width="28" height="28" viewBox="0 0 28 28"><path d="M3 9.5H12.5V14H16.5V18H14.5V23H3z" fill="#c6c6c6"/><path d="M3 16.3H14.5M8.8 9.5V23" stroke="#444444" stroke-width="0.9"/><path d="M12.4 0.8Q20 -0.2 27 0.8V11L19 11.5L12.4 10.5z" fill="#e0964f"/><path d="M18.8 12Q24 13.5 27 16.5V11.5z" fill="#e0964f"/><path d="M19.5 0.5V11.5M12.4 5.6H27" stroke="#444444" stroke-width="0.8"/><path d="M27 11L19.2 11.6L18.6 17.6L27 17z" fill="#e0964f"/><path d="M18.8 11.6L26.8 11" stroke="#444444" stroke-width="0.8"/><rect x="12.2" y="10.2" width="5.4" height="5.4" fill="#444444"/><rect x="13.4" y="11.4" width="3" height="3" fill="none" stroke="#e0964f" stroke-width="0.9"/><rect x="1.2" y="13.6" width="3" height="3" fill="#444444" stroke="#d8d8d8" stroke-width="0.9"/><rect x="1.2" y="21.6" width="3" height="3" fill="#444444" stroke="#d8d8d8" stroke-width="0.9"/><rect x="9.2" y="21.6" width="3" height="3" fill="#444444" stroke="#d8d8d8" stroke-width="0.9"/></svg>
<svg style="left:899.5px;top:109.3px;" width="25" height="25" viewBox="0 0 25 25"><circle cx="12.2" cy="12.2" r="12" fill="#e0964f"/><circle cx="12.2" cy="12.2" r="8.6" stroke="#444444" stroke-width="1" fill="none" stroke-width="0.9"/><path d="M12.2 12.2L24.2 12.2M12.2 12.2L20.7 20.7M12.2 12.2L12.2 24.2M12.2 12.2L3.7 20.7M12.2 12.2L0.2 12.2M12.2 12.2L3.7 3.7M12.2 12.2L12.2 0.2M12.2 12.2L20.7 3.7" stroke="#444444" stroke-width="1" fill="none" stroke-width="0.9"/></svg>
<svg style="left:934px;top:108px;" width="27" height="26" viewBox="0 0 27 26"><rect x="10.2" y="0.4" width="15.2" height="15.2" fill="#c6c6c6" stroke="#444444" stroke-width="0.6"/><path d="M10.2 15.6L25.4 0.4" stroke="#444444" stroke-width="1" fill="none" stroke-width="0.9"/><rect x="0.4" y="9.4" width="16" height="16" fill="#e0964f" stroke="#444444" stroke-width="0.8"/><path d="M0.4 9.4L16.4 25.4" stroke="#444444" stroke-width="1" fill="none" stroke-width="0.9"/></svg>
<svg style="left:967px;top:113px;" width="30" height="19" viewBox="0 0 30 19"><path d="M14.6 2L28.6 9.4L14.6 17.6L0.8 10.2z" fill="#c6c6c6"/><path d="M7.5 6L21.6 13.6M21.6 5.6L7.8 14" stroke="#444444" stroke-width="0.9"/><path d="M6.8 3.6L13.6 7.2L6.8 10.8L0.4 7.2z" fill="#e0964f" stroke="#444444" stroke-width="0.6" transform="translate(0.3,3.4)"/><path d="M6.8 3.6L13.6 7.2L6.8 10.8L0.4 7.2z" fill="#e0964f" stroke="#444444" stroke-width="0.6" transform="translate(0.3,-3.2)"/></svg>
<svg style="left:1005.5px;top:108.3px;" width="25" height="25" viewBox="0 0 25 25"><rect x="2.5" y="2.5" width="19" height="19" fill="none" stroke="#d2d2d2" stroke-width="1"/><path d="M4.5 4.5L9.8 9.8M19.5 4.5L14.2 9.8M4.5 19.5L9.8 14.2M19.5 19.5L14.2 14.2" stroke="#e0964f" stroke-width="0.9"/><rect x="9.8" y="9.8" width="4.4" height="4.4" fill="none" stroke="#e0964f" stroke-width="1"/><rect x="0.7" y="0.7" width="2.6" height="2.6" fill="#444444" stroke="#d8d8d8" stroke-width="0.9"/><rect x="20.7" y="0.7" width="2.6" height="2.6" fill="#444444" stroke="#d8d8d8" stroke-width="0.9"/><rect x="0.7" y="20.7" width="2.6" height="2.6" fill="#444444" stroke="#d8d8d8" stroke-width="0.9"/><rect x="20.7" y="20.7" width="2.6" height="2.6" fill="#444444" stroke="#d8d8d8" stroke-width="0.9"/></svg>
<svg style="left:1039.5px;top:109.3px;" width="25" height="25" viewBox="0 0 25 25"><rect x="0.3" y="9.6" width="4.2" height="4.2" fill="#c6c6c6"/><rect x="0.3" y="14.7" width="4.2" height="4.2" fill="#c6c6c6"/><rect x="0.3" y="19.8" width="4.2" height="4.2" fill="#c6c6c6"/><rect x="5.4" y="9.6" width="4.2" height="4.2" fill="#c6c6c6"/><rect x="5.4" y="14.7" width="4.2" height="4.2" fill="#c6c6c6"/><rect x="5.4" y="19.8" width="4.2" height="4.2" fill="#c6c6c6"/><rect x="10.5" y="9.6" width="4.2" height="4.2" fill="#c6c6c6"/><rect x="10.5" y="14.7" width="4.2" height="4.2" fill="#c6c6c6"/><rect x="10.5" y="19.8" width="4.2" height="4.2" fill="#c6c6c6"/><circle cx="15.8" cy="8.6" r="9.2" fill="#444444"/><circle cx="15.8" cy="8.6" r="8.4" fill="#e0964f"/><path d="M13.2 0.6Q11.6 8.6 13.2 16.6M18.4 0.6Q20 8.6 18.4 16.6M7.8 6Q15.8 4.6 23.8 6M7.8 11.2Q15.8 12.6 23.8 11.2" stroke="#444444" stroke-width="1" fill="none" stroke-width="0.9"/></svg>
<div style="left:1075px;top:104px;width:2px;height:35px;background:#9a9a9a;"></div>
<svg style="left:1085px;top:107px;" width="29" height="28" viewBox="0 0 29 28"><path d="M3.2 15.4L3.2 32M3.2 15.4L19 8.6" stroke="#e0964f" stroke-width="0.9" transform="translate(0,-6.6)"/><path d="M3.4 25.6L13 17.2" stroke="#e0964f" stroke-width="0"/><path d="M3.5 26.2L15.5 14.5L19.5 18.6z" fill="#c6c6c6"/><path d="M16.6 13.6L24.6 5.2Q27 3.6 28.2 5.6Q29 7.4 27.6 8.8L20 17z" fill="#c6c6c6"/><rect x="1.6" y="6.5" width="2.6" height="2.6" fill="#444444" stroke="#e0964f" stroke-width="0.9"/><rect x="17.8" y="0.6" width="2.6" height="2.6" fill="#444444" stroke="#e0964f" stroke-width="0.9"/><rect x="1.6" y="24.4" width="2.6" height="2.6" fill="#444444" stroke="#e0964f" stroke-width="0.9"/></svg>
<svg style="left:1121px;top:107.8px;" width="25" height="26" viewBox="0 0 25 26"><path d="M3.5 3.5H21.5V22.5H3.5z" fill="none" stroke="#d2d2d2" stroke-width="1"/><path d="M12.5 3V23" stroke="#e0964f" stroke-width="1"/><rect x="1.6" y="1.6" width="2.6" height="2.6" fill="#444444" stroke="#d8d8d8" stroke-width="0.9"/><rect x="20.8" y="1.6" width="2.6" height="2.6" fill="#444444" stroke="#d8d8d8" stroke-width="0.9"/><rect x="1.6" y="21.6" width="2.6" height="2.6" fill="#444444" stroke="#d8d8d8" stroke-width="0.9"/><rect x="20.8" y="21.6" width="2.6" height="2.6" fill="#444444" stroke="#d8d8d8" stroke-width="0.9"/><rect x="10.3" y="0.8" width="4.4" height="4.4" fill="#444444" stroke="#e0964f" stroke-width="1"/><rect x="10.3" y="20.8" width="4.4" height="4.4" fill="#444444" stroke="#e0964f" stroke-width="1"/></svg>
<svg style="left:1155.5px;top:109.5px;" width="29" height="23" viewBox="0 0 29 23"><path d="M2.2 2.2H9.8V10H2.2z" fill="none" stroke="#c6c6c6" stroke-width="0.9" stroke-dasharray="2 1.6"/><rect x="0.6" y="0.8" width="3" height="3" fill="#c6c6c6"/><rect x="8.4" y="0.8" width="3" height="3" fill="#c6c6c6"/><rect x="0.6" y="8.6" width="3" height="3" fill="#c6c6c6"/><rect x="8.4" y="8.6" width="3" height="3" fill="#c6c6c6"/><rect x="0.6" y="17.4" width="3" height="3" fill="#e0964f"/><path d="M8.2 19.4l2 1.6" stroke="#e0964f" stroke-width="1.2"/><path d="M11.4 17.6L22.6 4.2Q24.6 2 26.6 3.6Q28.4 5.4 26.6 7.4L14.6 20.2L10 21.6z" fill="#c6c6c6"/><path d="M21.6 5.4L25.4 8.6" stroke="#444444" stroke-width="0.8"/></svg>
<div style="left:1192px;top:104px;width:2px;height:35px;background:#9a9a9a;"></div>
<svg style="left:1204.5px;top:109.5px;" width="26" height="25" viewBox="0 0 26 25"><rect x="0.3" y="0.3" width="22.2" height="22.2" fill="#5fae8c"/><rect x="14.6" y="13.6" width="11.2" height="11.2" fill="#3a3a3a"/><rect x="15.65" y="14.65" width="2.70" height="2.70" fill="#d6d6d6"/><rect x="15.65" y="21.05" width="2.70" height="2.70" fill="#d6d6d6"/><rect x="18.85" y="17.85" width="2.70" height="2.70" fill="#d6d6d6"/><rect x="22.05" y="14.65" width="2.70" height="2.70" fill="#d6d6d6"/><rect x="22.05" y="21.05" width="2.70" height="2.70" fill="#d6d6d6"/></svg>
<svg style="left:1239.5px;top:109.5px;" width="27" height="25" viewBox="0 0 27 25"><path d="M0.3 0.8Q11 6.8 21.8 0.8V19Q11 26 0.3 19z" fill="#5fae8c"/><rect x="15.599999999999998" y="13.6" width="11.2" height="11.2" fill="#3a3a3a"/><rect x="16.65" y="14.65" width="2.70" height="2.70" fill="#d6d6d6"/><rect x="16.65" y="21.05" width="2.70" height="2.70" fill="#d6d6d6"/><rect x="19.85" y="17.85" width="2.70" height="2.70" fill="#d6d6d6"/><rect x="23.05" y="14.65" width="2.70" height="2.70" fill="#d6d6d6"/><rect x="23.05" y="21.05" width="2.70" height="2.70" fill="#d6d6d6"/></svg>
<svg style="left:1273.5px;top:109.5px;" width="28" height="25" viewBox="0 0 28 25"><path d="M3.2 2Q12.4 7.8 21.6 2Q27 11 21 19.8Q12.4 26 3.6 19.8Q-2.4 11 3.2 2z" fill="#5fae8c"/><rect x="16.2" y="13.6" width="11.2" height="11.2" fill="#3a3a3a"/><rect x="17.25" y="14.65" width="2.70" height="2.70" fill="#d6d6d6"/><rect x="17.25" y="21.05" width="2.70" height="2.70" fill="#d6d6d6"/><rect x="20.45" y="17.85" width="2.70" height="2.70" fill="#d6d6d6"/><rect x="23.65" y="14.65" width="2.70" height="2.70" fill="#d6d6d6"/><rect x="23.65" y="21.05" width="2.70" height="2.70" fill="#d6d6d6"/></svg>
<svg style="left:1308.5px;top:107.5px;" width="28" height="27" viewBox="0 0 28 27"><path d="M12.4 0.3L24 6.2L12.4 12.4L0.8 6.2z" fill="#5fae8c"/><path d="M0.3 8L11.5 14V26L0.3 19.6z" fill="#5fae8c"/><path d="M13.3 14L24.4 8V19.6L13.3 26z" fill="#5fae8c"/><rect x="16.599999999999998" y="15.599999999999998" width="11.2" height="11.2" fill="#3a3a3a"/><rect x="17.65" y="16.65" width="2.70" height="2.70" fill="#d6d6d6"/><rect x="17.65" y="23.05" width="2.70" height="2.70" fill="#d6d6d6"/><rect x="20.85" y="19.85" width="2.70" height="2.70" fill="#d6d6d6"/><rect x="24.05" y="16.65" width="2.70" height="2.70" fill="#d6d6d6"/><rect x="24.05" y="23.05" width="2.70" height="2.70" fill="#d6d6d6"/></svg>
<svg style="left:1343.5px;top:108px;" width="28" height="27" viewBox="0 0 28 27"><path d="M5.8 24.6Q0.2 16.5 7 11.6Q12 9 17 9.8Q23.4 9.6 21.6 2" fill="none" stroke="#5fae8c" stroke-width="6.4"/><path d="M19.2 3.4L23.6 0.2L25 5z" fill="#5fae8c"/><path d="M5.6 23.6Q1.6 16.8 7.6 12.6Q12 10.4 17 11Q24 10.4 22.4 3.4" fill="none" stroke="#444444" stroke-width="1"/><rect x="16.599999999999998" y="15.2" width="11.2" height="11.2" fill="#3a3a3a"/><rect x="17.65" y="16.25" width="2.70" height="2.70" fill="#d6d6d6"/><rect x="17.65" y="22.65" width="2.70" height="2.70" fill="#d6d6d6"/><rect x="20.85" y="19.45" width="2.70" height="2.70" fill="#d6d6d6"/><rect x="24.05" y="16.25" width="2.70" height="2.70" fill="#d6d6d6"/><rect x="24.05" y="22.65" width="2.70" height="2.70" fill="#d6d6d6"/></svg>
<svg style="left:1378.5px;top:108.3px;" width="25" height="25" viewBox="0 0 25 25"><rect x="0.3" y="0.5" width="24.2" height="3.6" fill="#c6c6c6"/><path d="M1.6 2.3h1.6M4.4 2.3h1.6M7.2 2.3h1.6" stroke="#444444" stroke-width="1.4"/><rect x="0.3" y="5" width="24.2" height="19.6" fill="#5fae8c"/><rect x="5.2" y="7.8" width="14" height="14" fill="#3a3a3a"/><rect x="6.3" y="8.8" width="3.5" height="3.5" fill="#d6d6d6"/><rect x="6.3" y="17.2" width="3.5" height="3.5" fill="#d6d6d6"/><rect x="10.5" y="13.0" width="3.5" height="3.5" fill="#d6d6d6"/><rect x="14.7" y="8.8" width="3.5" height="3.5" fill="#d6d6d6"/><rect x="14.7" y="17.2" width="3.5" height="3.5" fill="#d6d6d6"/></svg>
<svg style="left:1411.5px;top:111.5px;" width="28" height="20" viewBox="0 0 28 20"><path d="M2 4.5L14 12L26 4.5M2 17.5L14 10L26 17.5" stroke="#5fae8c" stroke-width="2.4" fill="none"/><path d="M0.3 2.6L6 2.2L3 7.4zM27.7 2.6L22 2.2L25 7.4zM0.3 19.4L6 19.8L3 14.6zM27.7 19.4L22 19.8L25 14.6z" fill="#5fae8c"/><rect x="8.8" y="-0.2" width="10.4" height="10.4" fill="#3a3a3a"/><rect x="9.6" y="0.6" width="2.7" height="2.7" fill="#d6d6d6"/><rect x="9.6" y="6.6" width="2.7" height="2.7" fill="#d6d6d6"/><rect x="12.6" y="3.6" width="2.7" height="2.7" fill="#d6d6d6"/><rect x="15.6" y="0.6" width="2.7" height="2.7" fill="#d6d6d6"/><rect x="15.6" y="6.6" width="2.7" height="2.7" fill="#d6d6d6"/></svg>
<svg style="left:1447px;top:108.3px;" width="28" height="27" viewBox="0 0 28 27"><path d="M2.6 2.6Q0.2 8 3.2 14Q5.5 18.5 3.2 23.6Q6 26.6 9 25.6" fill="none" stroke="#5fae8c" stroke-width="0.9"/><path d="M8.6 2Q16 0.2 21.4 3.6" fill="none" stroke="#5fae8c" stroke-width="0.9"/><path d="M1.6 23.2L22.6 1.6Q24.6 0 26 1.6Q27 3 25.6 4.8L12.6 17.2z" fill="#c6c6c6"/><path d="M3.4 2.4a2 2.6 -30 1 1 3.4 1.6L14 12.6L24 24.4L11.6 15z" fill="#c6c6c6" stroke="#444444" stroke-width="0.6"/><ellipse cx="4.6" cy="3.6" rx="1" ry="1.6" transform="rotate(-35 4.6 3.6)" fill="#444444"/></svg>
</body></html>
